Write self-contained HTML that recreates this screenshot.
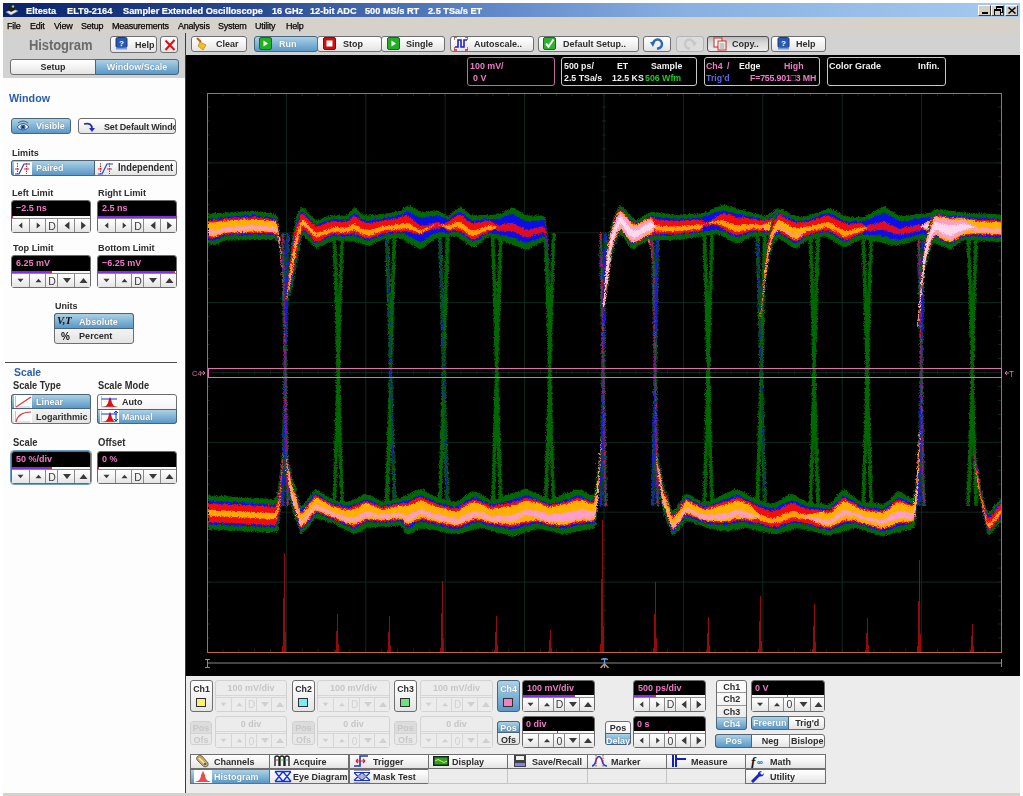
<!DOCTYPE html>
<html><head><meta charset="utf-8"><style>
html,body{margin:0;padding:0;}
body{width:1023px;height:796px;overflow:hidden;position:relative;background:#fff;font-family:"Liberation Sans", sans-serif;}
div{font-family:"Liberation Sans", sans-serif;}
</style></head><body>
<div style="position:absolute;left:3px;top:3px;width:1017px;height:793px;background:#d6d2ca;"></div><div style="position:absolute;left:3px;top:3px;width:1017px;height:14px;background:linear-gradient(90deg,#0a246a 0%,#2a4a90 25%,#6088c8 48%,#88b0e0 67%,#a6caf0 100%);"></div><svg style="position:absolute;left:5px;top:4px" width="14" height="12" viewBox="0 0 14 12"><path d="M1,8 L8,5 L13,7 L6,11 Z" fill="#e8e8e8" stroke="#888" stroke-width="0.6"/><path d="M3,3 L7,1 L10,3 L10,6 L6,8 L3,6 Z" fill="#202020"/><circle cx="8" cy="2.5" r="1.2" fill="#9ad09a"/></svg><div style="position:absolute;left:26px;top:6.02px;font-size:9.94px;font-weight:bold;color:#fff;white-space:nowrap;line-height:1;transform:scaleX(0.926);transform-origin:0 0;-webkit-text-stroke:0.2px #fff;">Eltesta</div><div style="position:absolute;left:66.5px;top:6.02px;font-size:9.94px;font-weight:bold;color:#fff;white-space:nowrap;line-height:1;transform:scaleX(0.926);transform-origin:0 0;-webkit-text-stroke:0.2px #fff;">ELT9-2164</div><div style="position:absolute;left:123.4px;top:6.02px;font-size:9.94px;font-weight:bold;color:#fff;white-space:nowrap;line-height:1;transform:scaleX(0.926);transform-origin:0 0;-webkit-text-stroke:0.2px #fff;">Sampler Extended Oscilloscope</div><div style="position:absolute;left:271.8px;top:6.02px;font-size:9.94px;font-weight:bold;color:#fff;white-space:nowrap;line-height:1;transform:scaleX(0.926);transform-origin:0 0;-webkit-text-stroke:0.2px #fff;">16 GHz</div><div style="position:absolute;left:310px;top:6.02px;font-size:9.94px;font-weight:bold;color:#fff;white-space:nowrap;line-height:1;transform:scaleX(0.926);transform-origin:0 0;-webkit-text-stroke:0.2px #fff;">12-bit ADC</div><div style="position:absolute;left:364.6px;top:6.02px;font-size:9.94px;font-weight:bold;color:#fff;white-space:nowrap;line-height:1;transform:scaleX(0.926);transform-origin:0 0;-webkit-text-stroke:0.2px #fff;">500 MS/s RT</div><div style="position:absolute;left:428.2px;top:6.02px;font-size:9.94px;font-weight:bold;color:#fff;white-space:nowrap;line-height:1;transform:scaleX(0.926);transform-origin:0 0;-webkit-text-stroke:0.2px #fff;">2.5 TSa/s ET</div><div style="position:absolute;left:978px;top:5px;width:13px;height:11px;box-sizing:border-box;background:#d4d0c8;border:1px solid;border-color:#fff #404040 #404040 #fff;overflow:hidden;"><div style="position:absolute;left:3px;top:6px;width:6px;height:2px;background:#000"></div></div><div style="position:absolute;left:991px;top:5px;width:13px;height:11px;box-sizing:border-box;background:#d4d0c8;border:1px solid;border-color:#fff #404040 #404040 #fff;overflow:hidden;"><div style="position:absolute;left:4px;top:0px;width:5px;height:4px;border:1px solid #000;border-top-width:2px"></div><div style="position:absolute;left:2px;top:3px;width:5px;height:4px;border:1px solid #000;border-top-width:2px;background:#d4d0c8"></div></div><div style="position:absolute;left:1005px;top:5px;width:13px;height:11px;box-sizing:border-box;background:#d4d0c8;border:1px solid;border-color:#fff #404040 #404040 #fff;overflow:hidden;"><svg style="position:absolute;left:2px;top:1px" width="8" height="7" viewBox="0 0 8 7"><path d="M0.5,0.5 L7.5,6.5 M7.5,0.5 L0.5,6.5" stroke="#000" stroke-width="1.5"/></svg></div><div style="position:absolute;left:7.4px;top:20.86px;font-size:9.72px;font-weight:normal;color:#000;white-space:nowrap;line-height:1;transform:scaleX(0.926);transform-origin:0 0;letter-spacing:-0.25px;-webkit-text-stroke:0.25px #000;">File</div><div style="position:absolute;left:29.7px;top:20.86px;font-size:9.72px;font-weight:normal;color:#000;white-space:nowrap;line-height:1;transform:scaleX(0.926);transform-origin:0 0;letter-spacing:-0.25px;-webkit-text-stroke:0.25px #000;">Edit</div><div style="position:absolute;left:54px;top:20.86px;font-size:9.72px;font-weight:normal;color:#000;white-space:nowrap;line-height:1;transform:scaleX(0.926);transform-origin:0 0;letter-spacing:-0.25px;-webkit-text-stroke:0.25px #000;">View</div><div style="position:absolute;left:80.6px;top:20.86px;font-size:9.72px;font-weight:normal;color:#000;white-space:nowrap;line-height:1;transform:scaleX(0.926);transform-origin:0 0;letter-spacing:-0.25px;-webkit-text-stroke:0.25px #000;">Setup</div><div style="position:absolute;left:112.4px;top:20.86px;font-size:9.72px;font-weight:normal;color:#000;white-space:nowrap;line-height:1;transform:scaleX(0.926);transform-origin:0 0;letter-spacing:-0.25px;-webkit-text-stroke:0.25px #000;">Measurements</div><div style="position:absolute;left:177.9px;top:20.86px;font-size:9.72px;font-weight:normal;color:#000;white-space:nowrap;line-height:1;transform:scaleX(0.926);transform-origin:0 0;letter-spacing:-0.25px;-webkit-text-stroke:0.25px #000;">Analysis</div><div style="position:absolute;left:218px;top:20.86px;font-size:9.72px;font-weight:normal;color:#000;white-space:nowrap;line-height:1;transform:scaleX(0.926);transform-origin:0 0;letter-spacing:-0.25px;-webkit-text-stroke:0.25px #000;">System</div><div style="position:absolute;left:255.2px;top:20.86px;font-size:9.72px;font-weight:normal;color:#000;white-space:nowrap;line-height:1;transform:scaleX(0.926);transform-origin:0 0;letter-spacing:-0.25px;-webkit-text-stroke:0.25px #000;">Utility</div><div style="position:absolute;left:285.8px;top:20.86px;font-size:9.72px;font-weight:normal;color:#000;white-space:nowrap;line-height:1;transform:scaleX(0.926);transform-origin:0 0;letter-spacing:-0.25px;-webkit-text-stroke:0.25px #000;">Help</div><div style="position:absolute;left:186px;top:33px;width:834px;height:22px;background:#d2d2d2;"></div><div style="position:absolute;left:191px;top:36px;width:56px;height:16px;box-sizing:border-box;border:1px solid #6e6e6e;border-radius:3px;background:linear-gradient(#ffffff,#f6f6f6 40%,#e4e4e4);"></div><svg style="position:absolute;left:195px;top:37px" width="14" height="14" viewBox="0 0 14 14"><path d="M2,1 L6,5" stroke="#b06a10" stroke-width="2.2"/><path d="M5,5 L11,8 L8,13 L3,9 Z" fill="#f0c020" stroke="#c08010" stroke-width="0.7"/></svg><div style="position:absolute;left:215.5px;top:39.46px;font-size:9.72px;font-weight:bold;color:#2c2c2c;white-space:nowrap;line-height:1;transform:scaleX(0.926);transform-origin:0 0;">Clear</div><div style="position:absolute;left:254px;top:36px;width:64px;height:16px;box-sizing:border-box;border:1px solid #4a6478;border-radius:3px;background:linear-gradient(#aed0e4,#86b8d8 45%,#5a98c8);"></div><svg style="position:absolute;left:259px;top:37px" width="14" height="14" viewBox="0 0 14 14"><rect x="0.5" y="0.5" width="12" height="12" rx="1.5" fill="#22b022" stroke="#107010"/><path d="M4.5,3.5 L9,6.5 L4.5,9.5 Z" fill="#fff"/></svg><div style="position:absolute;left:279px;top:39.46px;font-size:9.72px;font-weight:bold;color:#ffffff;white-space:nowrap;line-height:1;transform:scaleX(0.926);transform-origin:0 0;text-shadow:0 0 1px rgba(40,60,80,0.6);">Run</div><div style="position:absolute;left:317px;top:36px;width:65px;height:16px;box-sizing:border-box;border:1px solid #6e6e6e;border-radius:3px;background:linear-gradient(#ffffff,#f6f6f6 40%,#e4e4e4);"></div><svg style="position:absolute;left:323px;top:37px" width="14" height="14" viewBox="0 0 14 14"><rect x="0.5" y="0.5" width="12" height="12" rx="1.5" fill="#d01010" stroke="#801010"/><rect x="3.5" y="3.5" width="6" height="6" fill="#fff"/></svg><div style="position:absolute;left:343px;top:39.46px;font-size:9.72px;font-weight:bold;color:#2c2c2c;white-space:nowrap;line-height:1;transform:scaleX(0.926);transform-origin:0 0;">Stop</div><div style="position:absolute;left:381px;top:36px;width:64px;height:16px;box-sizing:border-box;border:1px solid #6e6e6e;border-radius:3px;background:linear-gradient(#ffffff,#f6f6f6 40%,#e4e4e4);"></div><svg style="position:absolute;left:387px;top:37px" width="14" height="14" viewBox="0 0 14 14"><rect x="0.5" y="0.5" width="12" height="12" rx="1.5" fill="#22b022" stroke="#107010"/><path d="M4.5,3.5 L9,6.5 L4.5,9.5 Z" fill="#fff"/></svg><div style="position:absolute;left:406px;top:39.46px;font-size:9.72px;font-weight:bold;color:#2c2c2c;white-space:nowrap;line-height:1;transform:scaleX(0.926);transform-origin:0 0;">Single</div><div style="position:absolute;left:450px;top:36px;width:84px;height:16px;box-sizing:border-box;border:1px solid #6e6e6e;border-radius:3px;background:linear-gradient(#ffffff,#f6f6f6 40%,#e4e4e4);"></div><svg style="position:absolute;left:454px;top:37px" width="14" height="14" viewBox="0 0 14 14"><path d="M1,10 L4,10 L4,3 L7,3 L7,10 L10,10 L10,3 L13,3" stroke="#2020d0" stroke-width="1.6" fill="none"/><path d="M0,0 h3 M0,0 v3 M14,0 h-3 M14,0 v3 M0,13 h3 M0,13 v-3 M14,13 h-3 M14,13 v-3" stroke="#e02020" stroke-width="1.4"/></svg><div style="position:absolute;left:474.3px;top:39.46px;font-size:9.72px;font-weight:bold;color:#2c2c2c;white-space:nowrap;line-height:1;transform:scaleX(0.926);transform-origin:0 0;">Autoscale..</div><div style="position:absolute;left:538px;top:36px;width:101px;height:16px;box-sizing:border-box;border:1px solid #6e6e6e;border-radius:3px;background:linear-gradient(#ffffff,#f6f6f6 40%,#e4e4e4);"></div><svg style="position:absolute;left:543px;top:37px" width="14" height="14" viewBox="0 0 14 14"><rect x="0.5" y="0.5" width="12" height="12" rx="1.5" fill="#30b030" stroke="#107010"/><path d="M3,6.5 L5.5,9.5 L10.5,2.5" stroke="#fff" stroke-width="2" fill="none"/></svg><div style="position:absolute;left:562.7px;top:39.46px;font-size:9.72px;font-weight:bold;color:#2c2c2c;white-space:nowrap;line-height:1;transform:scaleX(0.926);transform-origin:0 0;">Default Setup..</div><div style="position:absolute;left:643px;top:36px;width:28px;height:16px;box-sizing:border-box;border:1px solid #6e6e6e;border-radius:3px;background:linear-gradient(#ffffff,#f6f6f6 40%,#e4e4e4);"></div><svg style="position:absolute;left:650px;top:37px" width="14" height="14" viewBox="0 0 14 14"><path d="M3,7 A4.5,4.5 0 1 1 7,11.5" stroke="#2868c0" stroke-width="2.4" fill="none"/><path d="M0,5 L5,5 L3,10 Z" fill="#2868c0"/></svg><div style="position:absolute;left:676px;top:36px;width:28px;height:16px;box-sizing:border-box;border:1px solid #b4b4b4;border-radius:3px;background:#dcdcdc;"></div><svg style="position:absolute;left:683px;top:37px" width="14" height="14" viewBox="0 0 14 14"><path d="M11,7 A4.5,4.5 0 1 0 7,11.5" stroke="#c8c8c8" stroke-width="2.4" fill="none"/><path d="M14,5 L9,5 L11,10 Z" fill="#c8c8c8"/></svg><div style="position:absolute;left:707px;top:36px;width:62px;height:16px;box-sizing:border-box;border:1px solid #505050;border-radius:3px;background:linear-gradient(#bcbcbc,#dcdcdc 50%,#ececec);"></div><svg style="position:absolute;left:713px;top:37px" width="14" height="14" viewBox="0 0 14 14"><rect x="1" y="1" width="8" height="9" fill="#fff" stroke="#d02020"/><rect x="5" y="4" width="8" height="9" fill="#fff" stroke="#d02020"/><path d="M6.5,7 h5 M6.5,9 h5 M6.5,11 h5" stroke="#707070" stroke-width="0.8"/></svg><div style="position:absolute;left:732px;top:39.46px;font-size:9.72px;font-weight:bold;color:#2c2c2c;white-space:nowrap;line-height:1;transform:scaleX(0.926);transform-origin:0 0;">Copy..</div><div style="position:absolute;left:771px;top:36px;width:55px;height:16px;box-sizing:border-box;border:1px solid #6e6e6e;border-radius:3px;background:linear-gradient(#ffffff,#f6f6f6 40%,#e4e4e4);"></div><svg style="position:absolute;left:777px;top:37px" width="14" height="14" viewBox="0 0 14 14"><rect x="1" y="0.5" width="11" height="10" rx="1.5" fill="#2858b0" stroke="#183880"/><rect x="1" y="10.5" width="11" height="2" fill="#7898d0"/><text x="6.5" y="8.5" font-family="Liberation Sans" font-size="8" font-weight="bold" fill="#fff" text-anchor="middle">?</text></svg><div style="position:absolute;left:795.5px;top:39.46px;font-size:9.72px;font-weight:bold;color:#2c2c2c;white-space:nowrap;line-height:1;transform:scaleX(0.926);transform-origin:0 0;">Help</div><div style="position:absolute;left:3px;top:33px;width:182px;height:45px;background:#d2d2d2;"></div><div style="position:absolute;left:3px;top:78px;width:182px;height:715px;background:#fdfdfd;"></div><div style="position:absolute;left:185px;top:33px;width:1px;height:760px;background:#3c3c3c;"></div><div style="position:absolute;left:29px;top:38.45px;font-size:14.04px;font-weight:bold;color:#6a6a6a;white-space:nowrap;line-height:1;transform:scaleX(0.926);transform-origin:0 0;letter-spacing:-0.1px;">Histogram</div><div style="position:absolute;left:110px;top:36px;width:47px;height:17px;box-sizing:border-box;border:1px solid #6e6e6e;border-radius:3px;background:linear-gradient(#ffffff,#f6f6f6 40%,#e4e4e4);"></div><svg style="position:absolute;left:115px;top:37px" width="14" height="14" viewBox="0 0 14 14"><rect x="1" y="0.5" width="11" height="10" rx="1.5" fill="#2858b0" stroke="#183880"/><rect x="1" y="10.5" width="11" height="2" fill="#7898d0"/><text x="6.5" y="8.5" font-family="Liberation Sans" font-size="8" font-weight="bold" fill="#fff" text-anchor="middle">?</text></svg><div style="position:absolute;left:135px;top:40.06px;font-size:9.72px;font-weight:bold;color:#2c2c2c;white-space:nowrap;line-height:1;transform:scaleX(0.926);transform-origin:0 0;">Help</div><div style="position:absolute;left:160px;top:36px;width:18px;height:17px;box-sizing:border-box;border:1px solid #6e6e6e;border-radius:3px;background:linear-gradient(#ffffff,#f6f6f6 40%,#e4e4e4);"><svg style="position:absolute;left:3px;top:2px" width="12" height="12" viewBox="0 0 12 12"><path d="M1.5,1.5 L10.5,11 M10.5,1 L1.5,11" stroke="#e01010" stroke-width="2"/></svg></div><div style="position:absolute;left:10px;top:59px;width:86px;height:16px;box-sizing:border-box;border:1px solid #6e6e6e;border-radius:3px;background:linear-gradient(#ffffff,#f6f6f6 40%,#e4e4e4);border-radius:3px 0 0 3px;"></div><div style="position:absolute;left:10px;top:62.46px;width:86px;text-align:center;font-size:9.72px;font-weight:bold;color:#2c2c2c;white-space:nowrap;line-height:1;transform:scaleX(0.926);transform-origin:50% 0;">Setup</div><div style="position:absolute;left:95px;top:59px;width:84px;height:16px;box-sizing:border-box;border:1px solid #4a6478;border-radius:3px;background:linear-gradient(#aed0e4,#86b8d8 45%,#5a98c8);border-radius:0 3px 3px 0;"></div><div style="position:absolute;left:95px;top:62.46px;width:84px;text-align:center;font-size:9.72px;font-weight:bold;color:#ffffff;white-space:nowrap;line-height:1;transform:scaleX(0.926);transform-origin:50% 0;text-shadow:0 0 1px rgba(40,60,80,0.6);">Window/Scale</div><div style="position:absolute;left:9px;top:91.61px;font-size:11.61px;font-weight:bold;color:#2a5ea8;white-space:nowrap;line-height:1;transform:scaleX(0.926);transform-origin:0 0;">Window</div><div style="position:absolute;left:11px;top:118px;width:60px;height:16px;box-sizing:border-box;border:1px solid #4a6478;border-radius:3px;background:linear-gradient(#aed0e4,#86b8d8 45%,#5a98c8);"></div><svg style="position:absolute;left:16px;top:119px" width="14" height="13" viewBox="0 0 14 13"><path d="M1,8 Q7,1 13,8 Q7,14 1,8 Z" fill="#fff" stroke="#304060" stroke-width="0.8"/><circle cx="7" cy="8" r="2.6" fill="#2a70c0"/><circle cx="7" cy="8" r="1" fill="#102040"/><path d="M2,4 Q7,0 12,4" stroke="#304060" fill="none" stroke-width="0.8"/></svg><div style="position:absolute;left:35.5px;top:120.76px;font-size:9.72px;font-weight:bold;color:#ffffff;white-space:nowrap;line-height:1;transform:scaleX(0.926);transform-origin:0 0;text-shadow:0 0 1px rgba(40,60,80,0.6);">Visible</div><div style="position:absolute;left:78px;top:118px;width:98px;height:16px;box-sizing:border-box;border:1px solid #6e6e6e;border-radius:3px;background:linear-gradient(#ffffff,#f6f6f6 40%,#e4e4e4);overflow:hidden;"><svg style="position:absolute;left:4px;top:2px" width="14" height="12" viewBox="0 0 14 12"><path d="M1,3 Q9,1 9,8" stroke="#2030b0" stroke-width="1.8" fill="none"/><path d="M6,7 L12,7 L9,11 Z" fill="#2030b0"/></svg><div style="position:absolute;left:25px;top:3.26px;font-size:9.72px;font-weight:bold;color:#2c2c2c;white-space:nowrap;line-height:1;transform:scaleX(0.926);transform-origin:0 0;letter-spacing:-0.2px;">Set Default Window</div></div><div style="position:absolute;left:12px;top:147.74px;font-size:9.83px;font-weight:bold;color:#2c2c2c;white-space:nowrap;line-height:1;transform:scaleX(0.926);transform-origin:0 0;">Limits</div><div style="position:absolute;left:11px;top:160px;width:166px;height:16px;box-sizing:border-box;border:1px solid #6e6e6e;border-radius:3px;background:linear-gradient(#ffffff,#f6f6f6 40%,#e4e4e4);"></div><div style="position:absolute;left:11px;top:160px;width:84px;height:16px;box-sizing:border-box;border:1px solid #4a6478;border-radius:3px;background:linear-gradient(#aed0e4,#86b8d8 45%,#5a98c8);border-radius:3px 0 0 3px;"></div><svg style="position:absolute;left:14px;top:161.5px" width="18" height="13" viewBox="0 0 18 13"><rect x="0" y="0" width="18" height="13" fill="#fff"/><path d="M1,12 L5,12 L10,2 L16,2" stroke="#2040d0" stroke-width="1.2" fill="none"/><path d="M3.5,1 v11 M12.5,1 v11" stroke="#e02020" stroke-width="1" stroke-dasharray="1.5,1"/><path d="M1,7 h4 M10,7 h5" stroke="#e02020" stroke-width="1"/></svg><div style="position:absolute;left:36.2px;top:162.66px;font-size:9.72px;font-weight:bold;color:#ffffff;white-space:nowrap;line-height:1;transform:scaleX(0.926);transform-origin:0 0;text-shadow:0 0 1px rgba(40,60,80,0.6);">Paired</div><svg style="position:absolute;left:97px;top:161.5px" width="18" height="13" viewBox="0 0 18 13"><path d="M1,12 L5,12 L10,2 L16,2" stroke="#2040d0" stroke-width="1.2" fill="none"/><path d="M3.5,1 v11 M12.5,1 v11" stroke="#e02020" stroke-width="1" stroke-dasharray="1.5,1"/><path d="M1,7 h4 M10,7 h5" stroke="#e02020" stroke-width="1"/></svg><div style="position:absolute;left:118.3px;top:162.60px;font-size:10.04px;font-weight:bold;color:#2c2c2c;white-space:nowrap;line-height:1;transform:scaleX(0.926);transform-origin:0 0;">Independent</div><div style="position:absolute;left:12px;top:188.02px;font-size:9.94px;font-weight:bold;color:#2c2c2c;white-space:nowrap;line-height:1;transform:scaleX(0.926);transform-origin:0 0;">Left Limit</div><div style="position:absolute;left:98px;top:188.02px;font-size:9.94px;font-weight:bold;color:#2c2c2c;white-space:nowrap;line-height:1;transform:scaleX(0.926);transform-origin:0 0;">Right Limit</div><div style="position:absolute;left:11px;top:200px;width:80px;height:33px;box-sizing:border-box;border:1px solid #6a6a6a;border-radius:3px;background:#fff;overflow:hidden;"></div><div style="position:absolute;left:12px;top:201px;width:78px;height:15px;background:#000;border-radius:2px 2px 0 0;"></div><div style="position:absolute;left:15.5px;top:203.06px;font-size:9.72px;font-weight:bold;color:#f07ac8;white-space:nowrap;line-height:1;transform:scaleX(0.926);transform-origin:0 0;">&minus;2.5 ns</div><div style="position:absolute;left:12px;top:216px;width:78px;height:3px;background:#f6f6f6;border-bottom:1px solid #8a8a8a;box-sizing:border-box;"></div><div style="position:absolute;left:11px;top:216px;width:2px;height:2px;background:#e02040;"></div><div style="position:absolute;left:12px;top:219px;width:17px;height:13px;box-sizing:border-box;background:linear-gradient(#ffffff,#f6f6f6 40%,#e4e4e4);"><svg style="position:absolute;left:0px;top:0px" width="17" height="13" viewBox="0 0 17 13"><path d="M6.7,6.5 L10.3,3.5 L10.3,9.5 Z" fill="#3a3a3a"/></svg></div><div style="position:absolute;left:29px;top:219px;width:16px;height:13px;box-sizing:border-box;background:linear-gradient(#ffffff,#f6f6f6 40%,#e4e4e4);border-left:1px solid #8a8a8a;"><svg style="position:absolute;left:0px;top:0px" width="16" height="13" viewBox="0 0 16 13"><path d="M10.3,6.5 L6.7,3.5 L6.7,9.5 Z" fill="#3a3a3a"/></svg></div><div style="position:absolute;left:45px;top:219px;width:12px;height:13px;box-sizing:border-box;background:linear-gradient(#ffffff,#f6f6f6 40%,#e4e4e4);border-left:1px solid #8a8a8a;"><div style="position:absolute;left:0px;top:1.66px;width:12px;text-align:center;font-size:11.34px;font-weight:normal;color:#3a3a3a;white-space:nowrap;line-height:1;transform:scaleX(0.926);transform-origin:50% 0;">D</div></div><div style="position:absolute;left:57px;top:219px;width:17px;height:13px;box-sizing:border-box;background:linear-gradient(#ffffff,#f6f6f6 40%,#e4e4e4);border-left:1px solid #8a8a8a;"><svg style="position:absolute;left:0px;top:0px" width="17" height="13" viewBox="0 0 17 13"><path d="M6.6,6.5 L11.4,2.5 L11.4,10.5 Z" fill="#3a3a3a"/></svg></div><div style="position:absolute;left:74px;top:219px;width:16px;height:13px;box-sizing:border-box;background:linear-gradient(#ffffff,#f6f6f6 40%,#e4e4e4);border-left:1px solid #8a8a8a;"><svg style="position:absolute;left:0px;top:0px" width="16" height="13" viewBox="0 0 16 13"><path d="M10.9,6.5 L6.1,2.5 L6.1,10.5 Z" fill="#3a3a3a"/></svg></div><div style="position:absolute;left:97px;top:200px;width:80px;height:33px;box-sizing:border-box;border:1px solid #6a6a6a;border-radius:3px;background:#fff;overflow:hidden;"></div><div style="position:absolute;left:98px;top:201px;width:78px;height:15px;background:#000;border-radius:2px 2px 0 0;"></div><div style="position:absolute;left:101.5px;top:203.06px;font-size:9.72px;font-weight:bold;color:#f07ac8;white-space:nowrap;line-height:1;transform:scaleX(0.926);transform-origin:0 0;">2.5 ns</div><div style="position:absolute;left:98px;top:216px;width:78px;height:3px;background:#f6f6f6;border-bottom:1px solid #8a8a8a;box-sizing:border-box;"></div><div style="position:absolute;left:98px;top:216px;width:78px;height:2px;background:#8030e0;"></div><div style="position:absolute;left:175px;top:216px;width:2px;height:2px;background:#e02040;"></div><div style="position:absolute;left:98px;top:219px;width:17px;height:13px;box-sizing:border-box;background:linear-gradient(#ffffff,#f6f6f6 40%,#e4e4e4);"><svg style="position:absolute;left:0px;top:0px" width="17" height="13" viewBox="0 0 17 13"><path d="M6.7,6.5 L10.3,3.5 L10.3,9.5 Z" fill="#3a3a3a"/></svg></div><div style="position:absolute;left:115px;top:219px;width:16px;height:13px;box-sizing:border-box;background:linear-gradient(#ffffff,#f6f6f6 40%,#e4e4e4);border-left:1px solid #8a8a8a;"><svg style="position:absolute;left:0px;top:0px" width="16" height="13" viewBox="0 0 16 13"><path d="M10.3,6.5 L6.7,3.5 L6.7,9.5 Z" fill="#3a3a3a"/></svg></div><div style="position:absolute;left:131px;top:219px;width:12px;height:13px;box-sizing:border-box;background:linear-gradient(#ffffff,#f6f6f6 40%,#e4e4e4);border-left:1px solid #8a8a8a;"><div style="position:absolute;left:0px;top:1.66px;width:12px;text-align:center;font-size:11.34px;font-weight:normal;color:#3a3a3a;white-space:nowrap;line-height:1;transform:scaleX(0.926);transform-origin:50% 0;">D</div></div><div style="position:absolute;left:143px;top:219px;width:17px;height:13px;box-sizing:border-box;background:linear-gradient(#ffffff,#f6f6f6 40%,#e4e4e4);border-left:1px solid #8a8a8a;"><svg style="position:absolute;left:0px;top:0px" width="17" height="13" viewBox="0 0 17 13"><path d="M6.6,6.5 L11.4,2.5 L11.4,10.5 Z" fill="#3a3a3a"/></svg></div><div style="position:absolute;left:160px;top:219px;width:16px;height:13px;box-sizing:border-box;background:linear-gradient(#ffffff,#f6f6f6 40%,#e4e4e4);border-left:1px solid #8a8a8a;"><svg style="position:absolute;left:0px;top:0px" width="16" height="13" viewBox="0 0 16 13"><path d="M10.9,6.5 L6.1,2.5 L6.1,10.5 Z" fill="#3a3a3a"/></svg></div><div style="position:absolute;left:12.6px;top:243.02px;font-size:9.94px;font-weight:bold;color:#2c2c2c;white-space:nowrap;line-height:1;transform:scaleX(0.926);transform-origin:0 0;">Top Limit</div><div style="position:absolute;left:98px;top:243.02px;font-size:9.94px;font-weight:bold;color:#2c2c2c;white-space:nowrap;line-height:1;transform:scaleX(0.926);transform-origin:0 0;">Bottom Limit</div><div style="position:absolute;left:11px;top:255px;width:80px;height:33px;box-sizing:border-box;border:1px solid #6a6a6a;border-radius:3px;background:#fff;overflow:hidden;"></div><div style="position:absolute;left:12px;top:256px;width:78px;height:15px;background:#000;border-radius:2px 2px 0 0;"></div><div style="position:absolute;left:15.5px;top:258.06px;font-size:9.72px;font-weight:bold;color:#f07ac8;white-space:nowrap;line-height:1;transform:scaleX(0.926);transform-origin:0 0;">6.25 mV</div><div style="position:absolute;left:12px;top:271px;width:78px;height:3px;background:#f6f6f6;border-bottom:1px solid #8a8a8a;box-sizing:border-box;"></div><div style="position:absolute;left:12px;top:271px;width:39px;height:2px;background:#8030e0;"></div><div style="position:absolute;left:50px;top:271px;width:2px;height:2px;background:#e02040;"></div><div style="position:absolute;left:12px;top:274px;width:17px;height:13px;box-sizing:border-box;background:linear-gradient(#ffffff,#f6f6f6 40%,#e4e4e4);"><svg style="position:absolute;left:0px;top:0px" width="17" height="13" viewBox="0 0 17 13"><path d="M5.5,4.7 L11.5,4.7 L8.5,8.3 Z" fill="#3a3a3a"/></svg></div><div style="position:absolute;left:29px;top:274px;width:16px;height:13px;box-sizing:border-box;background:linear-gradient(#ffffff,#f6f6f6 40%,#e4e4e4);border-left:1px solid #8a8a8a;"><svg style="position:absolute;left:0px;top:0px" width="16" height="13" viewBox="0 0 16 13"><path d="M5.5,8.3 L11.5,8.3 L8.5,4.7 Z" fill="#3a3a3a"/></svg></div><div style="position:absolute;left:45px;top:274px;width:12px;height:13px;box-sizing:border-box;background:linear-gradient(#ffffff,#f6f6f6 40%,#e4e4e4);border-left:1px solid #8a8a8a;"><div style="position:absolute;left:0px;top:1.66px;width:12px;text-align:center;font-size:11.34px;font-weight:normal;color:#3a3a3a;white-space:nowrap;line-height:1;transform:scaleX(0.926);transform-origin:50% 0;">D</div></div><div style="position:absolute;left:57px;top:274px;width:17px;height:13px;box-sizing:border-box;background:linear-gradient(#ffffff,#f6f6f6 40%,#e4e4e4);border-left:1px solid #8a8a8a;"><svg style="position:absolute;left:0px;top:0px" width="17" height="13" viewBox="0 0 17 13"><path d="M5.0,4.1 L13.0,4.1 L9.0,8.9 Z" fill="#3a3a3a"/></svg></div><div style="position:absolute;left:74px;top:274px;width:16px;height:13px;box-sizing:border-box;background:linear-gradient(#ffffff,#f6f6f6 40%,#e4e4e4);border-left:1px solid #8a8a8a;"><svg style="position:absolute;left:0px;top:0px" width="16" height="13" viewBox="0 0 16 13"><path d="M4.5,8.9 L12.5,8.9 L8.5,4.1 Z" fill="#3a3a3a"/></svg></div><div style="position:absolute;left:97px;top:255px;width:80px;height:33px;box-sizing:border-box;border:1px solid #6a6a6a;border-radius:3px;background:#fff;overflow:hidden;"></div><div style="position:absolute;left:98px;top:256px;width:78px;height:15px;background:#000;border-radius:2px 2px 0 0;"></div><div style="position:absolute;left:101.5px;top:258.06px;font-size:9.72px;font-weight:bold;color:#f07ac8;white-space:nowrap;line-height:1;transform:scaleX(0.926);transform-origin:0 0;">&minus;6.25 mV</div><div style="position:absolute;left:98px;top:271px;width:78px;height:3px;background:#f6f6f6;border-bottom:1px solid #8a8a8a;box-sizing:border-box;"></div><div style="position:absolute;left:98px;top:271px;width:76px;height:2px;background:#8030e0;"></div><div style="position:absolute;left:173px;top:271px;width:2px;height:2px;background:#e02040;"></div><div style="position:absolute;left:98px;top:274px;width:17px;height:13px;box-sizing:border-box;background:linear-gradient(#ffffff,#f6f6f6 40%,#e4e4e4);"><svg style="position:absolute;left:0px;top:0px" width="17" height="13" viewBox="0 0 17 13"><path d="M5.5,4.7 L11.5,4.7 L8.5,8.3 Z" fill="#3a3a3a"/></svg></div><div style="position:absolute;left:115px;top:274px;width:16px;height:13px;box-sizing:border-box;background:linear-gradient(#ffffff,#f6f6f6 40%,#e4e4e4);border-left:1px solid #8a8a8a;"><svg style="position:absolute;left:0px;top:0px" width="16" height="13" viewBox="0 0 16 13"><path d="M5.5,8.3 L11.5,8.3 L8.5,4.7 Z" fill="#3a3a3a"/></svg></div><div style="position:absolute;left:131px;top:274px;width:12px;height:13px;box-sizing:border-box;background:linear-gradient(#ffffff,#f6f6f6 40%,#e4e4e4);border-left:1px solid #8a8a8a;"><div style="position:absolute;left:0px;top:1.66px;width:12px;text-align:center;font-size:11.34px;font-weight:normal;color:#3a3a3a;white-space:nowrap;line-height:1;transform:scaleX(0.926);transform-origin:50% 0;">D</div></div><div style="position:absolute;left:143px;top:274px;width:17px;height:13px;box-sizing:border-box;background:linear-gradient(#ffffff,#f6f6f6 40%,#e4e4e4);border-left:1px solid #8a8a8a;"><svg style="position:absolute;left:0px;top:0px" width="17" height="13" viewBox="0 0 17 13"><path d="M5.0,4.1 L13.0,4.1 L9.0,8.9 Z" fill="#3a3a3a"/></svg></div><div style="position:absolute;left:160px;top:274px;width:16px;height:13px;box-sizing:border-box;background:linear-gradient(#ffffff,#f6f6f6 40%,#e4e4e4);border-left:1px solid #8a8a8a;"><svg style="position:absolute;left:0px;top:0px" width="16" height="13" viewBox="0 0 16 13"><path d="M4.5,8.9 L12.5,8.9 L8.5,4.1 Z" fill="#3a3a3a"/></svg></div><div style="position:absolute;left:55.2px;top:301.06px;font-size:9.72px;font-weight:bold;color:#2c2c2c;white-space:nowrap;line-height:1;transform:scaleX(0.926);transform-origin:0 0;">Units</div><div style="position:absolute;left:54px;top:313px;width:80px;height:31px;box-sizing:border-box;border:1px solid #6e6e6e;border-radius:3px;background:linear-gradient(#ffffff,#f6f6f6 40%,#e4e4e4);"></div><div style="position:absolute;left:54px;top:313px;width:80px;height:16px;box-sizing:border-box;border:1px solid #4a6478;border-radius:3px;background:linear-gradient(#aed0e4,#86b8d8 45%,#5a98c8);border-radius:3px 3px 0 0;"></div><div style="position:absolute;left:57px;top:315.26px;font-size:11.34px;font-weight:bold;color:#101010;white-space:nowrap;line-height:1;transform:scaleX(0.926);transform-origin:0 0;font-family:'Liberation Serif',serif;"><i>V,T</i></div><div style="position:absolute;left:78.9px;top:316.54px;font-size:9.83px;font-weight:bold;color:#ffffff;white-space:nowrap;line-height:1;transform:scaleX(0.926);transform-origin:0 0;text-shadow:0 0 1px rgba(40,60,80,0.6);">Absolute</div><div style="position:absolute;left:61px;top:330.86px;font-size:10.80px;font-weight:bold;color:#101010;white-space:nowrap;line-height:1;transform:scaleX(0.926);transform-origin:0 0;">%</div><div style="position:absolute;left:78.9px;top:331.44px;font-size:9.83px;font-weight:bold;color:#2c2c2c;white-space:nowrap;line-height:1;transform:scaleX(0.926);transform-origin:0 0;">Percent</div><div style="position:absolute;left:5px;top:362px;width:172px;height:1px;background:#4a4a4a;"></div><div style="position:absolute;left:13.9px;top:367.18px;font-size:11.23px;font-weight:bold;color:#2a5ea8;white-space:nowrap;line-height:1;transform:scaleX(0.926);transform-origin:0 0;">Scale</div><div style="position:absolute;left:12.6px;top:381.00px;font-size:10.04px;font-weight:bold;color:#2c2c2c;white-space:nowrap;line-height:1;transform:scaleX(0.926);transform-origin:0 0;">Scale Type</div><div style="position:absolute;left:98.4px;top:381.00px;font-size:10.04px;font-weight:bold;color:#2c2c2c;white-space:nowrap;line-height:1;transform:scaleX(0.926);transform-origin:0 0;">Scale Mode</div><div style="position:absolute;left:11px;top:394px;width:80px;height:30px;box-sizing:border-box;border:1px solid #6e6e6e;border-radius:3px;background:linear-gradient(#ffffff,#f6f6f6 40%,#e4e4e4);"></div><div style="position:absolute;left:11px;top:394px;width:80px;height:15px;box-sizing:border-box;border:1px solid #4a6478;border-radius:3px;background:linear-gradient(#aed0e4,#86b8d8 45%,#5a98c8);border-radius:3px 3px 0 0;"></div><svg style="position:absolute;left:14px;top:395px" width="18" height="13" viewBox="0 0 18 13"><rect width="18" height="13" fill="#fff"/><path d="M2,12 L17,2" stroke="#e03030" stroke-width="1.2"/><path d="M1.5,1 v11 h15" stroke="#999" stroke-width="0.6" fill="none"/></svg><div style="position:absolute;left:36.2px;top:396.76px;font-size:9.72px;font-weight:bold;color:#ffffff;white-space:nowrap;line-height:1;transform:scaleX(0.926);transform-origin:0 0;text-shadow:0 0 1px rgba(40,60,80,0.6);">Linear</div><svg style="position:absolute;left:14px;top:410px" width="18" height="13" viewBox="0 0 18 13"><rect width="18" height="13" fill="#fff"/><path d="M2,12 Q4,2 17,2" stroke="#e03030" stroke-width="1.2" fill="none"/><path d="M1.5,1 v11 h15" stroke="#999" stroke-width="0.6" fill="none"/></svg><div style="position:absolute;left:36.2px;top:411.66px;font-size:9.72px;font-weight:bold;color:#2c2c2c;white-space:nowrap;line-height:1;transform:scaleX(0.926);transform-origin:0 0;">Logarithmic</div><div style="position:absolute;left:97px;top:394px;width:80px;height:30px;box-sizing:border-box;border:1px solid #6e6e6e;border-radius:3px;background:linear-gradient(#ffffff,#f6f6f6 40%,#e4e4e4);"></div><div style="position:absolute;left:97px;top:409px;width:80px;height:15px;box-sizing:border-box;border:1px solid #4a6478;border-radius:3px;background:linear-gradient(#aed0e4,#86b8d8 45%,#5a98c8);border-radius:0 0 3px 3px;"></div><svg style="position:absolute;left:100px;top:395px" width="19" height="13" viewBox="0 0 19 13"><rect width="19" height="13" fill="#fff"/><path d="M2,12 L6,11 L8,8 L9,4 L10,2 L11,4 L12,8 L14,11 L18,12 Z" fill="#e01010"/><path d="M1,4 h16" stroke="#1030d0" stroke-width="1"/><path d="M1.5,1 v11 h16" stroke="#999" stroke-width="0.6" fill="none"/></svg><div style="position:absolute;left:121.7px;top:396.76px;font-size:9.72px;font-weight:bold;color:#2c2c2c;white-space:nowrap;line-height:1;transform:scaleX(0.926);transform-origin:0 0;">Auto</div><svg style="position:absolute;left:100px;top:410px" width="19" height="13" viewBox="0 0 19 13"><rect width="19" height="13" fill="#fff"/><path d="M2,12 L6,11 L8,8 L9,4 L10,2 L11,4 L12,8 L14,11 L18,12 Z" fill="#e01010"/><path d="M1,4 h16" stroke="#1030d0" stroke-width="1"/><path d="M1.5,1 v11 h16" stroke="#999" stroke-width="0.6" fill="none"/><path d="M16,1 v10 M14,3 l2,-2 l2,2 M14,9 l2,2 l2,-2" stroke="#1030d0" stroke-width="1" fill="none"/></svg><div style="position:absolute;left:121.7px;top:411.68px;font-size:9.61px;font-weight:bold;color:#ffffff;white-space:nowrap;line-height:1;transform:scaleX(0.926);transform-origin:0 0;text-shadow:0 0 1px rgba(40,60,80,0.6);">Manual</div><div style="position:absolute;left:12.6px;top:438.48px;font-size:10.15px;font-weight:bold;color:#2c2c2c;white-space:nowrap;line-height:1;transform:scaleX(0.926);transform-origin:0 0;">Scale</div><div style="position:absolute;left:98px;top:438.46px;font-size:10.26px;font-weight:bold;color:#2c2c2c;white-space:nowrap;line-height:1;transform:scaleX(0.926);transform-origin:0 0;">Offset</div><div style="position:absolute;left:10px;top:450px;width:82px;height:35px;box-sizing:border-box;border:1px solid #6aa0c8;border-radius:4px;"></div><div style="position:absolute;left:11px;top:451px;width:80px;height:33px;box-sizing:border-box;border:1px solid #6a6a6a;border-radius:3px;background:#fff;overflow:hidden;"></div><div style="position:absolute;left:12px;top:452px;width:78px;height:15px;background:#000;border-radius:2px 2px 0 0;"></div><div style="position:absolute;left:15.5px;top:454.06px;font-size:9.72px;font-weight:bold;color:#f07ac8;white-space:nowrap;line-height:1;transform:scaleX(0.926);transform-origin:0 0;">50 %/div</div><div style="position:absolute;left:12px;top:467px;width:78px;height:3px;background:#f6f6f6;border-bottom:1px solid #8a8a8a;box-sizing:border-box;"></div><div style="position:absolute;left:12px;top:467px;width:39px;height:2px;background:#8030e0;"></div><div style="position:absolute;left:50px;top:467px;width:2px;height:2px;background:#e02040;"></div><div style="position:absolute;left:12px;top:470px;width:17px;height:13px;box-sizing:border-box;background:linear-gradient(#ffffff,#f6f6f6 40%,#e4e4e4);"><svg style="position:absolute;left:0px;top:0px" width="17" height="13" viewBox="0 0 17 13"><path d="M5.5,4.7 L11.5,4.7 L8.5,8.3 Z" fill="#3a3a3a"/></svg></div><div style="position:absolute;left:29px;top:470px;width:16px;height:13px;box-sizing:border-box;background:linear-gradient(#ffffff,#f6f6f6 40%,#e4e4e4);border-left:1px solid #8a8a8a;"><svg style="position:absolute;left:0px;top:0px" width="16" height="13" viewBox="0 0 16 13"><path d="M5.5,8.3 L11.5,8.3 L8.5,4.7 Z" fill="#3a3a3a"/></svg></div><div style="position:absolute;left:45px;top:470px;width:12px;height:13px;box-sizing:border-box;background:linear-gradient(#ffffff,#f6f6f6 40%,#e4e4e4);border-left:1px solid #8a8a8a;"><div style="position:absolute;left:0px;top:1.66px;width:12px;text-align:center;font-size:11.34px;font-weight:normal;color:#3a3a3a;white-space:nowrap;line-height:1;transform:scaleX(0.926);transform-origin:50% 0;">D</div></div><div style="position:absolute;left:57px;top:470px;width:17px;height:13px;box-sizing:border-box;background:linear-gradient(#ffffff,#f6f6f6 40%,#e4e4e4);border-left:1px solid #8a8a8a;"><svg style="position:absolute;left:0px;top:0px" width="17" height="13" viewBox="0 0 17 13"><path d="M5.0,4.1 L13.0,4.1 L9.0,8.9 Z" fill="#3a3a3a"/></svg></div><div style="position:absolute;left:74px;top:470px;width:16px;height:13px;box-sizing:border-box;background:linear-gradient(#ffffff,#f6f6f6 40%,#e4e4e4);border-left:1px solid #8a8a8a;"><svg style="position:absolute;left:0px;top:0px" width="16" height="13" viewBox="0 0 16 13"><path d="M4.5,8.9 L12.5,8.9 L8.5,4.1 Z" fill="#3a3a3a"/></svg></div><div style="position:absolute;left:97px;top:451px;width:80px;height:33px;box-sizing:border-box;border:1px solid #6a6a6a;border-radius:3px;background:#fff;overflow:hidden;"></div><div style="position:absolute;left:98px;top:452px;width:78px;height:15px;background:#000;border-radius:2px 2px 0 0;"></div><div style="position:absolute;left:101.5px;top:454.06px;font-size:9.72px;font-weight:bold;color:#f07ac8;white-space:nowrap;line-height:1;transform:scaleX(0.926);transform-origin:0 0;">0 %</div><div style="position:absolute;left:98px;top:467px;width:78px;height:3px;background:#f6f6f6;border-bottom:1px solid #8a8a8a;box-sizing:border-box;"></div><div style="position:absolute;left:97px;top:467px;width:2px;height:2px;background:#e02040;"></div><div style="position:absolute;left:98px;top:470px;width:17px;height:13px;box-sizing:border-box;background:linear-gradient(#ffffff,#f6f6f6 40%,#e4e4e4);"><svg style="position:absolute;left:0px;top:0px" width="17" height="13" viewBox="0 0 17 13"><path d="M5.5,4.7 L11.5,4.7 L8.5,8.3 Z" fill="#3a3a3a"/></svg></div><div style="position:absolute;left:115px;top:470px;width:16px;height:13px;box-sizing:border-box;background:linear-gradient(#ffffff,#f6f6f6 40%,#e4e4e4);border-left:1px solid #8a8a8a;"><svg style="position:absolute;left:0px;top:0px" width="16" height="13" viewBox="0 0 16 13"><path d="M5.5,8.3 L11.5,8.3 L8.5,4.7 Z" fill="#3a3a3a"/></svg></div><div style="position:absolute;left:131px;top:470px;width:12px;height:13px;box-sizing:border-box;background:linear-gradient(#ffffff,#f6f6f6 40%,#e4e4e4);border-left:1px solid #8a8a8a;"><div style="position:absolute;left:0px;top:1.66px;width:12px;text-align:center;font-size:11.34px;font-weight:normal;color:#3a3a3a;white-space:nowrap;line-height:1;transform:scaleX(0.926);transform-origin:50% 0;">D</div></div><div style="position:absolute;left:143px;top:470px;width:17px;height:13px;box-sizing:border-box;background:linear-gradient(#ffffff,#f6f6f6 40%,#e4e4e4);border-left:1px solid #8a8a8a;"><svg style="position:absolute;left:0px;top:0px" width="17" height="13" viewBox="0 0 17 13"><path d="M5.0,4.1 L13.0,4.1 L9.0,8.9 Z" fill="#3a3a3a"/></svg></div><div style="position:absolute;left:160px;top:470px;width:16px;height:13px;box-sizing:border-box;background:linear-gradient(#ffffff,#f6f6f6 40%,#e4e4e4);border-left:1px solid #8a8a8a;"><svg style="position:absolute;left:0px;top:0px" width="16" height="13" viewBox="0 0 16 13"><path d="M4.5,8.9 L12.5,8.9 L8.5,4.1 Z" fill="#3a3a3a"/></svg></div><div style="position:absolute;left:186px;top:55px;width:834px;height:621px;background:#000;"></div><div style="position:absolute;left:467px;top:57px;width:88px;height:29px;box-sizing:border-box;border:1px solid #c06c9c;border-radius:3px;"></div><div style="position:absolute;left:470px;top:60.98px;font-size:9.61px;font-weight:bold;color:#f07ac8;white-space:nowrap;line-height:1;transform:scaleX(0.926);transform-origin:0 0;">100 mV/</div><div style="position:absolute;left:473px;top:72.88px;font-size:9.61px;font-weight:bold;color:#f07ac8;white-space:nowrap;line-height:1;transform:scaleX(0.926);transform-origin:0 0;">0 V</div><div style="position:absolute;left:561px;top:57px;width:136px;height:29px;box-sizing:border-box;border:1px solid #c8c8c8;border-radius:3px;"></div><div style="position:absolute;left:563.7px;top:61.00px;font-size:9.50px;font-weight:bold;color:#f2f2f2;white-space:nowrap;line-height:1;transform:scaleX(0.926);transform-origin:0 0;">500 ps/</div><div style="position:absolute;left:616.7px;top:61.00px;font-size:9.50px;font-weight:bold;color:#f2f2f2;white-space:nowrap;line-height:1;transform:scaleX(0.926);transform-origin:0 0;">ET</div><div style="position:absolute;left:651px;top:61.00px;font-size:9.50px;font-weight:bold;color:#f2f2f2;white-space:nowrap;line-height:1;transform:scaleX(0.926);transform-origin:0 0;">Sample</div><div style="position:absolute;left:563.7px;top:72.90px;font-size:9.50px;font-weight:bold;color:#f2f2f2;white-space:nowrap;line-height:1;transform:scaleX(0.926);transform-origin:0 0;">2.5 TSa/s</div><div style="position:absolute;left:612px;top:72.90px;font-size:9.50px;font-weight:bold;color:#f2f2f2;white-space:nowrap;line-height:1;transform:scaleX(0.926);transform-origin:0 0;">12.5 KS</div><div style="position:absolute;left:645px;top:72.90px;font-size:9.50px;font-weight:bold;color:#18d018;white-space:nowrap;line-height:1;transform:scaleX(0.926);transform-origin:0 0;">506 Wfm</div><div style="position:absolute;left:704px;top:57px;width:116px;height:29px;box-sizing:border-box;border:1px solid #c8c8c8;border-radius:3px;"></div><div style="position:absolute;left:706px;top:61.00px;font-size:9.50px;font-weight:bold;color:#f07ac8;white-space:nowrap;line-height:1;transform:scaleX(0.926);transform-origin:0 0;">Ch4</div><div style="position:absolute;left:727px;top:61.00px;font-size:9.50px;font-weight:bold;color:#f07ac8;white-space:nowrap;line-height:1;transform:scaleX(0.926);transform-origin:0 0;">/</div><div style="position:absolute;left:738.6px;top:61.00px;font-size:9.50px;font-weight:bold;color:#f2f2f2;white-space:nowrap;line-height:1;transform:scaleX(0.926);transform-origin:0 0;">Edge</div><div style="position:absolute;left:784.3px;top:61.00px;font-size:9.50px;font-weight:bold;color:#f07ac8;white-space:nowrap;line-height:1;transform:scaleX(0.926);transform-origin:0 0;">High</div><div style="position:absolute;left:706px;top:72.90px;font-size:9.50px;font-weight:bold;color:#5a6ae8;white-space:nowrap;line-height:1;transform:scaleX(0.926);transform-origin:0 0;">Trig'd</div><div style="position:absolute;left:750px;top:72.90px;font-size:9.50px;font-weight:bold;color:#f07ac8;white-space:nowrap;line-height:1;transform:scaleX(0.926);transform-origin:0 0;letter-spacing:-0.2px;">F=755.901&#x25A1;3 MH</div><div style="position:absolute;left:827px;top:57px;width:119px;height:29px;box-sizing:border-box;border:1px solid #c8c8c8;border-radius:3px;"></div><div style="position:absolute;left:829px;top:60.96px;font-size:9.72px;font-weight:bold;color:#f2f2f2;white-space:nowrap;line-height:1;transform:scaleX(0.926);transform-origin:0 0;">Color Grade</div><div style="position:absolute;left:917.5px;top:60.96px;font-size:9.72px;font-weight:bold;color:#f2f2f2;white-space:nowrap;line-height:1;transform:scaleX(0.926);transform-origin:0 0;">Infin.</div><svg style="position:absolute;left:0;top:0" width="1023" height="796" viewBox="0 0 1023 796"><defs><clipPath id="pc"><rect x="207" y="93" width="794" height="559"/></clipPath></defs><g clip-path="url(#pc)"><line x1="286.4" y1="93" x2="286.4" y2="652" stroke="#0b2a1d" stroke-width="1"/>
<line x1="365.8" y1="93" x2="365.8" y2="652" stroke="#0b2a1d" stroke-width="1"/>
<line x1="445.2" y1="93" x2="445.2" y2="652" stroke="#0b2a1d" stroke-width="1"/>
<line x1="524.6" y1="93" x2="524.6" y2="652" stroke="#0b2a1d" stroke-width="1"/>
<line x1="604.0" y1="93" x2="604.0" y2="652" stroke="#0b2a1d" stroke-width="1"/>
<line x1="683.4" y1="93" x2="683.4" y2="652" stroke="#0b2a1d" stroke-width="1"/>
<line x1="762.8" y1="93" x2="762.8" y2="652" stroke="#0b2a1d" stroke-width="1"/>
<line x1="842.2" y1="93" x2="842.2" y2="652" stroke="#0b2a1d" stroke-width="1"/>
<line x1="921.6" y1="93" x2="921.6" y2="652" stroke="#0b2a1d" stroke-width="1"/>
<line x1="207" y1="162.9" x2="1001" y2="162.9" stroke="#0b2a1d" stroke-width="1"/>
<line x1="207" y1="232.8" x2="1001" y2="232.8" stroke="#0b2a1d" stroke-width="1"/>
<line x1="207" y1="302.6" x2="1001" y2="302.6" stroke="#0b2a1d" stroke-width="1"/>
<line x1="207" y1="372.5" x2="1001" y2="372.5" stroke="#0b2a1d" stroke-width="1"/>
<line x1="207" y1="442.4" x2="1001" y2="442.4" stroke="#0b2a1d" stroke-width="1"/>
<line x1="207" y1="512.2" x2="1001" y2="512.2" stroke="#0b2a1d" stroke-width="1"/>
<line x1="207" y1="582.1" x2="1001" y2="582.1" stroke="#0b2a1d" stroke-width="1"/>
<path d="M207.0,370.5 v4 M207.0,93 v3 M207.0,652 v-3 M222.9,370.5 v4 M222.9,93 v3 M222.9,652 v-3 M238.8,370.5 v4 M238.8,93 v3 M238.8,652 v-3 M254.6,370.5 v4 M254.6,93 v3 M254.6,652 v-3 M270.5,370.5 v4 M270.5,93 v3 M270.5,652 v-3 M286.4,370.5 v4 M286.4,93 v3 M286.4,652 v-3 M302.3,370.5 v4 M302.3,93 v3 M302.3,652 v-3 M318.2,370.5 v4 M318.2,93 v3 M318.2,652 v-3 M334.0,370.5 v4 M334.0,93 v3 M334.0,652 v-3 M349.9,370.5 v4 M349.9,93 v3 M349.9,652 v-3 M365.8,370.5 v4 M365.8,93 v3 M365.8,652 v-3 M381.7,370.5 v4 M381.7,93 v3 M381.7,652 v-3 M397.6,370.5 v4 M397.6,93 v3 M397.6,652 v-3 M413.4,370.5 v4 M413.4,93 v3 M413.4,652 v-3 M429.3,370.5 v4 M429.3,93 v3 M429.3,652 v-3 M445.2,370.5 v4 M445.2,93 v3 M445.2,652 v-3 M461.1,370.5 v4 M461.1,93 v3 M461.1,652 v-3 M477.0,370.5 v4 M477.0,93 v3 M477.0,652 v-3 M492.8,370.5 v4 M492.8,93 v3 M492.8,652 v-3 M508.7,370.5 v4 M508.7,93 v3 M508.7,652 v-3 M524.6,370.5 v4 M524.6,93 v3 M524.6,652 v-3 M540.5,370.5 v4 M540.5,93 v3 M540.5,652 v-3 M556.4,370.5 v4 M556.4,93 v3 M556.4,652 v-3 M572.2,370.5 v4 M572.2,93 v3 M572.2,652 v-3 M588.1,370.5 v4 M588.1,93 v3 M588.1,652 v-3 M604.0,370.5 v4 M604.0,93 v3 M604.0,652 v-3 M619.9,370.5 v4 M619.9,93 v3 M619.9,652 v-3 M635.8,370.5 v4 M635.8,93 v3 M635.8,652 v-3 M651.6,370.5 v4 M651.6,93 v3 M651.6,652 v-3 M667.5,370.5 v4 M667.5,93 v3 M667.5,652 v-3 M683.4,370.5 v4 M683.4,93 v3 M683.4,652 v-3 M699.3,370.5 v4 M699.3,93 v3 M699.3,652 v-3 M715.2,370.5 v4 M715.2,93 v3 M715.2,652 v-3 M731.0,370.5 v4 M731.0,93 v3 M731.0,652 v-3 M746.9,370.5 v4 M746.9,93 v3 M746.9,652 v-3 M762.8,370.5 v4 M762.8,93 v3 M762.8,652 v-3 M778.7,370.5 v4 M778.7,93 v3 M778.7,652 v-3 M794.6,370.5 v4 M794.6,93 v3 M794.6,652 v-3 M810.4,370.5 v4 M810.4,93 v3 M810.4,652 v-3 M826.3,370.5 v4 M826.3,93 v3 M826.3,652 v-3 M842.2,370.5 v4 M842.2,93 v3 M842.2,652 v-3 M858.1,370.5 v4 M858.1,93 v3 M858.1,652 v-3 M874.0,370.5 v4 M874.0,93 v3 M874.0,652 v-3 M889.8,370.5 v4 M889.8,93 v3 M889.8,652 v-3 M905.7,370.5 v4 M905.7,93 v3 M905.7,652 v-3 M921.6,370.5 v4 M921.6,93 v3 M921.6,652 v-3 M937.5,370.5 v4 M937.5,93 v3 M937.5,652 v-3 M953.4,370.5 v4 M953.4,93 v3 M953.4,652 v-3 M969.2,370.5 v4 M969.2,93 v3 M969.2,652 v-3 M985.1,370.5 v4 M985.1,93 v3 M985.1,652 v-3 M207,93.0 h3 M1001,93.0 h-3 M604.0,93.0 h-2 M604.0,93.0 h2 M207,107.0 h3 M1001,107.0 h-3 M604.0,107.0 h-2 M604.0,107.0 h2 M207,121.0 h3 M1001,121.0 h-3 M604.0,121.0 h-2 M604.0,121.0 h2 M207,134.9 h3 M1001,134.9 h-3 M604.0,134.9 h-2 M604.0,134.9 h2 M207,148.9 h3 M1001,148.9 h-3 M604.0,148.9 h-2 M604.0,148.9 h2 M207,162.9 h3 M1001,162.9 h-3 M604.0,162.9 h-2 M604.0,162.9 h2 M207,176.8 h3 M1001,176.8 h-3 M604.0,176.8 h-2 M604.0,176.8 h2 M207,190.8 h3 M1001,190.8 h-3 M604.0,190.8 h-2 M604.0,190.8 h2 M207,204.8 h3 M1001,204.8 h-3 M604.0,204.8 h-2 M604.0,204.8 h2 M207,218.8 h3 M1001,218.8 h-3 M604.0,218.8 h-2 M604.0,218.8 h2 M207,232.8 h3 M1001,232.8 h-3 M604.0,232.8 h-2 M604.0,232.8 h2 M207,246.7 h3 M1001,246.7 h-3 M604.0,246.7 h-2 M604.0,246.7 h2 M207,260.7 h3 M1001,260.7 h-3 M604.0,260.7 h-2 M604.0,260.7 h2 M207,274.7 h3 M1001,274.7 h-3 M604.0,274.7 h-2 M604.0,274.7 h2 M207,288.6 h3 M1001,288.6 h-3 M604.0,288.6 h-2 M604.0,288.6 h2 M207,302.6 h3 M1001,302.6 h-3 M604.0,302.6 h-2 M604.0,302.6 h2 M207,316.6 h3 M1001,316.6 h-3 M604.0,316.6 h-2 M604.0,316.6 h2 M207,330.6 h3 M1001,330.6 h-3 M604.0,330.6 h-2 M604.0,330.6 h2 M207,344.5 h3 M1001,344.5 h-3 M604.0,344.5 h-2 M604.0,344.5 h2 M207,358.5 h3 M1001,358.5 h-3 M604.0,358.5 h-2 M604.0,358.5 h2 M207,372.5 h3 M1001,372.5 h-3 M604.0,372.5 h-2 M604.0,372.5 h2 M207,386.5 h3 M1001,386.5 h-3 M604.0,386.5 h-2 M604.0,386.5 h2 M207,400.4 h3 M1001,400.4 h-3 M604.0,400.4 h-2 M604.0,400.4 h2 M207,414.4 h3 M1001,414.4 h-3 M604.0,414.4 h-2 M604.0,414.4 h2 M207,428.4 h3 M1001,428.4 h-3 M604.0,428.4 h-2 M604.0,428.4 h2 M207,442.4 h3 M1001,442.4 h-3 M604.0,442.4 h-2 M604.0,442.4 h2 M207,456.3 h3 M1001,456.3 h-3 M604.0,456.3 h-2 M604.0,456.3 h2 M207,470.3 h3 M1001,470.3 h-3 M604.0,470.3 h-2 M604.0,470.3 h2 M207,484.3 h3 M1001,484.3 h-3 M604.0,484.3 h-2 M604.0,484.3 h2 M207,498.3 h3 M1001,498.3 h-3 M604.0,498.3 h-2 M604.0,498.3 h2 M207,512.2 h3 M1001,512.2 h-3 M604.0,512.2 h-2 M604.0,512.2 h2 M207,526.2 h3 M1001,526.2 h-3 M604.0,526.2 h-2 M604.0,526.2 h2 M207,540.2 h3 M1001,540.2 h-3 M604.0,540.2 h-2 M604.0,540.2 h2 M207,554.2 h3 M1001,554.2 h-3 M604.0,554.2 h-2 M604.0,554.2 h2 M207,568.1 h3 M1001,568.1 h-3 M604.0,568.1 h-2 M604.0,568.1 h2 M207,582.1 h3 M1001,582.1 h-3 M604.0,582.1 h-2 M604.0,582.1 h2 M207,596.1 h3 M1001,596.1 h-3 M604.0,596.1 h-2 M604.0,596.1 h2 M207,610.1 h3 M1001,610.1 h-3 M604.0,610.1 h-2 M604.0,610.1 h2 M207,624.0 h3 M1001,624.0 h-3 M604.0,624.0 h-2 M604.0,624.0 h2 M207,638.0 h3 M1001,638.0 h-3 M604.0,638.0 h-2 M604.0,638.0 h2" stroke="#0b2a1d" stroke-width="1"/>
<filter id="fz" x="-2%" y="-10%" width="104%" height="120%"><feTurbulence type="turbulence" baseFrequency="0.9" numOctaves="1" seed="7" result="t"/><feDisplacementMap in="SourceGraphic" in2="t" scale="3.5" xChannelSelector="R" yChannelSelector="G"/></filter>
<g filter="url(#fz)">
<path d="M281.5,232.0 L281.7,239.0 L281.8,246.0 L282.0,253.0 L282.1,260.0 L282.2,267.0 L282.4,274.0 L282.5,281.0 L282.7,288.0 L282.8,295.0 L282.9,302.0 L283.1,309.0 L283.2,316.0 L283.3,323.0 L283.5,330.0 L283.6,337.0 L283.7,344.0 L283.8,351.0 L283.9,358.0 L284.0,365.0 L284.0,372.0 L284.1,379.0 L284.2,386.0 L284.3,393.0 L284.4,400.0 L284.5,407.0 L284.7,414.0 L284.8,421.0 L284.9,428.0 L285.1,435.0 L285.2,442.0 L285.3,449.0 L285.5,456.0 L285.6,463.0 L285.8,470.0 L285.9,477.0 L286.0,484.0 L286.2,491.0 L286.3,498.0 L286.5,505.0 M286.5,232.0 L286.3,239.0 L286.2,246.0 L286.0,253.0 L285.9,260.0 L285.8,267.0 L285.6,274.0 L285.5,281.0 L285.3,288.0 L285.2,295.0 L285.1,302.0 L284.9,309.0 L284.8,316.0 L284.7,323.0 L284.5,330.0 L284.4,337.0 L284.3,344.0 L284.2,351.0 L284.1,358.0 L284.0,365.0 L284.0,372.0 L283.9,379.0 L283.8,386.0 L283.7,393.0 L283.6,400.0 L283.5,407.0 L283.3,414.0 L283.2,421.0 L283.1,428.0 L282.9,435.0 L282.8,442.0 L282.7,449.0 L282.5,456.0 L282.4,463.0 L282.2,470.0 L282.1,477.0 L282.0,484.0 L281.8,491.0 L281.7,498.0 L281.5,505.0" stroke="#046804" stroke-width="3.4" fill="none"/>
<path d="M281.5,232.0 L281.7,239.0 L281.8,246.0 L282.0,253.0 L282.1,260.0 L282.2,267.0 L282.4,274.0 L282.5,281.0 L282.7,288.0 L282.8,295.0 L282.9,302.0 L283.1,309.0 L283.2,316.0 L283.3,323.0 L283.5,330.0 L283.6,337.0 L283.7,344.0 L283.8,351.0 L283.9,358.0 L284.0,365.0 L284.0,372.0 L284.1,379.0 L284.2,386.0 L284.3,393.0 L284.4,400.0 L284.5,407.0 L284.7,414.0 L284.8,421.0 L284.9,428.0 L285.1,435.0 L285.2,442.0 L285.3,449.0 L285.5,456.0 L285.6,463.0 L285.8,470.0 L285.9,477.0 L286.0,484.0 L286.2,491.0 L286.3,498.0 L286.5,505.0 M286.5,232.0 L286.3,239.0 L286.2,246.0 L286.0,253.0 L285.9,260.0 L285.8,267.0 L285.6,274.0 L285.5,281.0 L285.3,288.0 L285.2,295.0 L285.1,302.0 L284.9,309.0 L284.8,316.0 L284.7,323.0 L284.5,330.0 L284.4,337.0 L284.3,344.0 L284.2,351.0 L284.1,358.0 L284.0,365.0 L284.0,372.0 L283.9,379.0 L283.8,386.0 L283.7,393.0 L283.6,400.0 L283.5,407.0 L283.3,414.0 L283.2,421.0 L283.1,428.0 L282.9,435.0 L282.8,442.0 L282.7,449.0 L282.5,456.0 L282.4,463.0 L282.2,470.0 L282.1,477.0 L282.0,484.0 L281.8,491.0 L281.7,498.0 L281.5,505.0" stroke="#1818e0" stroke-width="2" fill="none"/>
<path d="M281.5,232.0 L281.7,239.0 L281.8,246.0 L282.0,253.0 L282.1,260.0 L282.2,267.0 L282.4,274.0 L282.5,281.0 L282.7,288.0 L282.8,295.0 L282.9,302.0 L283.1,309.0 L283.2,316.0 L283.3,323.0 L283.5,330.0 L283.6,337.0 L283.7,344.0 L283.8,351.0 L283.9,358.0 L284.0,365.0 L284.0,372.0 L284.1,379.0 L284.2,386.0 L284.3,393.0 L284.4,400.0 L284.5,407.0 L284.7,414.0 L284.8,421.0 L284.9,428.0 L285.1,435.0 L285.2,442.0 L285.3,449.0 L285.5,456.0 L285.6,463.0 L285.8,470.0 L285.9,477.0 L286.0,484.0 L286.2,491.0 L286.3,498.0 L286.5,505.0" stroke="#e02020" stroke-width="0.9" fill="none"/>
<path d="M333.0,232.0 L333.2,239.0 L333.5,246.0 L333.7,253.0 L334.0,260.0 L334.2,267.0 L334.4,274.0 L334.7,281.0 L334.9,288.0 L335.1,295.0 L335.3,302.0 L335.5,309.0 L335.7,316.0 L335.9,323.0 L336.1,330.0 L336.3,337.0 L336.5,344.0 L336.7,351.0 L336.8,358.0 L337.0,365.0 L337.0,372.0 L337.2,379.0 L337.3,386.0 L337.5,393.0 L337.7,400.0 L337.9,407.0 L338.1,414.0 L338.3,421.0 L338.5,428.0 L338.7,435.0 L338.9,442.0 L339.1,449.0 L339.3,456.0 L339.6,463.0 L339.8,470.0 L340.0,477.0 L340.3,484.0 L340.5,491.0 L340.8,498.0 L341.0,505.0 M341.0,232.0 L340.8,239.0 L340.5,246.0 L340.3,253.0 L340.0,260.0 L339.8,267.0 L339.6,274.0 L339.3,281.0 L339.1,288.0 L338.9,295.0 L338.7,302.0 L338.5,309.0 L338.3,316.0 L338.1,323.0 L337.9,330.0 L337.7,337.0 L337.5,344.0 L337.3,351.0 L337.2,358.0 L337.0,365.0 L337.0,372.0 L336.8,379.0 L336.7,386.0 L336.5,393.0 L336.3,400.0 L336.1,407.0 L335.9,414.0 L335.7,421.0 L335.5,428.0 L335.3,435.0 L335.1,442.0 L334.9,449.0 L334.7,456.0 L334.4,463.0 L334.2,470.0 L334.0,477.0 L333.7,484.0 L333.5,491.0 L333.2,498.0 L333.0,505.0" stroke="#046804" stroke-width="3.6" fill="none"/>
<path d="M385.5,232.0 L385.7,239.0 L386.0,246.0 L386.2,253.0 L386.5,260.0 L386.7,267.0 L386.9,274.0 L387.2,281.0 L387.4,288.0 L387.6,295.0 L387.8,302.0 L388.0,309.0 L388.2,316.0 L388.4,323.0 L388.6,330.0 L388.8,337.0 L389.0,344.0 L389.2,351.0 L389.3,358.0 L389.5,365.0 L389.5,372.0 L389.7,379.0 L389.8,386.0 L390.0,393.0 L390.2,400.0 L390.4,407.0 L390.6,414.0 L390.8,421.0 L391.0,428.0 L391.2,435.0 L391.4,442.0 L391.6,449.0 L391.8,456.0 L392.1,463.0 L392.3,470.0 L392.5,477.0 L392.8,484.0 L393.0,491.0 L393.3,498.0 L393.5,505.0 M393.5,232.0 L393.3,239.0 L393.0,246.0 L392.8,253.0 L392.5,260.0 L392.3,267.0 L392.1,274.0 L391.8,281.0 L391.6,288.0 L391.4,295.0 L391.2,302.0 L391.0,309.0 L390.8,316.0 L390.6,323.0 L390.4,330.0 L390.2,337.0 L390.0,344.0 L389.8,351.0 L389.7,358.0 L389.5,365.0 L389.5,372.0 L389.3,379.0 L389.2,386.0 L389.0,393.0 L388.8,400.0 L388.6,407.0 L388.4,414.0 L388.2,421.0 L388.0,428.0 L387.8,435.0 L387.6,442.0 L387.4,449.0 L387.2,456.0 L386.9,463.0 L386.7,470.0 L386.5,477.0 L386.2,484.0 L386.0,491.0 L385.7,498.0 L385.5,505.0" stroke="#046804" stroke-width="3.6" fill="none"/>
<path d="M385.5,232.0 L385.7,239.0 L386.0,246.0 L386.2,253.0 L386.5,260.0 L386.7,267.0 L386.9,274.0 L387.2,281.0 L387.4,288.0 L387.6,295.0 L387.8,302.0 L388.0,309.0 L388.2,316.0 L388.4,323.0 L388.6,330.0 L388.8,337.0 L389.0,344.0 L389.2,351.0 L389.3,358.0 L389.5,365.0 L389.5,372.0 L389.7,379.0 L389.8,386.0 L390.0,393.0 L390.2,400.0 L390.4,407.0 L390.6,414.0 L390.8,421.0 L391.0,428.0 L391.2,435.0 L391.4,442.0 L391.6,449.0 L391.8,456.0 L392.1,463.0 L392.3,470.0 L392.5,477.0 L392.8,484.0 L393.0,491.0 L393.3,498.0 L393.5,505.0" stroke="#1414a8" stroke-width="1.0" fill="none"/>
<path d="M438.5,232.0 L438.7,239.0 L439.0,246.0 L439.2,253.0 L439.5,260.0 L439.7,267.0 L439.9,274.0 L440.2,281.0 L440.4,288.0 L440.6,295.0 L440.8,302.0 L441.0,309.0 L441.2,316.0 L441.4,323.0 L441.6,330.0 L441.8,337.0 L442.0,344.0 L442.2,351.0 L442.3,358.0 L442.5,365.0 L442.5,372.0 L442.7,379.0 L442.8,386.0 L443.0,393.0 L443.2,400.0 L443.4,407.0 L443.6,414.0 L443.8,421.0 L444.0,428.0 L444.2,435.0 L444.4,442.0 L444.6,449.0 L444.8,456.0 L445.1,463.0 L445.3,470.0 L445.5,477.0 L445.8,484.0 L446.0,491.0 L446.3,498.0 L446.5,505.0 M446.5,232.0 L446.3,239.0 L446.0,246.0 L445.8,253.0 L445.5,260.0 L445.3,267.0 L445.1,274.0 L444.8,281.0 L444.6,288.0 L444.4,295.0 L444.2,302.0 L444.0,309.0 L443.8,316.0 L443.6,323.0 L443.4,330.0 L443.2,337.0 L443.0,344.0 L442.8,351.0 L442.7,358.0 L442.5,365.0 L442.5,372.0 L442.3,379.0 L442.2,386.0 L442.0,393.0 L441.8,400.0 L441.6,407.0 L441.4,414.0 L441.2,421.0 L441.0,428.0 L440.8,435.0 L440.6,442.0 L440.4,449.0 L440.2,456.0 L439.9,463.0 L439.7,470.0 L439.5,477.0 L439.2,484.0 L439.0,491.0 L438.7,498.0 L438.5,505.0" stroke="#046804" stroke-width="3.6" fill="none"/>
<path d="M438.5,232.0 L438.7,239.0 L439.0,246.0 L439.2,253.0 L439.5,260.0 L439.7,267.0 L439.9,274.0 L440.2,281.0 L440.4,288.0 L440.6,295.0 L440.8,302.0 L441.0,309.0 L441.2,316.0 L441.4,323.0 L441.6,330.0 L441.8,337.0 L442.0,344.0 L442.2,351.0 L442.3,358.0 L442.5,365.0 L442.5,372.0 L442.7,379.0 L442.8,386.0 L443.0,393.0 L443.2,400.0 L443.4,407.0 L443.6,414.0 L443.8,421.0 L444.0,428.0 L444.2,435.0 L444.4,442.0 L444.6,449.0 L444.8,456.0 L445.1,463.0 L445.3,470.0 L445.5,477.0 L445.8,484.0 L446.0,491.0 L446.3,498.0 L446.5,505.0" stroke="#1414a8" stroke-width="1.0" fill="none"/>
<path d="M491.5,232.0 L491.7,239.0 L492.0,246.0 L492.2,253.0 L492.5,260.0 L492.7,267.0 L492.9,274.0 L493.2,281.0 L493.4,288.0 L493.6,295.0 L493.8,302.0 L494.0,309.0 L494.2,316.0 L494.4,323.0 L494.6,330.0 L494.8,337.0 L495.0,344.0 L495.2,351.0 L495.3,358.0 L495.5,365.0 L495.5,372.0 L495.7,379.0 L495.8,386.0 L496.0,393.0 L496.2,400.0 L496.4,407.0 L496.6,414.0 L496.8,421.0 L497.0,428.0 L497.2,435.0 L497.4,442.0 L497.6,449.0 L497.8,456.0 L498.1,463.0 L498.3,470.0 L498.5,477.0 L498.8,484.0 L499.0,491.0 L499.3,498.0 L499.5,505.0 M499.5,232.0 L499.3,239.0 L499.0,246.0 L498.8,253.0 L498.5,260.0 L498.3,267.0 L498.1,274.0 L497.8,281.0 L497.6,288.0 L497.4,295.0 L497.2,302.0 L497.0,309.0 L496.8,316.0 L496.6,323.0 L496.4,330.0 L496.2,337.0 L496.0,344.0 L495.8,351.0 L495.7,358.0 L495.5,365.0 L495.5,372.0 L495.3,379.0 L495.2,386.0 L495.0,393.0 L494.8,400.0 L494.6,407.0 L494.4,414.0 L494.2,421.0 L494.0,428.0 L493.8,435.0 L493.6,442.0 L493.4,449.0 L493.2,456.0 L492.9,463.0 L492.7,470.0 L492.5,477.0 L492.2,484.0 L492.0,491.0 L491.7,498.0 L491.5,505.0" stroke="#046804" stroke-width="3.6" fill="none"/>
<path d="M544.5,232.0 L544.7,239.0 L545.0,246.0 L545.2,253.0 L545.5,260.0 L545.7,267.0 L545.9,274.0 L546.2,281.0 L546.4,288.0 L546.6,295.0 L546.8,302.0 L547.0,309.0 L547.2,316.0 L547.4,323.0 L547.6,330.0 L547.8,337.0 L548.0,344.0 L548.2,351.0 L548.3,358.0 L548.5,365.0 L548.5,372.0 L548.7,379.0 L548.8,386.0 L549.0,393.0 L549.2,400.0 L549.4,407.0 L549.6,414.0 L549.8,421.0 L550.0,428.0 L550.2,435.0 L550.4,442.0 L550.6,449.0 L550.8,456.0 L551.1,463.0 L551.3,470.0 L551.5,477.0 L551.8,484.0 L552.0,491.0 L552.3,498.0 L552.5,505.0 M552.5,232.0 L552.3,239.0 L552.0,246.0 L551.8,253.0 L551.5,260.0 L551.3,267.0 L551.1,274.0 L550.8,281.0 L550.6,288.0 L550.4,295.0 L550.2,302.0 L550.0,309.0 L549.8,316.0 L549.6,323.0 L549.4,330.0 L549.2,337.0 L549.0,344.0 L548.8,351.0 L548.7,358.0 L548.5,365.0 L548.5,372.0 L548.3,379.0 L548.2,386.0 L548.0,393.0 L547.8,400.0 L547.6,407.0 L547.4,414.0 L547.2,421.0 L547.0,428.0 L546.8,435.0 L546.6,442.0 L546.4,449.0 L546.2,456.0 L545.9,463.0 L545.7,470.0 L545.5,477.0 L545.2,484.0 L545.0,491.0 L544.7,498.0 L544.5,505.0" stroke="#046804" stroke-width="3.6" fill="none"/>
<path d="M599.5,232.0 L599.7,239.0 L599.8,246.0 L600.0,253.0 L600.1,260.0 L600.2,267.0 L600.4,274.0 L600.5,281.0 L600.7,288.0 L600.8,295.0 L600.9,302.0 L601.1,309.0 L601.2,316.0 L601.3,323.0 L601.5,330.0 L601.6,337.0 L601.7,344.0 L601.8,351.0 L601.9,358.0 L602.0,365.0 L602.0,372.0 L602.1,379.0 L602.2,386.0 L602.3,393.0 L602.4,400.0 L602.5,407.0 L602.7,414.0 L602.8,421.0 L602.9,428.0 L603.1,435.0 L603.2,442.0 L603.3,449.0 L603.5,456.0 L603.6,463.0 L603.8,470.0 L603.9,477.0 L604.0,484.0 L604.2,491.0 L604.3,498.0 L604.5,505.0 M604.5,232.0 L604.3,239.0 L604.2,246.0 L604.0,253.0 L603.9,260.0 L603.8,267.0 L603.6,274.0 L603.5,281.0 L603.3,288.0 L603.2,295.0 L603.1,302.0 L602.9,309.0 L602.8,316.0 L602.7,323.0 L602.5,330.0 L602.4,337.0 L602.3,344.0 L602.2,351.0 L602.1,358.0 L602.0,365.0 L602.0,372.0 L601.9,379.0 L601.8,386.0 L601.7,393.0 L601.6,400.0 L601.5,407.0 L601.3,414.0 L601.2,421.0 L601.1,428.0 L600.9,435.0 L600.8,442.0 L600.7,449.0 L600.5,456.0 L600.4,463.0 L600.2,470.0 L600.1,477.0 L600.0,484.0 L599.8,491.0 L599.7,498.0 L599.5,505.0" stroke="#046804" stroke-width="3.4" fill="none"/>
<path d="M599.5,232.0 L599.7,239.0 L599.8,246.0 L600.0,253.0 L600.1,260.0 L600.2,267.0 L600.4,274.0 L600.5,281.0 L600.7,288.0 L600.8,295.0 L600.9,302.0 L601.1,309.0 L601.2,316.0 L601.3,323.0 L601.5,330.0 L601.6,337.0 L601.7,344.0 L601.8,351.0 L601.9,358.0 L602.0,365.0 L602.0,372.0 L602.1,379.0 L602.2,386.0 L602.3,393.0 L602.4,400.0 L602.5,407.0 L602.7,414.0 L602.8,421.0 L602.9,428.0 L603.1,435.0 L603.2,442.0 L603.3,449.0 L603.5,456.0 L603.6,463.0 L603.8,470.0 L603.9,477.0 L604.0,484.0 L604.2,491.0 L604.3,498.0 L604.5,505.0 M604.5,232.0 L604.3,239.0 L604.2,246.0 L604.0,253.0 L603.9,260.0 L603.8,267.0 L603.6,274.0 L603.5,281.0 L603.3,288.0 L603.2,295.0 L603.1,302.0 L602.9,309.0 L602.8,316.0 L602.7,323.0 L602.5,330.0 L602.4,337.0 L602.3,344.0 L602.2,351.0 L602.1,358.0 L602.0,365.0 L602.0,372.0 L601.9,379.0 L601.8,386.0 L601.7,393.0 L601.6,400.0 L601.5,407.0 L601.3,414.0 L601.2,421.0 L601.1,428.0 L600.9,435.0 L600.8,442.0 L600.7,449.0 L600.5,456.0 L600.4,463.0 L600.2,470.0 L600.1,477.0 L600.0,484.0 L599.8,491.0 L599.7,498.0 L599.5,505.0" stroke="#1818e0" stroke-width="2" fill="none"/>
<path d="M599.5,232.0 L599.7,239.0 L599.8,246.0 L600.0,253.0 L600.1,260.0 L600.2,267.0 L600.4,274.0 L600.5,281.0 L600.7,288.0 L600.8,295.0 L600.9,302.0 L601.1,309.0 L601.2,316.0 L601.3,323.0 L601.5,330.0 L601.6,337.0 L601.7,344.0 L601.8,351.0 L601.9,358.0 L602.0,365.0 L602.0,372.0 L602.1,379.0 L602.2,386.0 L602.3,393.0 L602.4,400.0 L602.5,407.0 L602.7,414.0 L602.8,421.0 L602.9,428.0 L603.1,435.0 L603.2,442.0 L603.3,449.0 L603.5,456.0 L603.6,463.0 L603.8,470.0 L603.9,477.0 L604.0,484.0 L604.2,491.0 L604.3,498.0 L604.5,505.0" stroke="#e02020" stroke-width="0.9" fill="none"/>
<path d="M651.5,232.0 L651.7,239.0 L651.8,246.0 L652.0,253.0 L652.1,260.0 L652.2,267.0 L652.4,274.0 L652.5,281.0 L652.7,288.0 L652.8,295.0 L652.9,302.0 L653.1,309.0 L653.2,316.0 L653.3,323.0 L653.5,330.0 L653.6,337.0 L653.7,344.0 L653.8,351.0 L653.9,358.0 L654.0,365.0 L654.0,372.0 L654.1,379.0 L654.2,386.0 L654.3,393.0 L654.4,400.0 L654.5,407.0 L654.7,414.0 L654.8,421.0 L654.9,428.0 L655.1,435.0 L655.2,442.0 L655.3,449.0 L655.5,456.0 L655.6,463.0 L655.8,470.0 L655.9,477.0 L656.0,484.0 L656.2,491.0 L656.3,498.0 L656.5,505.0 M656.5,232.0 L656.3,239.0 L656.2,246.0 L656.0,253.0 L655.9,260.0 L655.8,267.0 L655.6,274.0 L655.5,281.0 L655.3,288.0 L655.2,295.0 L655.1,302.0 L654.9,309.0 L654.8,316.0 L654.7,323.0 L654.5,330.0 L654.4,337.0 L654.3,344.0 L654.2,351.0 L654.1,358.0 L654.0,365.0 L654.0,372.0 L653.9,379.0 L653.8,386.0 L653.7,393.0 L653.6,400.0 L653.5,407.0 L653.3,414.0 L653.2,421.0 L653.1,428.0 L652.9,435.0 L652.8,442.0 L652.7,449.0 L652.5,456.0 L652.4,463.0 L652.2,470.0 L652.1,477.0 L652.0,484.0 L651.8,491.0 L651.7,498.0 L651.5,505.0" stroke="#046804" stroke-width="3.4" fill="none"/>
<path d="M651.5,232.0 L651.7,239.0 L651.8,246.0 L652.0,253.0 L652.1,260.0 L652.2,267.0 L652.4,274.0 L652.5,281.0 L652.7,288.0 L652.8,295.0 L652.9,302.0 L653.1,309.0 L653.2,316.0 L653.3,323.0 L653.5,330.0 L653.6,337.0 L653.7,344.0 L653.8,351.0 L653.9,358.0 L654.0,365.0 L654.0,372.0 L654.1,379.0 L654.2,386.0 L654.3,393.0 L654.4,400.0 L654.5,407.0 L654.7,414.0 L654.8,421.0 L654.9,428.0 L655.1,435.0 L655.2,442.0 L655.3,449.0 L655.5,456.0 L655.6,463.0 L655.8,470.0 L655.9,477.0 L656.0,484.0 L656.2,491.0 L656.3,498.0 L656.5,505.0 M656.5,232.0 L656.3,239.0 L656.2,246.0 L656.0,253.0 L655.9,260.0 L655.8,267.0 L655.6,274.0 L655.5,281.0 L655.3,288.0 L655.2,295.0 L655.1,302.0 L654.9,309.0 L654.8,316.0 L654.7,323.0 L654.5,330.0 L654.4,337.0 L654.3,344.0 L654.2,351.0 L654.1,358.0 L654.0,365.0 L654.0,372.0 L653.9,379.0 L653.8,386.0 L653.7,393.0 L653.6,400.0 L653.5,407.0 L653.3,414.0 L653.2,421.0 L653.1,428.0 L652.9,435.0 L652.8,442.0 L652.7,449.0 L652.5,456.0 L652.4,463.0 L652.2,470.0 L652.1,477.0 L652.0,484.0 L651.8,491.0 L651.7,498.0 L651.5,505.0" stroke="#1818e0" stroke-width="2" fill="none"/>
<path d="M651.5,232.0 L651.7,239.0 L651.8,246.0 L652.0,253.0 L652.1,260.0 L652.2,267.0 L652.4,274.0 L652.5,281.0 L652.7,288.0 L652.8,295.0 L652.9,302.0 L653.1,309.0 L653.2,316.0 L653.3,323.0 L653.5,330.0 L653.6,337.0 L653.7,344.0 L653.8,351.0 L653.9,358.0 L654.0,365.0 L654.0,372.0 L654.1,379.0 L654.2,386.0 L654.3,393.0 L654.4,400.0 L654.5,407.0 L654.7,414.0 L654.8,421.0 L654.9,428.0 L655.1,435.0 L655.2,442.0 L655.3,449.0 L655.5,456.0 L655.6,463.0 L655.8,470.0 L655.9,477.0 L656.0,484.0 L656.2,491.0 L656.3,498.0 L656.5,505.0" stroke="#e02020" stroke-width="0.9" fill="none"/>
<path d="M703.0,232.0 L703.2,239.0 L703.5,246.0 L703.7,253.0 L704.0,260.0 L704.2,267.0 L704.4,274.0 L704.7,281.0 L704.9,288.0 L705.1,295.0 L705.3,302.0 L705.5,309.0 L705.7,316.0 L705.9,323.0 L706.1,330.0 L706.3,337.0 L706.5,344.0 L706.7,351.0 L706.8,358.0 L707.0,365.0 L707.0,372.0 L707.2,379.0 L707.3,386.0 L707.5,393.0 L707.7,400.0 L707.9,407.0 L708.1,414.0 L708.3,421.0 L708.5,428.0 L708.7,435.0 L708.9,442.0 L709.1,449.0 L709.3,456.0 L709.6,463.0 L709.8,470.0 L710.0,477.0 L710.3,484.0 L710.5,491.0 L710.8,498.0 L711.0,505.0 M711.0,232.0 L710.8,239.0 L710.5,246.0 L710.3,253.0 L710.0,260.0 L709.8,267.0 L709.6,274.0 L709.3,281.0 L709.1,288.0 L708.9,295.0 L708.7,302.0 L708.5,309.0 L708.3,316.0 L708.1,323.0 L707.9,330.0 L707.7,337.0 L707.5,344.0 L707.3,351.0 L707.2,358.0 L707.0,365.0 L707.0,372.0 L706.8,379.0 L706.7,386.0 L706.5,393.0 L706.3,400.0 L706.1,407.0 L705.9,414.0 L705.7,421.0 L705.5,428.0 L705.3,435.0 L705.1,442.0 L704.9,449.0 L704.7,456.0 L704.4,463.0 L704.2,470.0 L704.0,477.0 L703.7,484.0 L703.5,491.0 L703.2,498.0 L703.0,505.0" stroke="#046804" stroke-width="3.6" fill="none"/>
<path d="M756.0,232.0 L756.2,239.0 L756.5,246.0 L756.7,253.0 L757.0,260.0 L757.2,267.0 L757.4,274.0 L757.7,281.0 L757.9,288.0 L758.1,295.0 L758.3,302.0 L758.5,309.0 L758.7,316.0 L758.9,323.0 L759.1,330.0 L759.3,337.0 L759.5,344.0 L759.7,351.0 L759.8,358.0 L760.0,365.0 L760.0,372.0 L760.2,379.0 L760.3,386.0 L760.5,393.0 L760.7,400.0 L760.9,407.0 L761.1,414.0 L761.3,421.0 L761.5,428.0 L761.7,435.0 L761.9,442.0 L762.1,449.0 L762.3,456.0 L762.6,463.0 L762.8,470.0 L763.0,477.0 L763.3,484.0 L763.5,491.0 L763.8,498.0 L764.0,505.0 M764.0,232.0 L763.8,239.0 L763.5,246.0 L763.3,253.0 L763.0,260.0 L762.8,267.0 L762.6,274.0 L762.3,281.0 L762.1,288.0 L761.9,295.0 L761.7,302.0 L761.5,309.0 L761.3,316.0 L761.1,323.0 L760.9,330.0 L760.7,337.0 L760.5,344.0 L760.3,351.0 L760.2,358.0 L760.0,365.0 L760.0,372.0 L759.8,379.0 L759.7,386.0 L759.5,393.0 L759.3,400.0 L759.1,407.0 L758.9,414.0 L758.7,421.0 L758.5,428.0 L758.3,435.0 L758.1,442.0 L757.9,449.0 L757.7,456.0 L757.4,463.0 L757.2,470.0 L757.0,477.0 L756.7,484.0 L756.5,491.0 L756.2,498.0 L756.0,505.0" stroke="#046804" stroke-width="3.6" fill="none"/>
<path d="M756.0,232.0 L756.2,239.0 L756.5,246.0 L756.7,253.0 L757.0,260.0 L757.2,267.0 L757.4,274.0 L757.7,281.0 L757.9,288.0 L758.1,295.0 L758.3,302.0 L758.5,309.0 L758.7,316.0 L758.9,323.0 L759.1,330.0 L759.3,337.0 L759.5,344.0 L759.7,351.0 L759.8,358.0 L760.0,365.0 L760.0,372.0 L760.2,379.0 L760.3,386.0 L760.5,393.0 L760.7,400.0 L760.9,407.0 L761.1,414.0 L761.3,421.0 L761.5,428.0 L761.7,435.0 L761.9,442.0 L762.1,449.0 L762.3,456.0 L762.6,463.0 L762.8,470.0 L763.0,477.0 L763.3,484.0 L763.5,491.0 L763.8,498.0 L764.0,505.0" stroke="#1414a8" stroke-width="1.0" fill="none"/>
<path d="M809.0,232.0 L809.2,239.0 L809.5,246.0 L809.7,253.0 L810.0,260.0 L810.2,267.0 L810.4,274.0 L810.7,281.0 L810.9,288.0 L811.1,295.0 L811.3,302.0 L811.5,309.0 L811.7,316.0 L811.9,323.0 L812.1,330.0 L812.3,337.0 L812.5,344.0 L812.7,351.0 L812.8,358.0 L813.0,365.0 L813.0,372.0 L813.2,379.0 L813.3,386.0 L813.5,393.0 L813.7,400.0 L813.9,407.0 L814.1,414.0 L814.3,421.0 L814.5,428.0 L814.7,435.0 L814.9,442.0 L815.1,449.0 L815.3,456.0 L815.6,463.0 L815.8,470.0 L816.0,477.0 L816.3,484.0 L816.5,491.0 L816.8,498.0 L817.0,505.0 M817.0,232.0 L816.8,239.0 L816.5,246.0 L816.3,253.0 L816.0,260.0 L815.8,267.0 L815.6,274.0 L815.3,281.0 L815.1,288.0 L814.9,295.0 L814.7,302.0 L814.5,309.0 L814.3,316.0 L814.1,323.0 L813.9,330.0 L813.7,337.0 L813.5,344.0 L813.3,351.0 L813.2,358.0 L813.0,365.0 L813.0,372.0 L812.8,379.0 L812.7,386.0 L812.5,393.0 L812.3,400.0 L812.1,407.0 L811.9,414.0 L811.7,421.0 L811.5,428.0 L811.3,435.0 L811.1,442.0 L810.9,449.0 L810.7,456.0 L810.4,463.0 L810.2,470.0 L810.0,477.0 L809.7,484.0 L809.5,491.0 L809.2,498.0 L809.0,505.0" stroke="#046804" stroke-width="3.6" fill="none"/>
<path d="M862.0,232.0 L862.2,239.0 L862.5,246.0 L862.7,253.0 L863.0,260.0 L863.2,267.0 L863.4,274.0 L863.7,281.0 L863.9,288.0 L864.1,295.0 L864.3,302.0 L864.5,309.0 L864.7,316.0 L864.9,323.0 L865.1,330.0 L865.3,337.0 L865.5,344.0 L865.7,351.0 L865.8,358.0 L866.0,365.0 L866.0,372.0 L866.2,379.0 L866.3,386.0 L866.5,393.0 L866.7,400.0 L866.9,407.0 L867.1,414.0 L867.3,421.0 L867.5,428.0 L867.7,435.0 L867.9,442.0 L868.1,449.0 L868.3,456.0 L868.6,463.0 L868.8,470.0 L869.0,477.0 L869.3,484.0 L869.5,491.0 L869.8,498.0 L870.0,505.0 M870.0,232.0 L869.8,239.0 L869.5,246.0 L869.3,253.0 L869.0,260.0 L868.8,267.0 L868.6,274.0 L868.3,281.0 L868.1,288.0 L867.9,295.0 L867.7,302.0 L867.5,309.0 L867.3,316.0 L867.1,323.0 L866.9,330.0 L866.7,337.0 L866.5,344.0 L866.3,351.0 L866.2,358.0 L866.0,365.0 L866.0,372.0 L865.8,379.0 L865.7,386.0 L865.5,393.0 L865.3,400.0 L865.1,407.0 L864.9,414.0 L864.7,421.0 L864.5,428.0 L864.3,435.0 L864.1,442.0 L863.9,449.0 L863.7,456.0 L863.4,463.0 L863.2,470.0 L863.0,477.0 L862.7,484.0 L862.5,491.0 L862.2,498.0 L862.0,505.0" stroke="#046804" stroke-width="3.6" fill="none"/>
<path d="M917.5,232.0 L917.7,239.0 L917.8,246.0 L918.0,253.0 L918.1,260.0 L918.2,267.0 L918.4,274.0 L918.5,281.0 L918.7,288.0 L918.8,295.0 L918.9,302.0 L919.1,309.0 L919.2,316.0 L919.3,323.0 L919.5,330.0 L919.6,337.0 L919.7,344.0 L919.8,351.0 L919.9,358.0 L920.0,365.0 L920.0,372.0 L920.1,379.0 L920.2,386.0 L920.3,393.0 L920.4,400.0 L920.5,407.0 L920.7,414.0 L920.8,421.0 L920.9,428.0 L921.1,435.0 L921.2,442.0 L921.3,449.0 L921.5,456.0 L921.6,463.0 L921.8,470.0 L921.9,477.0 L922.0,484.0 L922.2,491.0 L922.3,498.0 L922.5,505.0 M922.5,232.0 L922.3,239.0 L922.2,246.0 L922.0,253.0 L921.9,260.0 L921.8,267.0 L921.6,274.0 L921.5,281.0 L921.3,288.0 L921.2,295.0 L921.1,302.0 L920.9,309.0 L920.8,316.0 L920.7,323.0 L920.5,330.0 L920.4,337.0 L920.3,344.0 L920.2,351.0 L920.1,358.0 L920.0,365.0 L920.0,372.0 L919.9,379.0 L919.8,386.0 L919.7,393.0 L919.6,400.0 L919.5,407.0 L919.3,414.0 L919.2,421.0 L919.1,428.0 L918.9,435.0 L918.8,442.0 L918.7,449.0 L918.5,456.0 L918.4,463.0 L918.2,470.0 L918.1,477.0 L918.0,484.0 L917.8,491.0 L917.7,498.0 L917.5,505.0" stroke="#046804" stroke-width="3.4" fill="none"/>
<path d="M917.5,232.0 L917.7,239.0 L917.8,246.0 L918.0,253.0 L918.1,260.0 L918.2,267.0 L918.4,274.0 L918.5,281.0 L918.7,288.0 L918.8,295.0 L918.9,302.0 L919.1,309.0 L919.2,316.0 L919.3,323.0 L919.5,330.0 L919.6,337.0 L919.7,344.0 L919.8,351.0 L919.9,358.0 L920.0,365.0 L920.0,372.0 L920.1,379.0 L920.2,386.0 L920.3,393.0 L920.4,400.0 L920.5,407.0 L920.7,414.0 L920.8,421.0 L920.9,428.0 L921.1,435.0 L921.2,442.0 L921.3,449.0 L921.5,456.0 L921.6,463.0 L921.8,470.0 L921.9,477.0 L922.0,484.0 L922.2,491.0 L922.3,498.0 L922.5,505.0 M922.5,232.0 L922.3,239.0 L922.2,246.0 L922.0,253.0 L921.9,260.0 L921.8,267.0 L921.6,274.0 L921.5,281.0 L921.3,288.0 L921.2,295.0 L921.1,302.0 L920.9,309.0 L920.8,316.0 L920.7,323.0 L920.5,330.0 L920.4,337.0 L920.3,344.0 L920.2,351.0 L920.1,358.0 L920.0,365.0 L920.0,372.0 L919.9,379.0 L919.8,386.0 L919.7,393.0 L919.6,400.0 L919.5,407.0 L919.3,414.0 L919.2,421.0 L919.1,428.0 L918.9,435.0 L918.8,442.0 L918.7,449.0 L918.5,456.0 L918.4,463.0 L918.2,470.0 L918.1,477.0 L918.0,484.0 L917.8,491.0 L917.7,498.0 L917.5,505.0" stroke="#1818e0" stroke-width="2" fill="none"/>
<path d="M917.5,232.0 L917.7,239.0 L917.8,246.0 L918.0,253.0 L918.1,260.0 L918.2,267.0 L918.4,274.0 L918.5,281.0 L918.7,288.0 L918.8,295.0 L918.9,302.0 L919.1,309.0 L919.2,316.0 L919.3,323.0 L919.5,330.0 L919.6,337.0 L919.7,344.0 L919.8,351.0 L919.9,358.0 L920.0,365.0 L920.0,372.0 L920.1,379.0 L920.2,386.0 L920.3,393.0 L920.4,400.0 L920.5,407.0 L920.7,414.0 L920.8,421.0 L920.9,428.0 L921.1,435.0 L921.2,442.0 L921.3,449.0 L921.5,456.0 L921.6,463.0 L921.8,470.0 L921.9,477.0 L922.0,484.0 L922.2,491.0 L922.3,498.0 L922.5,505.0" stroke="#e02020" stroke-width="0.9" fill="none"/>
<path d="M967.0,232.0 L967.2,239.0 L967.5,246.0 L967.7,253.0 L968.0,260.0 L968.2,267.0 L968.4,274.0 L968.7,281.0 L968.9,288.0 L969.1,295.0 L969.3,302.0 L969.5,309.0 L969.7,316.0 L969.9,323.0 L970.1,330.0 L970.3,337.0 L970.5,344.0 L970.7,351.0 L970.8,358.0 L971.0,365.0 L971.0,372.0 L971.2,379.0 L971.3,386.0 L971.5,393.0 L971.7,400.0 L971.9,407.0 L972.1,414.0 L972.3,421.0 L972.5,428.0 L972.7,435.0 L972.9,442.0 L973.1,449.0 L973.3,456.0 L973.6,463.0 L973.8,470.0 L974.0,477.0 L974.3,484.0 L974.5,491.0 L974.8,498.0 L975.0,505.0 M975.0,232.0 L974.8,239.0 L974.5,246.0 L974.3,253.0 L974.0,260.0 L973.8,267.0 L973.6,274.0 L973.3,281.0 L973.1,288.0 L972.9,295.0 L972.7,302.0 L972.5,309.0 L972.3,316.0 L972.1,323.0 L971.9,330.0 L971.7,337.0 L971.5,344.0 L971.3,351.0 L971.2,358.0 L971.0,365.0 L971.0,372.0 L970.8,379.0 L970.7,386.0 L970.5,393.0 L970.3,400.0 L970.1,407.0 L969.9,414.0 L969.7,421.0 L969.5,428.0 L969.3,435.0 L969.1,442.0 L968.9,449.0 L968.7,456.0 L968.4,463.0 L968.2,470.0 L968.0,477.0 L967.7,484.0 L967.5,491.0 L967.2,498.0 L967.0,505.0" stroke="#046804" stroke-width="3.6" fill="none"/>
<polygon fill="#046804" points="207,212.5 209,212.4 211,212.3 213,212.1 215,212.0 217,211.9 219,211.8 221,211.7 223,211.6 225,211.4 227,211.3 229,211.2 231,211.0 233,210.9 235,210.8 237,210.6 239,210.5 241,210.4 243,210.2 245,210.1 247,210.0 249,209.8 251,209.7 253,209.6 255,209.7 257,210.0 259,210.4 261,210.8 263,211.1 265,211.5 267,211.9 269,212.2 271,212.6 273,213.0 275,214.1 276,216.5 277,221.7 278,230.0 279,241.4 280,255.2 281,269.7 282,283.3 283,293.3 283,295.1 282,287.0 281,276.2 280,265.0 279,255.3 278,248.2 277,243.3 276,240.1 275,238.5 273,238.0 271,238.0 269,237.9 267,237.9 265,237.9 263,237.9 261,238.0 259,238.0 257,238.1 255,238.1 253,238.2 251,238.2 249,238.3 247,238.3 245,238.4 243,238.4 241,238.5 239,238.5 237,238.6 235,238.6 233,238.7 231,238.7 229,238.8 227,238.8 225,238.9 223,239.5 221,240.5 219,241.5 217,242.6 215,243.6 213,244.3 211,244.1 209,243.4 207,242.9"/>
<polygon fill="#1010e8" points="207,217.0 209,217.0 211,217.0 213,217.0 215,216.8 217,216.5 219,216.3 221,216.0 223,215.7 225,215.6 227,215.4 229,215.3 231,215.2 233,215.1 235,214.9 237,214.8 239,214.7 241,214.6 243,214.5 245,214.3 247,214.2 249,214.1 251,214.0 253,213.9 255,214.0 257,214.2 259,214.6 261,214.9 263,215.2 265,215.5 267,215.8 269,216.1 271,216.4 273,216.7 275,217.7 276,220.0 277,224.9 278,232.7 279,243.5 280,256.6 281,270.7 282,283.9 283,293.6 283,294.8 282,286.4 281,275.2 280,263.4 279,253.1 278,245.3 277,239.8 276,236.3 275,234.6 273,234.0 271,233.9 269,233.8 267,233.8 265,233.7 263,233.6 261,233.6 259,233.6 257,233.6 255,233.6 253,233.6 251,233.7 249,233.7 247,233.8 245,233.9 243,233.9 241,234.0 239,234.0 237,234.1 235,234.2 233,234.2 231,234.3 229,234.4 227,234.4 225,234.5 223,235.0 221,235.9 219,236.8 217,237.7 215,238.6 213,239.2 211,239.0 209,238.5 207,238.1"/>
<polygon fill="#f01010" points="207,218.9 209,218.9 211,218.9 213,218.9 215,218.7 217,218.4 219,218.0 221,217.7 223,217.4 225,217.2 227,217.1 229,217.0 231,216.8 233,216.7 235,216.6 237,216.5 239,216.4 241,216.3 243,216.2 245,216.0 247,215.9 249,215.8 251,215.7 253,215.6 255,215.7 257,215.9 259,216.2 261,216.5 263,216.8 265,217.0 267,217.3 269,217.6 271,217.9 273,218.2 275,219.2 276,221.5 277,226.2 278,233.8 279,244.3 280,257.2 281,271.1 282,284.1 283,293.7 283,294.7 282,286.2 281,274.8 280,262.8 279,252.3 278,244.2 277,238.5 276,234.9 275,233.1 273,232.5 271,232.4 269,232.3 267,232.2 265,232.1 263,232.0 261,232.0 259,231.9 257,231.9 255,231.9 253,231.9 251,231.9 249,232.0 247,232.1 245,232.2 243,232.2 241,232.3 239,232.4 237,232.4 235,232.5 233,232.6 231,232.6 229,232.7 227,232.8 225,232.9 223,233.3 221,234.1 219,235.0 217,235.8 215,236.7 213,237.2 211,237.1 209,236.6 207,236.2"/>
<polygon fill="#ffb000" points="207,221.3 209,221.4 211,221.5 213,221.5 215,221.2 217,220.8 219,220.4 221,220.0 223,219.7 225,219.4 227,219.3 229,219.2 231,219.1 233,219.0 235,218.8 237,218.7 239,218.6 241,218.5 243,218.4 245,218.3 247,218.2 249,218.1 251,218.0 253,217.9 255,218.0 257,218.2 259,218.4 261,218.7 263,218.9 265,219.2 267,219.4 269,219.7 271,219.9 273,220.2 275,221.1 276,223.3 277,227.9 278,235.3 279,245.5 280,258.0 281,271.6 282,284.4 283,293.8 283,294.6 282,286.0 281,274.4 280,262.3 279,251.6 278,243.3 277,237.5 276,233.7 275,231.9 273,231.2 271,231.1 269,231.0 267,230.9 265,230.8 263,230.7 261,230.6 259,230.6 257,230.5 255,230.5 253,230.5 251,230.5 249,230.6 247,230.7 245,230.7 243,230.8 241,230.9 239,231.0 237,231.0 235,231.1 233,231.2 231,231.2 229,231.3 227,231.4 225,231.5 223,231.9 221,232.7 219,233.5 217,234.3 215,235.1 213,235.6 211,235.5 209,235.1 207,234.7"/>
<polygon fill="#ffa0b8" points="207,228.3 209,228.5 211,228.8 213,228.9 215,228.5 217,227.9 219,227.3 221,226.7 223,226.1 225,225.7 227,225.6 229,225.5 231,225.4 233,225.3 235,225.3 237,225.2 239,225.1 241,225.0 243,224.9 245,224.8 247,224.7 249,224.6 251,224.5 253,224.5 255,224.5 257,224.6 259,224.8 261,224.9 263,225.1 265,225.2 267,225.4 269,225.6 271,225.8 273,226.0 275,226.8 276,228.8 277,232.9 278,239.5 279,248.7 280,260.3 281,273.1 282,285.2 283,294.4 283,294.4 282,285.8 281,274.1 280,261.7 279,250.7 278,242.2 277,236.2 276,232.3 275,230.4 273,229.7 271,229.6 269,229.5 267,229.3 265,229.2 263,229.1 261,229.0 259,228.9 257,228.8 255,228.7 253,228.7 251,228.8 249,228.9 247,229.0 245,229.0 243,229.1 241,229.2 239,229.3 237,229.4 235,229.4 233,229.5 231,229.6 229,229.7 227,229.7 225,229.9 223,230.3 221,231.0 219,231.7 217,232.5 215,233.2 213,233.7 211,233.6 209,233.2 207,232.9"/>
<polygon fill="#046804" points="285,295.1 286,287.2 287,275.7 288,263.2 289,252.1 290,243.6 291,237.0 292,231.1 293,225.3 294,219.8 295,215.3 296,212.2 297,210.0 298,208.3 299,206.8 300,205.9 301,206.0 303,207.7 305,209.7 307,211.7 309,213.8 311,215.8 313,217.7 315,218.8 317,218.5 319,217.8 321,217.1 323,216.5 325,215.8 327,215.2 329,214.5 331,213.9 333,213.7 335,213.8 337,214.1 339,214.3 341,214.5 343,214.8 345,214.5 347,212.8 349,210.6 351,208.5 353,206.8 355,207.3 357,209.2 359,211.4 361,213.1 363,213.8 365,214.1 367,214.3 369,214.2 371,214.0 373,213.8 375,213.6 377,213.4 379,213.1 381,212.9 383,212.7 385,212.5 387,212.3 389,212.1 391,211.7 393,211.0 395,210.4 397,209.7 399,209.0 401,208.0 403,206.4 405,204.7 407,204.4 409,205.2 411,206.2 413,207.2 415,208.2 417,209.2 419,210.1 421,210.4 423,210.3 425,210.2 427,210.1 429,210.0 431,209.8 433,209.7 435,209.6 437,209.8 439,210.7 441,211.9 443,213.0 445,214.2 447,214.7 449,213.5 451,211.7 453,209.9 455,208.1 457,206.3 459,205.6 461,206.6 463,208.3 465,209.9 467,211.6 469,213.2 471,214.2 473,214.3 475,214.2 477,214.2 479,214.1 481,214.1 483,214.0 485,213.9 487,213.9 489,213.8 491,213.7 493,213.7 495,213.6 497,213.4 499,212.8 501,211.6 503,210.5 505,209.3 507,208.2 509,207.0 511,206.2 513,206.7 515,207.9 517,209.2 519,210.5 521,211.8 523,213.1 525,214.1 527,214.4 529,214.4 531,214.4 533,214.4 535,214.4 537,214.4 539,214.4 541,214.4 543,214.9 544,216.9 545,222.6 546,233.7 547,250.3 548,269.1 549,284.4 549,287.1 548,274.7 547,260.8 546,250.2 545,243.9 544,240.9 543,240.2 541,240.8 539,241.8 537,242.8 535,243.7 533,244.7 531,245.7 529,246.7 527,247.6 525,248.2 523,247.9 521,247.1 519,246.4 517,245.7 515,244.9 513,244.2 511,243.5 509,242.7 507,242.0 505,241.2 503,240.5 501,239.8 499,239.0 497,238.3 495,237.6 493,236.8 491,236.1 489,235.5 487,235.9 485,237.2 483,238.7 481,240.2 479,241.7 477,243.2 475,244.7 473,245.9 471,245.7 469,244.5 467,243.2 465,241.8 463,240.5 461,239.2 459,237.9 457,236.5 455,235.5 453,235.1 451,235.2 449,235.4 447,235.5 445,235.6 443,235.7 441,235.9 439,236.1 437,236.8 435,237.5 433,238.3 431,239.3 429,240.8 427,242.4 425,244.1 423,245.7 421,247.3 419,247.9 417,247.1 415,245.9 413,244.7 411,243.5 409,242.4 407,241.2 405,240.0 403,238.8 401,237.7 399,237.1 397,237.0 395,237.0 393,237.0 391,237.0 389,237.0 387,237.0 385,237.2 383,237.9 381,238.8 379,239.7 377,240.6 375,241.5 373,242.4 371,243.3 369,244.2 367,244.6 365,244.2 363,243.6 361,242.9 359,242.3 357,241.6 355,241.0 353,240.4 351,240.0 349,239.8 347,239.7 345,239.6 343,239.5 341,239.4 339,239.3 337,239.2 335,239.1 333,239.0 331,239.5 329,240.4 327,241.4 325,242.4 323,243.4 321,244.4 319,245.4 317,246.4 315,247.0 313,245.8 311,243.6 309,241.3 307,239.0 305,236.7 303,234.4 301,235.0 300,238.2 299,243.1 298,248.5 297,254.1 296,259.7 295,265.3 294,271.0 293,276.6 292,281.9 291,286.4 290,289.8 289,292.3 288,294.5 287,296.6 286,298.6 285,300.0"/>
<polygon fill="#1010e8" points="285,295.9 286,288.9 287,278.9 288,267.9 289,258.2 290,250.6 291,244.5 292,238.8 293,233.1 294,227.6 295,222.9 296,219.4 297,216.8 298,214.4 299,212.3 300,210.9 301,210.5 303,211.8 305,213.9 307,216.0 309,218.0 311,220.1 313,222.1 315,223.2 317,222.9 319,222.2 321,221.5 323,220.8 325,220.0 327,219.3 329,218.6 331,218.0 333,217.7 335,217.9 337,218.1 339,218.3 341,218.5 343,218.7 345,218.5 347,217.1 349,215.3 351,213.5 353,212.2 355,212.6 357,214.4 359,216.3 361,217.9 363,218.6 365,218.9 367,219.1 369,219.0 371,218.7 373,218.4 375,218.0 377,217.7 379,217.4 381,217.1 383,216.8 385,216.5 387,216.3 389,216.1 391,215.7 393,215.2 395,214.6 397,214.1 399,213.5 401,212.8 403,211.6 405,210.4 407,210.3 409,211.2 411,212.3 413,213.4 415,214.4 417,215.5 419,216.3 421,216.5 423,216.2 425,215.8 427,215.5 429,215.1 431,214.8 433,214.6 435,214.3 437,214.4 439,215.0 441,215.9 443,216.8 445,217.7 447,218.1 449,217.1 451,215.5 453,213.9 455,212.5 457,211.2 459,210.7 461,211.8 463,213.4 465,215.0 467,216.6 469,218.2 471,219.2 473,219.4 475,219.1 477,218.8 479,218.5 481,218.2 483,217.9 485,217.7 487,217.4 489,217.3 491,217.3 493,217.5 495,217.6 497,217.7 499,217.2 501,216.4 503,215.6 505,214.7 507,213.9 509,213.1 511,212.5 513,213.1 515,214.2 517,215.4 519,216.6 521,217.8 523,219.0 525,219.9 527,220.0 529,219.9 531,219.7 533,219.6 535,219.4 537,219.2 539,219.1 541,218.9 543,219.2 544,221.0 545,226.2 546,236.5 547,252.1 548,270.1 549,284.8 549,286.6 548,273.7 547,258.8 546,247.1 545,239.8 544,236.4 543,235.4 541,235.8 539,236.6 537,237.4 535,238.2 533,238.9 531,239.7 529,240.5 527,241.3 525,241.7 523,241.2 521,240.4 519,239.6 517,238.7 515,237.9 513,237.1 511,236.4 509,235.9 507,235.6 505,235.2 503,234.8 501,234.4 499,234.0 497,233.6 495,233.1 493,232.5 491,232.0 489,231.6 487,231.9 485,233.0 483,234.3 481,235.5 479,236.7 477,238.0 475,239.2 473,240.2 471,240.0 469,238.9 467,237.5 465,236.1 463,234.7 461,233.3 459,232.0 457,231.1 455,230.5 453,230.6 451,231.0 449,231.4 447,231.7 445,231.7 443,231.5 441,231.4 439,231.3 437,231.6 435,232.2 433,232.9 431,233.8 429,235.0 427,236.4 425,237.7 423,239.1 421,240.4 419,240.9 417,240.1 415,239.0 413,237.9 411,236.7 409,235.6 407,234.5 405,233.6 403,232.9 401,232.3 399,232.0 397,232.1 395,232.2 393,232.3 391,232.4 389,232.5 387,232.6 385,232.8 383,233.4 381,234.2 379,234.9 377,235.7 375,236.5 373,237.3 371,238.0 369,238.8 367,239.2 365,238.8 363,238.2 361,237.6 359,236.7 357,235.8 355,234.9 353,234.3 351,234.3 349,234.6 347,234.9 345,235.1 343,235.0 341,234.9 339,234.8 337,234.7 335,234.5 333,234.5 331,234.9 329,235.7 327,236.7 325,237.7 323,238.6 321,239.6 319,240.5 317,241.5 315,242.0 313,240.9 311,238.7 309,236.5 307,234.2 305,232.0 303,229.8 301,229.9 300,232.6 299,236.8 298,241.6 297,246.5 296,251.5 295,256.7 294,262.2 293,267.8 292,273.2 291,278.0 290,281.9 289,285.4 288,289.2 287,293.1 286,296.6 285,299.2"/>
<polygon fill="#f01010" points="285,296.1 286,289.5 287,280.0 288,269.6 289,260.3 290,253.1 291,247.2 292,241.6 293,236.0 294,230.6 295,225.9 296,222.3 297,219.4 298,216.9 299,214.6 300,212.9 301,212.3 303,213.6 305,215.7 307,217.9 309,220.0 311,222.2 313,224.2 315,225.3 317,225.0 319,224.4 321,223.7 323,223.0 325,222.3 327,221.6 329,220.9 331,220.3 333,220.0 335,220.2 337,220.4 339,220.6 341,220.8 343,220.9 345,220.7 347,219.5 349,217.9 351,216.3 353,215.2 355,215.7 357,217.3 359,219.1 361,220.6 363,221.2 365,221.6 367,221.9 369,221.7 371,221.3 373,220.9 375,220.6 377,220.2 379,219.8 381,219.4 383,219.0 385,218.7 387,218.5 389,218.3 391,218.0 393,217.5 395,217.0 397,216.5 399,216.1 401,215.6 403,215.1 405,214.7 407,215.3 409,216.8 411,218.3 413,219.9 415,221.5 417,223.1 419,224.4 421,224.8 423,224.7 425,224.4 427,224.1 429,223.7 431,223.4 433,223.2 435,223.2 437,223.3 439,222.4 441,222.0 443,221.8 445,221.6 447,221.1 449,219.4 451,217.6 453,216.2 455,214.9 457,213.9 459,213.6 461,214.8 463,216.3 465,217.9 467,219.5 469,221.0 471,222.1 473,222.2 475,221.9 477,221.4 479,221.0 481,220.6 483,220.2 485,219.7 487,219.4 489,219.2 491,220.3 493,222.4 495,224.6 497,225.9 499,225.9 501,225.7 503,225.5 505,225.3 507,225.1 509,224.9 511,224.8 513,225.4 515,226.4 517,227.4 519,228.5 521,229.5 523,230.5 525,231.2 527,231.0 529,230.5 531,230.0 533,229.6 535,229.1 537,228.6 539,228.1 541,227.6 543,227.5 544,228.9 545,233.2 546,242.0 547,255.5 548,271.9 549,285.7 549,285.7 548,271.9 547,255.5 546,242.0 545,233.2 544,228.9 543,227.5 541,227.6 539,228.1 537,228.6 535,229.1 533,229.6 531,230.0 529,230.5 527,231.0 525,231.2 523,230.5 521,229.5 519,228.5 517,227.4 515,226.4 513,225.4 511,224.8 509,224.9 507,225.1 505,225.3 503,225.5 501,225.7 499,225.9 497,225.9 495,226.6 493,228.3 491,229.8 489,230.3 487,230.6 485,231.6 483,232.8 481,233.9 479,235.1 477,236.2 475,237.4 473,238.3 471,238.1 469,237.0 467,235.6 465,234.2 463,232.8 461,231.4 459,230.1 457,229.3 455,228.9 453,229.1 451,229.6 449,229.7 447,229.3 445,228.3 443,227.1 441,225.8 439,224.4 437,223.3 435,224.0 433,224.8 431,225.8 429,227.1 427,228.5 425,230.0 423,231.5 421,233.0 419,233.8 417,233.5 415,232.9 413,232.3 411,231.7 409,231.1 407,230.5 405,230.3 403,230.3 401,230.3 399,230.3 397,230.5 395,230.6 393,230.8 391,230.9 389,231.0 387,231.1 385,231.3 383,231.9 381,232.6 379,233.3 377,234.1 375,234.8 373,235.5 371,236.3 369,237.0 367,237.3 365,237.0 363,236.4 361,235.8 359,234.9 357,233.9 355,232.9 353,232.3 351,232.4 349,232.8 347,233.3 345,233.6 343,233.6 341,233.4 339,233.3 337,233.2 335,233.0 333,232.9 331,233.3 329,234.2 327,235.1 325,236.1 323,237.0 321,237.9 319,238.9 317,239.8 315,240.3 313,239.2 311,237.1 309,234.8 307,232.6 305,230.3 303,228.2 301,228.2 300,230.7 299,234.6 298,239.1 297,243.8 296,248.6 295,253.7 294,259.1 293,264.7 292,270.2 291,275.0 290,279.1 289,283.0 288,287.3 287,291.8 286,296.0 285,298.9"/>
<polygon fill="#e01020" points="285,297.6 286,292.9 287,286.2 288,278.9 289,272.2 290,266.7 291,261.7 292,256.5 293,250.9 294,245.4 295,240.3 296,235.9 297,232.1 298,228.4 299,224.9 300,222.1 302,220.3 304,222.1 306,224.3 308,226.4 310,228.6 312,230.8 314,232.5 316,232.8 318,232.0 320,231.2 322,230.4 324,229.5 326,228.7 328,227.9 330,227.0 332,226.4 334,226.4 336,226.5 338,226.7 340,226.9 342,227.1 344,227.2 346,226.7 348,225.8 350,224.7 352,223.8 354,223.7 356,224.7 358,226.1 360,227.5 362,228.4 364,228.9 366,229.4 368,229.4 370,228.9 372,228.4 374,227.8 376,227.3 378,226.7 380,226.2 382,225.6 384,225.1 386,224.7 388,224.6 390,224.5 392,224.2 394,223.9 396,223.5 398,223.2 400,222.9 402,222.6 404,222.1 406,222.0 408,222.6 410,223.5 412,224.5 414,225.4 416,226.3 418,227.2 420,227.4 422,226.7 424,225.8 426,224.8 428,223.9 430,223.0 432,222.3 434,221.7 436,221.2 438,221.3 440,222.1 442,223.0 444,223.8 446,224.6 448,224.6 450,224.0 452,223.0 454,222.1 456,221.6 458,221.5 460,222.2 462,223.6 464,225.1 466,226.6 468,228.1 470,229.5 472,230.2 474,229.8 476,229.1 478,228.3 480,227.5 482,226.7 484,226.0 486,225.2 488,224.7 490,224.8 492,224.5 494,224.2 496,223.8 498,223.9 500,223.6 502,223.3 504,222.9 506,222.5 508,222.2 510,221.9 512,222.1 514,222.9 516,224.0 518,225.1 520,226.1 522,227.2 524,228.2 526,228.5 528,228.1 530,227.7 532,227.3 534,226.9 536,226.5 538,226.1 540,225.7 542,225.3 544,227.0 545,231.5 546,240.6 547,254.7 548,271.5 549,285.5 549,286.1 548,272.7 547,257.0 546,244.3 545,236.2 544,232.3 542,231.0 540,231.6 538,232.2 536,232.9 534,233.5 532,234.1 530,234.7 528,235.4 526,235.9 524,235.7 522,234.9 520,233.9 518,233.0 516,232.1 514,231.1 512,230.3 510,229.9 508,229.8 506,229.8 504,229.7 502,229.7 500,229.6 498,229.5 496,229.2 494,227.6 492,226.1 490,224.8 488,224.7 486,225.2 484,226.0 482,226.7 480,227.5 478,228.3 476,229.1 474,229.8 472,230.2 470,229.5 468,228.1 466,226.6 464,225.1 462,223.6 460,222.2 458,221.5 456,221.6 454,222.1 452,223.0 450,224.0 448,225.3 446,226.0 444,226.1 442,226.1 440,226.3 438,226.7 436,227.1 434,227.4 432,227.8 430,228.4 428,229.2 426,230.0 424,230.7 422,231.5 420,231.9 418,231.2 416,229.9 414,228.5 412,227.1 410,225.7 408,224.4 406,223.3 404,223.0 402,222.9 400,222.9 398,223.2 396,223.5 394,223.9 392,224.2 390,224.5 388,224.6 386,224.7 384,225.1 382,225.6 380,226.2 378,226.7 376,227.3 374,227.8 372,228.4 370,228.9 368,229.4 366,229.4 364,228.9 362,228.4 360,227.5 358,226.1 356,224.7 354,223.7 352,223.8 350,224.7 348,225.8 346,226.7 344,227.2 342,227.1 340,226.9 338,226.7 336,226.5 334,226.4 332,226.4 330,227.0 328,227.9 326,228.7 324,229.5 322,230.4 320,231.2 318,232.0 316,232.8 314,232.5 312,230.8 310,228.6 308,226.4 306,224.3 304,222.1 302,220.3 300,222.1 299,224.9 298,228.4 297,232.1 296,235.9 295,240.3 294,245.4 293,250.9 292,256.5 291,261.7 290,266.7 289,272.2 288,278.9 287,286.2 286,292.9 285,297.6"/>
<polygon fill="#ffa000" points="285,297.6 286,292.9 287,286.3 288,278.8 289,272.1 290,266.6 291,261.6 292,256.3 293,250.8 294,245.2 295,240.1 296,235.7 297,231.8 298,228.2 299,224.7 300,221.9 302,220.1 304,221.9 306,224.0 308,226.2 310,228.3 312,230.4 314,232.2 316,232.4 318,231.6 320,230.8 322,229.9 324,229.1 326,228.2 328,227.4 330,226.5 332,225.9 334,225.9 336,226.0 338,226.2 340,226.4 342,226.6 344,226.7 346,226.2 348,225.2 350,224.1 352,223.1 354,223.0 356,224.1 358,225.5 360,226.9 362,227.8 364,228.3 366,228.8 368,228.8 370,228.3 372,227.8 374,227.3 376,226.7 378,226.2 380,225.6 382,225.1 384,224.6 386,224.2 388,224.1 390,223.9 392,223.7 394,223.3 396,223.0 398,222.7 400,222.4 402,222.1 404,221.8 406,221.8 408,222.7 410,223.8 412,224.9 414,226.1 416,227.2 418,228.3 420,228.7 422,228.2 424,227.3 426,226.5 428,225.7 430,224.8 432,224.2 434,223.7 436,223.4 438,223.2 440,223.5 442,223.9 444,224.4 446,224.8 448,224.5 450,223.5 452,222.5 454,221.6 456,221.0 458,220.8 460,221.6 462,223.0 464,224.5 466,226.0 468,227.5 470,228.9 472,229.5 474,229.2 476,228.5 478,227.7 480,227.0 482,226.2 484,225.5 486,224.7 488,224.2 490,224.3 492,224.8 494,225.3 496,225.7 498,225.9 500,225.8 502,225.6 504,225.4 506,225.2 508,225.0 510,224.8 512,225.1 514,225.9 516,226.9 518,227.9 520,229.0 522,230.0 524,230.9 526,231.2 528,230.8 530,230.3 532,229.8 534,229.3 536,228.8 538,228.3 540,227.8 542,227.4 544,228.9 545,233.2 546,242.0 547,255.5 548,271.9 549,285.7 549,285.7 548,271.9 547,255.5 546,242.0 545,233.2 544,228.9 542,227.4 540,227.8 538,228.3 536,228.8 534,229.3 532,229.8 530,230.3 528,230.8 526,231.2 524,230.9 522,230.0 520,229.0 518,227.9 516,226.9 514,225.9 512,225.1 510,224.8 508,225.0 506,225.2 504,225.4 502,225.6 500,225.8 498,225.9 496,225.7 494,226.7 492,227.5 490,228.3 488,228.1 486,228.8 484,229.8 482,230.8 480,231.8 478,232.8 476,233.8 474,234.8 472,235.2 470,234.5 468,233.2 466,231.7 464,230.3 462,228.8 460,227.4 458,226.5 456,226.2 454,226.3 452,226.9 450,227.6 448,227.7 446,227.4 444,226.6 442,225.6 440,224.5 438,223.6 436,223.4 434,224.1 432,224.9 430,225.9 428,227.0 426,228.3 424,229.5 422,230.8 420,231.8 418,231.8 416,231.1 414,230.3 412,229.5 410,228.7 408,227.9 406,227.3 404,227.3 402,227.4 400,227.5 398,227.6 396,227.8 394,228.1 392,228.3 390,228.5 388,228.6 386,228.7 384,229.0 382,229.7 380,230.3 378,231.0 376,231.7 374,232.3 372,233.0 370,233.7 368,234.2 366,234.2 364,233.7 362,233.2 360,232.3 358,231.2 356,230.0 354,229.1 352,229.0 350,229.6 348,230.2 346,230.9 344,231.1 342,231.0 340,230.9 338,230.7 336,230.6 334,230.4 332,230.5 330,231.2 328,231.9 326,232.6 324,233.2 322,233.9 320,234.6 318,235.3 316,235.9 314,235.4 312,233.5 310,231.1 308,228.7 306,226.3 304,223.9 302,222.0 300,223.8 299,226.7 298,230.3 297,233.9 296,237.8 295,242.1 294,247.0 293,252.4 292,257.8 291,262.8 290,267.5 289,272.8 288,279.2 287,286.3 286,292.9 285,297.6"/>
<polygon fill="#ffb000" points="285,297.0 286,291.5 287,283.8 288,275.4 289,267.8 290,261.8 291,256.6 292,251.3 293,245.9 294,240.5 295,235.7 296,231.6 297,228.2 298,225.0 299,221.9 300,219.5 301,218.3 303,219.1 305,221.4 307,223.7 309,226.0 311,228.3 313,230.5 315,231.7 317,231.5 319,230.8 321,230.1 323,229.5 325,228.8 327,228.1 329,227.5 331,226.7 333,226.3 335,226.5 337,226.6 339,226.8 341,227.0 343,227.1 345,227.0 347,226.3 349,225.2 351,224.2 353,223.6 355,224.1 357,225.4 359,226.8 361,228.0 363,228.7 365,229.2 367,229.5 369,229.2 371,228.7 373,228.1 375,227.5 377,227.0 379,226.4 381,225.9 383,225.3 385,224.9 387,224.7 389,224.5 391,224.3 393,224.0 395,223.7 397,223.4 399,223.1 401,222.8 403,222.6 405,222.4 407,222.8 409,223.8 411,224.9 413,226.0 415,227.1 417,228.2 419,229.0 421,228.8 423,228.0 425,227.1 427,226.3 429,225.4 431,224.6 433,224.0 435,223.6 437,223.3 439,223.4 441,223.9 443,224.4 445,224.9 447,225.1 449,224.5 451,223.5 453,222.5 455,221.8 457,221.4 459,221.7 461,222.9 463,224.4 465,225.9 467,227.4 469,228.8 471,229.9 473,230.1 475,229.5 477,228.7 479,227.9 481,227.1 483,226.4 485,225.6 487,224.9 489,224.6 491,224.9 493,225.2 495,225.6 497,225.9 499,225.9 501,225.7 503,225.5 505,225.3 507,225.1 509,224.9 511,224.8 513,225.4 515,226.4 517,227.4 519,228.5 521,229.5 523,230.5 525,231.2 527,231.0 529,230.5 531,230.0 533,229.6 535,229.1 537,228.6 539,228.1 541,227.6 543,227.5 544,228.9 545,233.2 546,242.0 547,255.5 548,271.9 549,285.7 549,285.7 548,271.9 547,255.5 546,242.0 545,233.2 544,228.9 543,227.5 541,227.6 539,228.1 537,228.6 535,229.1 533,229.6 531,230.0 529,230.5 527,231.0 525,231.2 523,230.5 521,229.5 519,228.5 517,227.4 515,226.4 513,225.4 511,224.8 509,224.9 507,225.1 505,225.3 503,225.5 501,225.7 499,225.9 497,225.9 495,225.6 493,225.2 491,224.9 489,224.6 487,224.9 485,225.6 483,226.4 481,227.1 479,227.9 477,228.7 475,229.5 473,230.1 471,229.9 469,228.8 467,227.4 465,225.9 463,224.4 461,222.9 459,221.7 457,221.4 455,221.8 453,222.5 451,223.5 449,224.5 447,225.1 445,224.9 443,224.4 441,223.9 439,223.4 437,223.3 435,223.6 433,224.0 431,224.6 429,225.4 427,226.3 425,227.1 423,228.0 421,228.8 419,229.0 417,228.2 415,227.1 413,226.0 411,224.9 409,223.8 407,222.8 405,222.4 403,222.6 401,222.8 399,223.1 397,223.4 395,223.7 393,224.0 391,224.3 389,224.5 387,224.7 385,224.9 383,225.3 381,225.9 379,226.4 377,227.0 375,227.5 373,228.1 371,228.7 369,229.2 367,229.5 365,229.2 363,228.7 361,228.0 359,226.8 357,225.4 355,224.1 353,223.6 351,224.2 349,225.2 347,226.3 345,227.0 343,227.1 341,227.0 339,226.8 337,226.6 335,226.5 333,226.3 331,226.7 329,227.5 327,228.6 325,229.7 323,230.8 321,231.9 319,233.0 317,234.1 315,234.8 313,233.9 311,232.1 309,230.1 307,228.1 305,226.2 303,224.3 301,224.2 300,226.4 299,229.9 298,234.1 297,238.5 296,243.1 295,248.1 294,253.6 293,259.4 292,265.1 291,270.3 290,274.9 289,279.5 288,284.7 287,290.2 286,295.1 285,298.6"/>
<polygon fill="#ff90a0" points="285,298.1 286,293.8 287,287.8 288,281.2 289,275.1 290,270.0 291,265.2 292,259.9 293,254.3 294,248.7 295,243.4 296,238.8 297,234.6 298,230.7 299,226.9 300,223.8 301,222.0 303,222.4 305,224.4 307,226.5 309,228.6 311,230.6 313,232.6 315,233.6 317,233.1 319,232.2 321,231.2 323,230.4 325,229.4 327,228.5 329,227.5 331,226.7 333,226.3 335,226.5 337,226.6 339,226.8 341,227.0 343,227.1 345,227.0 347,226.3 349,225.2 351,224.2 353,223.6 355,224.1 357,225.4 359,226.8 361,228.0 363,228.7 365,229.2 367,229.5 369,229.2 371,228.7 373,228.1 375,227.5 377,227.0 379,226.4 381,225.9 383,225.3 385,224.9 387,224.7 389,224.5 391,224.3 393,224.0 395,223.7 397,223.4 399,223.1 401,222.8 403,222.6 405,222.4 407,222.8 409,223.8 411,224.9 413,226.0 415,227.1 417,228.2 419,229.0 421,228.8 423,228.0 425,227.1 427,226.3 429,225.4 431,224.6 433,224.0 435,223.6 437,223.3 439,223.4 441,223.9 443,224.4 445,224.9 447,225.1 449,224.5 451,223.5 453,222.5 455,221.8 457,221.4 459,221.7 461,222.9 463,224.4 465,225.9 467,227.4 469,228.8 471,229.9 473,230.1 475,229.5 477,228.7 479,227.9 481,227.1 483,226.4 485,225.6 487,224.9 489,224.6 491,224.9 493,225.2 495,225.6 497,225.9 499,225.9 501,225.7 503,225.5 505,225.3 507,225.1 509,224.9 511,224.8 513,225.4 515,226.4 517,227.4 519,228.5 521,229.5 523,230.5 525,231.2 527,231.0 529,230.5 531,230.0 533,229.6 535,229.1 537,228.6 539,228.1 541,227.6 543,227.5 544,228.9 545,233.2 546,242.0 547,255.5 548,271.9 549,285.7 549,285.7 548,271.9 547,255.5 546,242.0 545,233.2 544,228.9 543,227.5 541,227.6 539,228.1 537,228.6 535,229.1 533,229.6 531,230.0 529,230.5 527,231.0 525,231.2 523,230.5 521,229.5 519,228.5 517,227.4 515,226.4 513,225.4 511,224.8 509,224.9 507,225.1 505,225.3 503,225.5 501,225.7 499,225.9 497,225.9 495,225.6 493,225.2 491,224.9 489,224.6 487,224.9 485,225.6 483,226.4 481,227.1 479,227.9 477,228.7 475,229.5 473,230.1 471,229.9 469,228.8 467,227.4 465,225.9 463,224.4 461,222.9 459,221.7 457,221.4 455,221.8 453,222.5 451,223.5 449,224.5 447,225.1 445,224.9 443,224.4 441,223.9 439,223.4 437,223.3 435,223.6 433,224.0 431,224.6 429,225.4 427,226.3 425,227.1 423,228.0 421,228.8 419,229.0 417,228.2 415,227.1 413,226.0 411,224.9 409,223.8 407,222.8 405,222.4 403,222.6 401,222.8 399,223.1 397,223.4 395,223.7 393,224.0 391,224.3 389,224.5 387,224.7 385,224.9 383,225.3 381,225.9 379,226.4 377,227.0 375,227.5 373,228.1 371,228.7 369,229.2 367,229.5 365,229.2 363,228.7 361,228.0 359,226.8 357,225.4 355,224.1 353,223.6 351,224.2 349,225.2 347,226.3 345,227.0 343,227.1 341,227.0 339,226.8 337,226.6 335,226.5 333,226.3 331,226.7 329,227.5 327,228.5 325,229.4 323,230.4 321,231.6 319,232.6 317,233.6 315,234.2 313,233.3 311,231.3 309,229.3 307,227.3 305,225.3 303,223.3 301,223.1 300,225.1 299,228.4 298,232.4 297,236.6 296,241.0 295,245.8 294,251.1 293,256.8 292,262.5 291,267.7 290,272.4 289,277.3 288,283.0 287,289.0 286,294.4 285,298.1"/>
<polygon fill="#046804" points="602,303.5 603,291.3 604,272.9 605,254.6 606,241.8 607,234.3 608,229.9 609,226.7 610,223.9 611,221.1 612,218.4 613,215.7 614,213.0 615,210.6 616,208.3 617,206.2 619,204.1 621,205.4 623,207.5 625,209.7 627,211.8 629,213.9 631,216.1 633,218.0 635,218.6 637,217.6 639,216.5 641,215.4 643,214.3 645,213.1 647,212.0 649,211.0 651,210.7 653,210.9 655,211.2 657,211.4 659,211.7 661,211.9 663,212.2 665,212.5 667,212.7 669,213.0 671,213.2 673,213.4 675,213.4 677,213.4 679,213.3 681,213.2 683,213.1 685,213.1 687,213.0 689,212.9 691,212.9 693,212.8 695,212.7 697,212.6 699,212.5 701,212.2 703,211.5 705,210.7 707,209.9 709,209.0 711,208.2 713,207.4 715,206.6 717,205.8 719,204.9 721,204.2 723,204.0 725,204.5 727,205.0 729,205.6 731,206.1 733,206.6 735,207.1 737,207.7 739,208.2 741,208.7 743,209.3 745,209.8 747,210.3 749,210.9 751,211.4 753,212.0 755,212.5 757,213.1 759,213.7 761,214.3 763,214.8 765,214.9 767,213.9 769,212.4 771,210.9 773,209.4 775,208.0 777,207.2 779,207.7 781,208.6 783,209.6 785,210.5 787,211.5 789,212.4 791,213.4 793,214.3 795,214.9 797,215.1 799,215.2 801,215.2 803,215.3 805,215.2 807,214.6 809,213.9 811,213.2 813,212.4 815,211.7 817,210.9 819,210.2 821,209.4 823,208.7 825,207.9 827,207.2 829,207.1 831,208.0 833,209.2 835,210.3 837,211.4 839,212.6 841,213.7 843,214.8 845,215.4 847,215.6 849,215.7 851,215.8 853,215.9 855,216.0 857,216.1 859,216.2 861,216.2 863,215.6 865,214.6 867,213.5 869,212.4 871,211.3 873,210.3 875,209.2 877,208.1 879,207.0 881,205.9 883,205.3 885,206.0 887,207.3 889,208.7 891,210.1 893,211.4 895,212.8 897,214.1 899,215.1 901,215.1 903,214.9 905,214.6 907,214.4 909,214.1 911,213.9 913,213.6 915,213.4 917,213.1 919,212.9 921,212.6 923,212.4 925,212.1 927,211.9 929,211.5 931,210.4 933,208.7 935,207.9 937,208.0 939,208.3 941,208.6 943,208.9 945,209.2 947,209.5 949,209.7 951,210.0 953,210.3 955,210.6 957,210.9 959,211.2 961,211.4 963,211.6 965,211.7 967,211.8 969,211.9 971,212.0 973,212.1 975,212.2 977,212.3 979,212.4 981,212.5 983,212.6 985,212.7 987,212.8 989,212.9 991,213.0 993,213.1 995,213.2 997,213.3 999,213.4 1001,213.5 1001,240.8 999,240.7 997,240.6 995,240.5 993,240.4 991,240.3 989,240.2 987,240.1 985,240.0 983,239.9 981,239.8 979,239.7 977,239.6 975,239.6 973,239.5 971,239.4 969,239.3 967,239.2 965,239.1 963,239.0 961,239.5 959,240.9 957,242.5 955,244.2 953,245.9 951,247.4 949,248.0 947,247.5 945,246.6 943,245.8 941,244.9 939,244.1 937,243.2 935,242.4 933,241.5 931,240.7 929,239.8 927,239.0 925,238.1 923,237.4 921,237.4 919,237.9 917,238.5 915,239.1 913,239.6 911,240.2 909,240.8 907,241.3 905,241.9 903,242.4 901,243.0 899,243.6 897,244.1 895,244.5 893,244.3 891,243.8 889,243.4 887,243.0 885,242.5 883,242.1 881,241.6 879,241.2 877,240.8 875,240.3 873,239.9 871,239.5 869,239.0 867,238.6 865,238.2 863,237.7 861,237.4 859,237.6 857,238.7 855,239.9 853,241.1 851,242.4 849,243.6 847,244.8 845,245.9 843,246.0 841,244.9 839,243.7 837,242.5 835,241.3 833,240.1 831,238.9 829,237.7 827,236.5 825,235.5 823,235.4 821,235.7 819,236.1 817,236.5 815,236.9 813,237.4 811,237.8 809,238.2 807,238.6 805,239.3 803,240.8 801,242.6 799,244.4 797,246.2 795,247.7 793,247.5 791,246.2 789,244.8 787,243.4 785,242.0 783,240.6 781,239.3 779,237.9 777,236.5 775,235.4 773,235.0 771,235.0 769,235.0 767,235.0 765,235.0 763,235.0 761,235.0 759,235.0 757,235.0 755,235.0 753,235.0 751,235.4 749,236.2 747,237.2 745,238.2 743,239.2 741,240.2 739,241.2 737,242.1 735,242.2 733,241.4 731,240.4 729,239.4 727,238.4 725,237.4 723,236.4 721,235.4 719,234.4 717,233.5 715,233.2 713,233.4 711,233.7 709,233.9 707,234.2 705,234.4 703,234.7 701,235.0 699,235.2 697,235.5 695,235.8 693,236.1 691,236.4 689,236.7 687,236.9 685,237.2 683,237.5 681,237.8 679,238.1 677,238.4 675,238.6 673,238.8 671,238.9 669,238.9 667,238.9 665,238.9 663,238.9 661,238.9 659,238.9 657,238.9 655,238.9 653,238.9 651,238.9 649,239.0 647,239.4 645,240.4 643,241.5 641,242.6 639,243.8 637,244.9 635,246.0 633,247.1 631,247.8 629,246.6 627,243.8 625,240.8 623,237.8 621,234.8 619,233.0 617,235.6 616,238.3 615,241.1 614,244.0 613,246.9 612,249.9 611,253.4 610,258.5 609,266.0 608,275.4 607,284.9 606,293.1 605,299.8 604,305.3 603,309.0 602,310.7"/>
<polygon fill="#1010e8" points="602,304.4 603,293.6 604,277.1 605,260.5 606,248.5 607,240.9 608,235.8 609,231.8 610,228.4 611,225.3 612,222.5 613,219.7 614,217.1 615,214.5 616,212.2 617,210.0 619,207.9 621,209.2 623,211.5 625,213.7 627,216.0 629,218.2 631,220.2 633,221.8 635,222.1 637,221.2 639,220.0 641,218.9 643,217.8 645,216.7 647,215.6 649,214.7 651,214.6 653,215.2 655,215.6 657,215.8 659,216.0 661,216.3 663,216.5 665,216.7 667,216.9 669,217.1 671,217.3 673,217.5 675,217.5 677,217.4 679,217.3 681,217.1 683,217.0 685,216.9 687,216.8 689,216.7 691,216.6 693,216.5 695,216.4 697,216.3 699,216.2 701,215.9 703,215.4 705,214.7 707,214.0 709,213.2 711,212.4 713,211.7 715,210.9 717,210.3 719,209.7 721,209.2 723,209.2 725,209.8 727,210.4 729,211.0 731,211.6 733,212.2 735,212.8 737,213.2 739,213.5 741,213.8 743,214.1 745,214.3 747,214.6 749,214.9 751,215.2 753,215.7 755,216.1 757,216.6 759,217.1 761,217.5 763,217.9 765,217.9 767,217.1 769,215.8 771,214.5 773,213.3 775,212.1 777,211.6 779,212.2 781,213.2 783,214.2 785,215.2 787,216.3 789,217.3 791,218.3 793,219.3 795,219.8 797,219.8 799,219.6 801,219.4 803,219.2 805,218.9 807,218.4 809,217.7 811,217.1 813,216.4 815,215.7 817,215.0 819,214.3 821,213.6 823,212.9 825,212.3 827,211.9 829,212.0 831,213.0 833,214.1 835,215.3 837,216.4 839,217.5 841,218.7 843,219.8 845,220.3 847,220.3 849,220.2 851,220.0 853,219.9 855,219.8 857,219.7 859,219.7 861,219.6 863,219.3 865,218.6 867,217.8 869,216.9 871,216.1 873,215.3 875,214.5 877,213.6 879,212.8 881,212.0 883,211.5 885,212.2 887,213.4 889,214.6 891,215.8 893,217.0 895,218.2 897,219.2 899,219.9 901,219.9 903,219.6 905,219.3 907,219.0 909,218.7 911,218.3 913,218.0 915,217.7 917,217.4 919,217.1 921,216.7 923,216.3 925,216.0 927,215.7 929,215.3 931,214.4 933,213.0 935,212.4 937,212.6 939,213.0 941,213.3 943,213.7 945,214.0 947,214.4 949,214.7 951,214.9 953,214.9 955,215.0 957,215.0 959,215.0 961,215.1 963,215.3 965,215.4 967,215.6 969,215.8 971,215.9 973,216.1 975,216.3 977,216.4 979,216.5 981,216.6 983,216.7 985,216.8 987,216.9 989,217.0 991,217.1 993,217.2 995,217.3 997,217.4 999,217.5 1001,217.6 1001,236.4 999,236.3 997,236.2 995,236.1 993,236.0 991,235.9 989,235.9 987,235.8 985,235.7 983,235.6 981,235.5 979,235.4 977,235.3 975,235.2 973,235.2 971,235.1 969,235.1 967,235.1 965,235.1 963,235.1 961,235.5 959,236.7 957,238.1 955,239.5 953,240.9 951,242.2 949,242.7 947,242.1 945,241.4 943,240.6 941,239.8 939,239.1 937,238.3 935,237.5 933,236.9 931,236.4 929,235.7 927,234.8 925,233.9 923,233.1 921,232.8 919,233.2 917,233.7 915,234.2 913,234.7 911,235.2 909,235.7 907,236.2 905,236.7 903,237.2 901,237.7 899,238.2 897,238.4 895,238.5 893,238.0 891,237.4 889,236.8 887,236.2 885,235.6 883,235.1 881,234.9 879,234.7 877,234.6 875,234.4 873,234.3 871,234.1 869,234.0 867,233.8 865,233.7 863,233.6 861,233.5 859,233.8 857,234.6 855,235.6 853,236.6 851,237.6 849,238.6 847,239.6 845,240.4 843,240.3 841,239.3 839,238.1 837,236.9 835,235.7 833,234.5 831,233.3 829,232.2 827,231.2 825,230.6 823,230.6 821,231.0 819,231.5 817,231.9 815,232.4 813,232.9 811,233.4 809,233.9 807,234.4 805,235.1 803,236.4 801,237.9 799,239.5 797,240.9 795,242.1 793,241.9 791,240.6 789,239.3 787,238.0 785,236.7 783,235.4 781,234.0 779,232.7 777,231.5 775,230.7 773,230.7 771,230.9 769,231.2 767,231.4 765,231.6 763,231.5 761,231.3 759,231.2 757,231.1 755,231.0 753,230.9 751,231.0 749,231.6 747,232.4 745,233.1 743,233.8 741,234.5 739,235.3 737,235.9 735,235.9 733,235.1 731,234.2 729,233.3 727,232.4 725,231.5 723,230.6 721,229.8 719,229.0 717,228.4 715,228.3 713,228.6 711,228.9 709,229.3 707,229.6 705,229.9 703,230.3 701,230.8 699,231.1 697,231.4 695,231.6 693,231.9 691,232.1 689,232.4 687,232.6 685,232.9 683,233.1 681,233.4 679,233.6 677,233.9 675,234.1 673,234.3 671,234.3 669,234.2 667,234.2 665,234.1 663,234.1 661,234.0 659,234.0 657,234.0 655,233.9 653,234.1 651,234.7 649,235.0 647,235.6 645,236.6 643,237.7 641,238.8 639,239.9 637,241.0 635,242.1 633,243.0 631,243.4 629,242.0 627,239.3 625,236.4 623,233.5 621,230.7 619,228.9 617,231.5 616,234.1 615,236.9 614,239.7 613,242.6 612,245.5 611,248.9 610,253.6 609,260.5 608,269.0 607,277.8 606,285.9 605,293.5 604,300.7 603,306.5 602,309.7"/>
<polygon fill="#f01010" points="602,304.7 603,294.1 604,278.1 605,261.9 606,250.0 607,242.4 608,237.2 609,233.0 610,229.4 611,226.3 612,223.4 613,220.7 614,218.0 615,215.4 616,213.1 617,210.9 619,208.8 621,210.1 623,212.4 625,214.6 627,216.9 629,219.2 631,221.2 633,222.7 635,222.9 637,222.0 639,220.9 641,219.7 643,218.6 645,217.5 647,216.4 649,215.5 651,215.9 653,217.3 655,218.1 657,218.3 659,218.5 661,218.7 663,218.9 665,219.1 667,219.3 669,219.4 671,219.6 673,219.8 675,219.7 677,219.6 679,219.5 681,219.4 683,219.2 685,219.1 687,219.0 689,218.9 691,218.7 693,218.6 695,218.5 697,218.4 699,218.2 701,219.3 703,221.7 705,222.2 707,221.0 709,219.8 711,218.5 713,217.2 715,215.8 717,214.6 719,213.5 721,212.4 723,212.1 725,212.7 727,213.4 729,214.0 731,214.7 733,215.3 735,215.9 737,216.3 739,216.5 741,216.6 743,216.8 745,216.9 747,217.0 749,217.2 751,217.4 753,217.7 755,218.1 757,218.6 759,219.0 761,219.2 763,219.1 765,219.0 767,218.1 769,216.9 771,215.7 773,214.6 775,213.5 777,213.0 779,213.7 781,214.7 783,215.8 785,216.8 787,217.9 789,218.9 791,219.9 793,220.9 795,221.5 797,221.3 799,221.0 801,220.8 803,220.7 805,220.5 807,220.1 809,219.7 811,219.2 813,218.6 815,218.0 817,217.3 819,216.7 821,216.0 823,215.3 825,214.8 827,214.5 829,214.8 831,215.7 833,216.9 835,218.0 837,219.2 839,220.3 841,221.5 843,222.6 845,223.0 847,222.9 849,222.7 851,222.4 853,222.2 855,222.0 857,221.8 859,221.6 861,222.4 863,223.9 865,225.4 867,226.1 869,225.7 871,225.4 873,225.1 875,224.7 877,224.4 879,224.1 881,223.8 883,223.7 885,224.2 887,225.1 889,226.0 891,226.9 893,227.8 895,228.6 897,229.1 899,229.3 901,229.1 903,228.7 905,228.3 907,227.8 909,227.4 911,227.0 913,226.6 915,226.2 917,225.8 919,225.4 921,224.2 923,222.4 925,220.7 927,219.0 929,217.0 931,215.3 933,214.0 935,213.4 937,213.7 939,214.0 941,214.4 943,214.8 945,215.2 947,215.5 949,215.9 951,216.0 953,216.0 955,216.0 957,215.9 959,215.9 961,216.0 963,216.2 965,216.5 967,216.8 969,217.1 971,217.4 973,217.7 975,217.9 977,218.0 979,218.1 981,218.2 983,218.3 985,218.4 987,218.5 989,218.6 991,218.7 993,218.8 995,218.9 997,219.0 999,219.1 1001,219.2 1001,234.8 999,234.7 997,234.6 995,234.5 993,234.4 991,234.3 989,234.2 987,234.1 985,234.0 983,233.9 981,233.8 979,233.7 977,233.6 975,233.5 973,233.6 971,233.7 969,233.8 967,233.9 965,234.0 963,234.1 961,234.6 959,235.8 957,237.2 955,238.5 953,239.8 951,241.1 949,241.5 947,241.0 945,240.2 943,239.5 941,238.7 939,238.0 937,237.2 935,236.5 933,235.9 931,235.5 929,234.1 927,231.7 925,229.4 923,227.4 921,225.8 919,225.4 917,225.8 915,226.2 913,226.6 911,227.0 909,227.4 907,227.8 905,228.3 903,228.7 901,229.1 899,229.3 897,229.1 895,228.6 893,227.8 891,226.9 889,226.0 887,225.1 885,224.2 883,223.7 881,223.8 879,224.1 877,224.4 875,224.7 873,225.1 871,225.4 869,225.7 867,226.1 865,227.4 863,229.6 861,231.4 859,232.5 857,233.3 855,234.2 853,235.1 851,236.0 849,236.9 847,237.8 845,238.6 843,238.5 841,237.4 839,236.2 837,235.0 835,233.9 833,232.7 831,231.5 829,230.4 827,229.5 825,228.9 823,229.0 821,229.4 819,229.9 817,230.4 815,230.9 813,231.4 811,231.9 809,232.4 807,233.0 805,233.7 803,234.9 801,236.3 799,237.7 797,239.1 795,240.1 793,239.9 791,238.7 789,237.4 787,236.1 785,234.8 783,233.5 781,232.2 779,230.9 777,229.7 775,229.1 773,229.1 771,229.5 769,229.8 767,230.1 765,230.4 763,230.3 761,230.1 759,229.9 757,229.7 755,229.6 753,229.5 751,229.6 749,230.1 747,230.8 745,231.4 743,232.0 741,232.6 739,233.3 737,233.8 735,233.8 733,233.1 731,232.2 729,231.3 727,230.4 725,229.5 723,228.6 721,227.5 719,226.1 717,224.8 715,224.1 713,223.8 711,223.5 709,223.3 707,223.1 705,222.9 703,224.6 701,228.0 699,229.8 697,230.0 695,230.3 693,230.5 691,230.7 689,231.0 687,231.2 685,231.4 683,231.7 681,231.9 679,232.1 677,232.4 675,232.6 673,232.7 671,232.7 669,232.7 667,232.6 665,232.6 663,232.5 661,232.4 659,232.4 657,232.3 655,232.2 653,232.7 651,233.6 649,234.2 647,234.8 645,235.8 643,236.9 641,238.0 639,239.1 637,240.2 635,241.3 633,242.1 631,242.4 629,241.1 627,238.3 625,235.5 623,232.6 621,229.8 619,228.1 617,230.6 616,233.2 615,235.9 614,238.8 613,241.6 612,244.6 611,247.9 610,252.6 609,259.3 608,267.7 607,276.3 606,284.3 605,292.1 604,299.8 603,306.0 602,309.4"/>
<polygon fill="#e01020" points="602,307.1 603,300.2 604,289.1 605,277.2 606,267.4 607,259.6 608,252.6 609,246.4 610,241.2 611,237.3 612,234.2 613,231.3 614,228.5 615,225.8 616,223.3 617,220.9 619,218.6 621,220.1 623,222.6 625,225.2 627,227.8 629,230.3 631,231.9 633,232.5 635,232.3 637,231.2 639,230.1 641,229.0 643,227.9 645,226.8 647,225.7 649,225.0 651,224.8 653,224.9 655,225.0 657,225.2 659,225.3 661,225.4 663,225.5 665,225.7 667,225.8 669,225.9 671,226.1 673,226.1 675,226.0 677,225.9 679,225.7 681,225.5 683,225.3 685,225.1 687,225.0 689,224.8 691,224.6 693,224.4 695,224.3 697,224.1 699,223.9 701,223.1 703,221.7 705,220.8 707,220.4 709,220.0 711,219.7 713,219.4 715,219.1 717,219.0 719,219.3 721,219.7 723,220.2 725,220.9 727,221.7 729,222.5 731,223.2 733,224.0 735,224.7 737,224.9 739,224.7 741,224.5 743,224.2 745,224.0 747,223.8 749,223.5 751,223.4 753,223.5 755,223.8 757,224.1 759,224.3 761,224.6 763,224.9 765,225.0 767,224.4 769,223.7 771,223.0 773,222.2 775,221.7 777,221.8 779,222.8 781,223.9 783,225.1 785,226.3 787,227.5 789,228.6 791,229.8 793,230.9 795,231.3 797,230.7 799,229.8 801,228.9 803,228.1 805,227.3 807,226.6 809,226.0 811,225.5 813,224.9 815,224.3 817,223.7 819,223.1 821,222.6 823,222.0 825,221.7 827,221.9 829,222.4 831,223.5 833,224.6 835,225.8 837,227.0 839,228.1 841,229.3 843,230.4 845,230.7 847,230.2 849,229.6 851,229.1 853,228.5 855,228.0 857,227.4 859,226.9 861,226.5 863,225.8 865,224.8 867,224.0 869,223.6 871,223.2 873,222.7 875,222.3 877,221.8 879,221.4 881,220.9 883,220.7 885,221.3 887,222.3 889,223.3 891,224.2 893,225.2 895,226.1 897,226.7 899,227.0 901,226.8 903,226.5 905,226.1 907,225.7 909,225.3 911,224.9 913,224.5 915,224.2 917,223.8 919,223.4 921,223.2 923,223.5 925,224.1 927,224.8 929,225.5 931,225.6 933,225.1 935,225.1 937,225.6 939,226.2 941,226.8 943,227.3 945,227.9 947,228.5 949,228.9 951,228.7 953,228.1 955,227.4 957,226.7 959,226.0 961,225.5 963,225.3 965,225.4 967,225.5 969,225.6 971,225.7 973,225.8 975,225.9 977,226.0 979,226.1 981,226.2 983,226.3 985,226.4 987,226.5 989,226.6 991,226.7 993,226.8 995,226.9 997,227.0 999,227.1 1001,227.1 1001,227.1 999,227.1 997,227.0 995,226.9 993,226.8 991,226.7 989,226.6 987,226.5 985,226.4 983,226.3 981,226.2 979,226.1 977,226.0 975,225.9 973,225.8 971,225.7 969,225.6 967,225.5 965,225.4 963,225.3 961,225.5 959,226.0 957,226.7 955,227.4 953,228.1 951,228.7 949,228.9 947,228.5 945,227.9 943,227.3 941,226.8 939,226.2 937,225.6 935,225.1 933,225.1 931,225.6 929,226.1 927,226.6 925,227.0 923,227.4 921,228.1 919,228.9 917,229.4 915,229.8 913,230.3 911,230.7 909,231.2 907,231.6 905,232.1 903,232.5 901,233.0 899,233.3 897,233.3 895,233.1 893,232.4 891,231.7 889,230.9 887,230.1 885,229.4 883,228.8 881,228.8 879,228.9 877,229.0 875,229.1 873,229.2 871,229.3 869,229.5 867,229.6 865,229.1 863,228.2 861,227.3 859,226.9 857,227.4 855,228.0 853,228.5 851,229.1 849,229.6 847,230.2 845,230.7 843,230.4 841,229.3 839,228.1 837,227.0 835,225.8 833,224.6 831,223.5 829,222.4 827,221.9 825,221.7 823,222.0 821,222.6 819,223.1 817,223.7 815,224.3 813,224.9 811,225.5 809,226.0 807,226.6 805,227.3 803,228.1 801,228.9 799,229.8 797,230.7 795,231.3 793,230.9 791,229.8 789,228.6 787,227.5 785,226.3 783,225.1 781,223.9 779,222.8 777,221.8 775,221.7 773,222.2 771,223.0 769,223.7 767,224.4 765,225.0 763,224.9 761,224.6 759,224.3 757,224.1 755,223.8 753,223.5 751,223.4 749,223.5 747,223.8 745,224.0 743,224.2 741,224.5 739,224.7 737,224.9 735,224.7 733,224.0 731,223.2 729,222.5 727,221.7 725,220.9 723,220.2 721,220.0 719,220.4 717,220.7 715,221.3 713,222.2 711,223.1 709,224.0 707,224.9 705,225.7 703,225.5 701,224.4 699,223.9 697,224.1 695,224.3 693,224.4 691,224.6 689,224.8 687,225.0 685,225.1 683,225.3 681,225.5 679,225.7 677,225.9 675,226.0 673,226.1 671,226.1 669,225.9 667,225.8 665,225.7 663,225.5 661,225.4 659,225.3 657,225.2 655,225.0 653,224.9 651,224.8 649,225.0 647,225.7 645,226.8 643,227.9 641,229.0 639,230.1 637,231.2 635,232.3 633,232.5 631,231.9 629,230.3 627,227.8 625,225.2 623,222.6 621,220.1 619,218.6 617,220.9 616,223.3 615,225.8 614,228.5 613,231.3 612,234.2 611,237.3 610,241.2 609,246.4 608,252.6 607,259.6 606,267.4 605,277.2 604,289.1 603,300.2 602,307.1"/>
<polygon fill="#ffa000" points="602,307.1 603,300.2 604,289.1 605,277.2 606,267.4 607,259.6 608,252.6 609,246.4 610,241.2 611,237.3 612,234.2 613,231.3 614,228.5 615,225.8 616,223.3 617,220.9 619,218.6 621,220.1 623,222.6 625,225.2 627,227.8 629,230.3 631,231.9 633,232.5 635,232.3 637,231.2 639,230.1 641,229.0 643,227.9 645,226.8 647,225.7 649,225.0 651,224.7 653,224.5 655,224.5 657,224.6 659,224.7 661,224.9 663,225.0 665,225.1 667,225.3 669,225.4 671,225.5 673,225.6 675,225.5 677,225.4 679,225.2 681,225.0 683,224.8 685,224.7 687,224.5 689,224.3 691,224.1 693,224.0 695,223.8 697,223.6 699,223.4 701,223.2 703,223.0 705,222.7 707,221.9 709,221.3 711,220.7 713,220.1 715,219.6 717,219.2 719,219.2 721,219.2 723,219.6 725,220.3 727,221.0 729,221.8 731,222.6 733,223.3 735,224.0 737,224.2 739,224.0 741,223.8 743,223.6 745,223.4 747,223.2 749,223.0 751,222.9 753,223.0 755,223.3 757,223.6 759,223.9 761,224.3 763,224.8 765,225.0 767,224.4 769,223.7 771,223.0 773,222.2 775,221.7 777,221.8 779,222.8 781,223.9 783,225.1 785,226.3 787,227.5 789,228.6 791,229.8 793,230.9 795,231.3 797,230.7 799,229.8 801,228.9 803,227.9 805,227.1 807,226.3 809,225.7 811,225.0 813,224.4 815,223.8 817,223.2 819,222.6 821,222.0 823,221.5 825,221.2 827,221.3 829,221.8 831,222.8 833,224.0 835,225.2 837,226.3 839,227.5 841,228.7 843,229.7 845,230.1 847,229.6 849,229.1 851,228.6 853,228.0 855,227.5 857,227.0 859,226.5 861,226.4 863,226.5 865,226.3 867,226.1 869,225.7 871,225.4 873,225.1 875,224.7 877,224.4 879,224.1 881,223.8 883,223.7 885,224.2 887,225.1 889,226.0 891,226.9 893,227.8 895,228.6 897,229.1 899,229.3 901,229.1 903,228.7 905,228.3 907,227.8 909,227.4 911,227.0 913,226.6 915,226.2 917,225.8 919,225.4 921,225.0 923,224.9 925,225.1 927,225.4 929,225.7 931,225.6 933,225.1 935,225.1 937,225.6 939,226.2 941,226.8 943,227.3 945,227.9 947,228.5 949,228.9 951,228.7 953,228.1 955,227.4 957,226.7 959,226.0 961,225.5 963,225.3 965,225.4 967,225.5 969,225.6 971,225.7 973,225.8 975,225.9 977,226.0 979,226.1 981,226.2 983,226.3 985,226.4 987,226.5 989,226.6 991,226.7 993,226.8 995,226.9 997,227.0 999,227.1 1001,227.1 1001,227.1 999,227.1 997,227.0 995,226.9 993,226.8 991,226.7 989,226.6 987,226.5 985,226.4 983,226.3 981,226.2 979,226.1 977,226.0 975,225.9 973,225.8 971,225.7 969,225.6 967,225.5 965,225.4 963,225.3 961,225.5 959,226.0 957,226.7 955,227.4 953,228.1 951,228.7 949,228.9 947,228.5 945,227.9 943,227.3 941,226.8 939,226.2 937,225.6 935,225.1 933,225.1 931,225.6 929,225.7 927,225.4 925,225.1 923,224.9 921,225.0 919,225.4 917,225.8 915,226.2 913,226.6 911,227.0 909,227.4 907,227.8 905,228.3 903,228.7 901,229.1 899,229.3 897,229.1 895,228.6 893,227.8 891,226.9 889,226.0 887,225.1 885,224.2 883,223.7 881,223.8 879,224.1 877,224.4 875,224.7 873,225.1 871,225.4 869,225.7 867,226.1 865,227.0 863,228.4 861,229.6 859,230.3 857,231.0 855,231.8 853,232.6 851,233.3 849,234.1 847,234.9 845,235.6 843,235.4 841,234.3 839,233.1 837,231.9 835,230.8 833,229.6 831,228.4 829,227.3 827,226.5 825,226.1 823,226.3 821,226.8 819,227.3 817,227.8 815,228.3 813,228.9 811,229.1 809,229.0 807,228.9 805,228.9 803,229.1 801,229.3 799,229.8 797,230.7 795,231.3 793,230.9 791,229.8 789,228.6 787,227.5 785,226.3 783,225.1 781,223.9 779,222.8 777,221.8 775,221.7 773,222.2 771,223.0 769,223.7 767,224.4 765,225.0 763,225.7 761,227.1 759,227.8 757,227.6 755,227.4 753,227.2 751,227.2 749,227.6 747,228.1 745,228.5 743,229.0 741,229.5 739,230.0 737,230.4 735,230.3 733,229.6 731,228.7 729,227.9 727,227.1 725,226.2 723,225.4 721,224.5 719,223.6 717,222.8 715,222.5 713,222.5 711,222.5 709,222.6 707,222.7 705,222.7 703,224.0 701,226.3 699,227.5 697,227.7 695,227.9 693,228.2 691,228.4 689,228.6 687,228.8 685,229.0 683,229.2 681,229.4 679,229.6 677,229.9 675,230.1 673,230.2 671,230.2 669,230.1 667,230.0 665,229.9 663,229.8 661,229.7 659,229.6 657,229.6 655,229.5 653,228.3 651,225.9 649,225.0 647,225.7 645,226.8 643,227.9 641,229.0 639,230.1 637,231.2 635,232.3 633,232.5 631,231.9 629,230.3 627,227.8 625,225.2 623,222.6 621,220.1 619,218.6 617,220.9 616,223.3 615,225.8 614,228.5 613,231.3 612,234.2 611,237.3 610,241.2 609,246.4 608,252.6 607,259.6 606,267.4 605,277.2 604,289.1 603,300.2 602,307.1"/>
<polygon fill="#ffb000" points="602,304.9 603,294.8 604,279.4 605,263.7 606,252.0 607,244.4 608,239.0 609,234.6 610,230.8 611,227.6 612,224.7 613,221.9 614,219.2 615,216.7 616,214.3 617,212.1 619,209.9 621,211.3 623,213.6 625,215.9 627,218.2 629,220.5 631,222.4 633,223.8 635,224.0 637,223.1 639,221.9 641,220.8 643,219.7 645,218.6 647,217.5 649,216.6 650,216.4 651,218.5 652,220.6 653,222.8 654,225.0 656,225.1 658,225.2 660,225.4 662,225.5 664,225.6 666,225.7 668,225.9 670,226.0 672,226.1 674,226.1 676,225.9 678,225.8 680,225.6 682,225.4 684,225.2 686,225.1 688,224.9 690,224.7 692,224.5 694,224.3 696,224.2 698,224.0 700,223.8 702,223.4 704,222.8 706,222.3 708,221.8 710,221.2 712,220.7 714,220.1 716,219.7 718,219.6 720,219.7 722,220.0 724,220.6 726,221.3 728,222.1 730,222.9 732,223.6 734,224.4 736,224.9 738,224.8 740,224.6 742,224.4 744,224.1 746,223.9 748,223.6 750,223.4 752,223.4 754,223.6 756,223.9 758,224.2 760,224.5 762,223.5 764,222.6 766,222.3 768,221.5 770,220.5 772,219.6 774,218.7 776,218.2 778,218.6 780,219.7 782,220.8 784,221.9 786,223.1 788,224.2 790,225.3 792,226.4 794,227.3 796,227.2 798,226.6 800,226.0 802,225.9 804,225.7 806,225.5 808,225.4 810,225.3 812,225.2 814,224.6 816,224.0 818,223.4 820,222.9 822,222.3 824,221.8 826,221.7 828,222.1 830,222.9 832,224.0 834,225.2 836,226.4 838,227.5 840,228.7 842,229.9 844,230.7 846,230.5 848,229.9 850,229.4 852,228.8 854,228.2 856,227.7 858,227.1 860,226.8 862,226.8 864,226.5 866,226.2 868,225.9 870,225.6 872,225.2 874,224.9 876,224.6 878,224.3 880,223.9 882,223.7 884,223.9 886,224.7 888,225.6 890,226.5 892,227.4 894,228.3 896,228.9 898,229.3 900,229.2 902,228.9 904,228.5 906,228.0 908,227.6 910,227.2 912,226.8 914,226.4 916,226.0 918,225.6 920,225.2 922,223.4 924,221.9 926,220.5 928,218.9 930,216.9 932,215.9 934,214.9 936,214.9 938,215.3 940,215.7 942,216.1 944,216.5 946,216.9 948,217.2 950,217.5 952,217.5 954,217.4 956,217.3 958,217.2 960,217.1 962,217.4 964,217.8 966,218.2 968,218.6 970,219.1 972,219.5 974,219.9 976,220.2 978,220.3 980,220.4 982,220.5 984,220.6 986,220.7 988,220.8 990,220.9 992,221.0 994,221.1 996,221.2 998,221.3 1000,221.4 1001,221.4 1001,233.4 1000,233.4 998,233.3 996,233.2 994,233.1 992,233.0 990,232.9 988,232.8 986,232.7 984,232.6 982,232.5 980,232.4 978,232.3 976,232.2 974,232.2 972,232.4 970,232.6 968,232.7 966,232.9 964,233.0 962,233.4 960,234.4 958,235.6 956,236.8 954,238.1 952,239.4 950,240.3 948,240.2 946,239.5 944,238.8 942,238.0 940,237.3 938,236.6 936,235.8 934,235.2 932,234.8 930,234.4 928,232.2 926,230.1 924,228.1 922,226.4 920,225.2 918,225.6 916,226.0 914,226.4 912,226.8 910,227.2 908,227.6 906,228.0 904,228.5 902,228.9 900,229.2 898,229.3 896,228.9 894,228.3 892,227.4 890,226.5 888,225.6 886,224.7 884,223.9 882,223.7 880,223.9 878,224.3 876,224.6 874,224.9 872,225.2 870,225.6 868,225.9 866,226.2 864,226.5 862,226.8 860,226.8 858,227.1 856,227.7 854,228.2 852,228.8 850,229.4 848,229.9 846,230.5 844,230.7 842,229.9 840,228.7 838,227.5 836,226.4 834,225.2 832,224.0 830,222.9 828,222.1 826,221.7 824,221.8 822,222.3 820,222.9 818,223.4 816,224.0 814,224.6 812,225.2 810,226.6 808,227.9 806,229.3 804,230.9 802,232.9 800,235.0 798,236.3 796,237.5 794,237.9 792,237.0 790,235.7 788,234.5 786,233.2 784,232.0 782,230.7 780,229.4 778,228.2 776,227.3 774,227.2 772,227.6 770,228.0 768,228.4 766,228.9 764,229.0 762,226.8 760,224.5 758,224.2 756,223.9 754,223.6 752,223.4 750,223.4 748,223.6 746,223.9 744,224.1 742,224.4 740,224.6 738,224.8 736,224.9 734,224.4 732,223.6 730,222.9 728,222.1 726,221.3 724,220.6 722,220.0 720,219.7 718,219.6 716,219.7 714,220.1 712,220.7 710,221.2 708,221.8 706,222.3 704,222.8 702,223.4 700,223.8 698,224.0 696,224.2 694,224.3 692,224.5 690,224.7 688,224.9 686,225.1 684,225.2 682,225.4 680,225.6 678,225.8 676,225.9 674,226.1 672,226.1 670,226.0 668,225.9 666,225.7 664,225.6 662,225.5 660,225.4 658,225.2 656,225.1 654,225.0 653,227.0 652,229.1 651,231.2 650,233.3 649,233.4 647,234.0 645,235.0 643,236.1 641,237.2 639,238.3 637,239.4 635,240.5 633,241.2 631,241.5 629,240.1 627,237.4 625,234.6 623,231.7 621,228.9 619,227.2 617,229.7 616,232.3 615,235.0 614,237.8 613,240.7 612,243.6 611,247.0 610,251.6 609,258.2 608,266.3 607,274.8 606,282.8 605,290.7 604,298.8 603,305.5 602,309.2"/>
<polygon fill="#ff90a0" points="602,307.1 603,300.2 604,289.1 605,277.2 606,267.4 607,259.6 608,252.6 609,246.4 610,241.2 611,237.3 612,234.2 613,231.3 614,228.5 615,225.8 616,223.3 617,220.9 619,218.6 621,220.1 623,222.6 625,225.2 627,227.8 629,230.3 631,231.9 633,232.5 635,232.3 637,231.2 639,230.1 641,229.0 643,227.9 645,226.8 647,225.7 649,225.0 651,224.8 653,224.9 655,225.0 657,225.2 659,225.3 661,225.4 663,225.5 665,225.7 667,225.8 669,225.9 671,226.1 673,226.1 675,226.0 677,225.9 679,225.7 681,225.5 683,225.3 685,225.1 687,225.0 689,224.8 691,224.6 693,224.4 695,224.3 697,224.1 699,223.9 701,223.6 703,223.1 705,222.6 707,222.0 709,221.5 711,220.9 713,220.4 715,219.9 717,219.6 719,219.7 721,219.8 723,220.2 725,220.9 727,221.7 729,222.5 731,223.2 733,224.0 735,224.7 737,224.9 739,224.7 741,224.5 743,224.2 745,224.0 747,223.8 749,223.5 751,223.4 753,223.5 755,223.8 757,224.1 759,224.3 761,225.0 763,226.1 765,226.6 767,226.1 769,225.5 771,224.9 773,224.3 775,223.9 777,224.2 779,225.2 781,226.4 783,227.6 785,228.8 787,230.0 789,231.2 791,232.4 793,233.6 795,233.9 797,233.2 799,232.1 801,230.9 803,229.6 805,228.4 807,227.4 809,226.5 811,225.7 813,224.9 815,224.3 817,223.7 819,223.1 821,222.6 823,222.0 825,221.7 827,221.9 829,222.4 831,223.5 833,224.6 835,225.8 837,227.0 839,228.1 841,229.3 843,230.4 845,230.7 847,230.2 849,229.6 851,229.1 853,228.5 855,228.0 857,227.4 859,226.9 861,226.8 863,226.7 865,226.4 867,226.1 869,225.7 871,225.4 873,225.1 875,224.7 877,224.4 879,224.1 881,223.8 883,223.7 885,224.2 887,225.1 889,226.0 891,226.9 893,227.8 895,228.6 897,229.1 899,229.3 901,229.1 903,228.7 905,228.3 907,227.8 909,227.4 911,227.0 913,226.6 915,226.2 917,225.8 919,225.4 921,225.0 923,224.9 925,225.1 927,225.4 929,225.7 931,225.6 933,225.1 935,225.1 937,225.6 939,226.2 941,226.8 943,227.3 945,227.9 947,228.5 949,228.9 951,228.7 953,228.1 955,227.4 957,226.7 959,226.0 961,225.5 963,225.3 965,225.4 967,225.5 969,225.6 971,225.7 973,225.8 975,225.9 977,226.0 979,226.1 981,226.2 983,226.3 985,226.4 987,226.5 989,226.6 991,226.7 993,226.8 995,226.9 997,227.0 999,227.1 1001,227.1 1001,227.1 999,227.1 997,227.0 995,226.9 993,226.8 991,226.7 989,226.6 987,226.5 985,226.4 983,226.3 981,226.2 979,226.1 977,226.0 975,225.9 973,225.8 971,225.7 969,225.6 967,225.5 965,225.4 963,225.3 961,225.5 959,226.0 957,226.7 955,227.4 953,228.1 951,228.7 949,228.9 947,228.5 945,227.9 943,227.3 941,226.8 939,226.2 937,225.6 935,225.1 933,225.1 931,225.6 929,225.7 927,225.4 925,225.1 923,224.9 921,225.0 919,225.4 917,225.8 915,226.2 913,226.6 911,227.0 909,227.4 907,227.8 905,228.3 903,228.7 901,229.1 899,229.3 897,229.1 895,228.6 893,227.8 891,226.9 889,226.0 887,225.1 885,224.2 883,223.7 881,223.8 879,224.1 877,224.4 875,224.7 873,225.1 871,225.4 869,225.7 867,226.1 865,226.4 863,226.7 861,226.8 859,226.9 857,227.4 855,228.0 853,228.5 851,229.1 849,229.6 847,230.2 845,230.7 843,230.4 841,229.3 839,228.1 837,227.0 835,225.8 833,224.6 831,223.5 829,222.4 827,221.9 825,221.7 823,222.0 821,222.6 819,223.1 817,223.7 815,224.3 813,224.9 811,225.7 809,226.9 807,228.0 805,229.2 803,230.7 801,232.4 799,233.9 797,235.0 795,235.9 793,235.6 791,234.4 789,233.2 787,231.9 785,230.7 783,229.5 781,228.2 779,227.0 777,225.9 775,225.5 773,225.8 771,226.3 769,226.9 767,227.4 765,227.8 763,227.0 761,225.4 759,224.3 757,224.1 755,223.8 753,223.5 751,223.4 749,223.5 747,223.8 745,224.0 743,224.2 741,224.5 739,224.7 737,224.9 735,224.7 733,224.0 731,223.2 729,222.5 727,221.7 725,220.9 723,220.2 721,219.8 719,219.7 717,219.6 715,219.9 713,220.4 711,220.9 709,221.5 707,222.0 705,222.6 703,223.1 701,223.6 699,223.9 697,224.1 695,224.3 693,224.4 691,224.6 689,224.8 687,225.0 685,225.1 683,225.3 681,225.5 679,225.7 677,225.9 675,226.0 673,226.1 671,226.1 669,225.9 667,225.8 665,225.7 663,225.5 661,225.4 659,225.3 657,225.2 655,225.0 653,224.9 651,224.8 649,225.0 647,225.7 645,226.8 643,227.9 641,229.0 639,230.1 637,231.2 635,232.3 633,232.5 631,231.9 629,230.3 627,227.8 625,225.2 623,222.6 621,220.1 619,218.6 617,220.9 616,223.3 615,225.8 614,228.5 613,231.3 612,234.2 611,237.3 610,241.2 609,246.4 608,252.6 607,259.6 606,267.4 605,277.2 604,289.1 603,300.2 602,307.1"/>
<polygon fill="#ffa0b8" points="602,307.1 603,300.2 604,289.1 605,277.2 606,267.4 607,259.6 608,252.6 609,246.4 610,241.2 611,237.3 612,234.2 613,231.3 614,228.5 615,225.8 616,223.3 617,220.9 619,218.6 621,220.1 623,222.6 625,225.2 627,227.8 629,230.3 631,231.9 633,232.5 635,232.3 637,231.2 639,230.1 641,229.0 643,227.9 645,226.8 647,225.7 649,225.0 651,224.8 653,224.9 655,225.0 657,225.2 659,225.3 661,225.4 663,225.5 665,225.7 667,225.8 669,225.9 671,226.1 673,226.1 675,226.0 677,225.9 679,225.7 681,225.5 683,225.3 685,225.1 687,225.0 689,224.8 691,224.6 693,224.4 695,224.3 697,224.1 699,223.9 701,223.6 703,223.1 705,222.6 707,222.0 709,221.5 711,220.9 713,220.4 715,219.9 717,219.6 719,219.7 721,219.8 723,220.2 725,220.9 727,221.7 729,222.5 731,223.2 733,224.0 735,224.7 737,224.9 739,224.7 741,224.5 743,224.2 745,224.0 747,223.8 749,223.5 751,223.4 753,223.5 755,223.8 757,224.1 759,224.3 761,224.6 763,224.9 765,225.0 767,224.4 769,223.7 771,223.0 773,222.2 775,221.7 777,221.8 779,222.8 781,223.9 783,225.1 785,226.3 787,227.5 789,228.6 791,229.8 793,230.9 795,231.3 797,230.7 799,229.8 801,228.9 803,228.1 805,227.3 807,226.6 809,226.0 811,225.5 813,224.9 815,224.3 817,223.7 819,223.1 821,222.6 823,222.0 825,221.7 827,221.9 829,222.4 831,223.5 833,224.6 835,225.8 837,227.0 839,228.1 841,229.3 843,230.4 845,230.7 847,230.2 849,229.6 851,229.1 853,228.5 855,228.0 857,227.4 859,226.9 861,226.8 863,226.7 865,226.4 867,226.1 869,225.7 871,225.4 873,225.1 875,224.7 877,224.4 879,224.1 881,223.8 883,223.7 885,224.2 887,225.1 889,226.0 891,226.9 893,227.8 895,228.6 897,229.1 899,229.3 901,229.1 903,228.7 905,228.3 907,227.8 909,227.4 911,227.0 913,226.6 915,226.2 917,225.8 919,225.4 921,225.0 923,224.9 925,225.1 927,225.4 929,225.7 931,225.6 933,225.1 935,225.1 937,225.6 939,226.2 941,226.8 943,227.3 945,227.9 947,228.5 949,228.9 951,228.7 953,228.1 955,227.4 957,226.7 959,226.0 961,225.6 963,225.4 965,225.6 967,225.7 969,225.9 971,226.1 973,226.2 975,226.4 977,226.5 979,226.6 981,226.7 983,226.8 985,226.9 987,227.0 989,227.1 991,227.2 993,227.3 995,227.4 997,227.5 999,227.6 1001,227.7 1001,231.8 999,231.7 997,231.6 995,231.5 993,231.4 991,231.3 989,231.2 987,231.1 985,231.0 983,230.9 981,230.8 979,230.7 977,230.6 975,230.5 973,229.8 971,229.1 969,228.4 967,227.6 965,226.9 963,226.2 961,225.6 959,226.0 957,226.7 955,227.4 953,228.1 951,228.7 949,228.9 947,228.5 945,227.9 943,227.3 941,226.8 939,226.2 937,225.6 935,225.1 933,225.1 931,225.6 929,225.7 927,225.4 925,225.1 923,224.9 921,225.0 919,225.4 917,225.8 915,226.2 913,226.6 911,227.0 909,227.4 907,227.8 905,228.3 903,228.7 901,229.1 899,229.3 897,229.1 895,228.6 893,227.8 891,226.9 889,226.0 887,225.1 885,224.2 883,223.7 881,223.8 879,224.1 877,224.4 875,224.7 873,225.1 871,225.4 869,225.7 867,226.1 865,226.4 863,226.7 861,226.8 859,226.9 857,227.4 855,228.0 853,228.5 851,229.1 849,229.6 847,230.2 845,230.7 843,230.4 841,229.3 839,228.1 837,227.0 835,225.8 833,224.6 831,223.5 829,222.4 827,221.9 825,221.7 823,222.0 821,222.6 819,223.1 817,223.7 815,224.3 813,224.9 811,225.5 809,226.0 807,226.6 805,227.3 803,228.1 801,228.9 799,229.8 797,230.7 795,231.3 793,230.9 791,229.8 789,228.6 787,227.5 785,226.3 783,225.1 781,223.9 779,222.8 777,221.8 775,221.7 773,222.2 771,223.0 769,223.7 767,224.4 765,225.0 763,224.9 761,224.6 759,224.3 757,224.1 755,223.8 753,223.5 751,223.4 749,223.5 747,223.8 745,224.0 743,224.2 741,224.5 739,224.7 737,224.9 735,224.7 733,224.0 731,223.2 729,222.5 727,221.7 725,220.9 723,220.2 721,219.8 719,219.7 717,219.6 715,219.9 713,220.4 711,220.9 709,221.5 707,222.0 705,222.6 703,223.1 701,223.6 699,223.9 697,224.1 695,224.3 693,224.4 691,224.6 689,224.8 687,225.0 685,225.1 683,225.3 681,225.5 679,225.7 677,225.9 675,226.0 673,226.1 671,226.1 669,225.9 667,225.8 665,225.7 663,225.5 661,225.4 659,225.3 657,225.2 655,225.0 653,224.9 651,224.8 649,225.0 647,225.7 645,226.8 643,227.9 641,229.0 639,230.1 637,231.2 635,232.3 633,232.5 631,231.9 629,230.3 627,227.8 625,225.2 623,222.6 621,220.1 619,218.6 617,220.9 616,223.3 615,225.8 614,228.5 613,231.3 612,234.2 611,237.3 610,241.2 609,246.4 608,252.6 607,259.6 606,267.4 605,277.2 604,289.1 603,300.2 602,307.1"/>
<polygon fill="#ff9ec8" points="602,305.3 603,295.7 604,281.0 605,265.9 606,254.6 607,246.9 608,241.3 609,236.5 610,232.6 611,229.2 612,226.3 613,223.5 614,220.8 615,218.2 616,215.8 617,213.6 619,211.4 621,212.7 623,215.1 625,217.4 627,219.8 629,222.1 631,224.0 633,225.3 635,225.4 637,224.4 639,223.3 641,222.2 643,221.1 645,220.0 647,218.9 649,218.0 651,219.5 653,223.2 655,225.0 657,225.2 659,225.3 661,225.4 663,225.5 665,225.7 667,225.8 669,225.9 671,226.1 673,226.1 675,226.0 677,225.9 679,225.7 681,225.5 683,225.3 685,225.1 687,225.0 689,224.8 691,224.6 693,224.4 695,224.3 697,224.1 699,223.9 701,223.6 703,223.1 705,222.6 707,222.0 709,221.5 711,220.9 713,220.4 715,219.9 717,219.6 719,219.7 721,219.8 723,220.2 725,220.9 727,221.7 729,222.5 731,223.2 733,224.0 735,224.7 737,224.9 739,224.7 741,224.5 743,224.2 745,224.0 747,223.8 749,223.5 751,223.4 753,223.5 755,223.8 757,224.1 759,224.3 761,224.6 763,224.9 765,225.0 767,224.4 769,223.7 771,223.0 773,222.2 775,221.7 777,221.8 779,222.8 781,223.9 783,225.1 785,226.3 787,227.5 789,228.6 791,229.8 793,230.9 795,231.3 797,230.7 799,229.8 801,228.9 803,228.1 805,227.3 807,226.6 809,226.0 811,225.5 813,224.9 815,224.3 817,223.7 819,223.1 821,222.6 823,222.0 825,221.7 827,221.9 829,222.4 831,223.5 833,224.6 835,225.8 837,227.0 839,228.1 841,229.3 843,230.4 845,230.7 847,230.2 849,229.6 851,229.1 853,228.5 855,228.0 857,227.4 859,226.9 861,226.8 863,226.7 865,226.4 867,226.1 869,225.7 871,225.4 873,225.1 875,224.7 877,224.4 879,224.1 881,223.8 883,223.7 885,224.2 887,225.1 889,226.0 891,226.9 893,227.8 895,228.6 897,229.1 899,229.3 901,229.1 903,228.7 905,228.3 907,227.8 909,227.4 911,227.0 913,226.6 915,226.2 917,225.8 919,225.4 921,224.4 923,223.0 925,221.9 927,220.7 929,219.3 931,218.0 933,216.9 935,216.5 937,216.8 939,217.3 941,217.7 943,218.1 945,218.5 947,219.0 949,219.3 951,219.4 953,219.2 955,219.0 957,218.8 959,218.6 961,218.9 963,219.8 965,220.8 967,221.8 969,222.8 971,223.8 973,224.9 975,225.9 977,226.0 979,226.1 981,226.2 983,226.3 985,226.4 987,226.5 989,226.6 991,226.7 993,226.8 995,226.9 997,227.0 999,227.1 1001,227.1 1001,227.1 999,227.1 997,227.0 995,226.9 993,226.8 991,226.7 989,226.6 987,226.5 985,226.4 983,226.3 981,226.2 979,226.1 977,226.0 975,225.9 973,226.7 971,227.5 969,228.3 967,229.1 965,229.9 963,230.8 961,232.0 959,233.5 957,234.6 955,235.8 953,237.0 951,238.1 949,238.5 947,238.0 945,237.2 943,236.5 941,235.8 939,235.1 937,234.4 935,233.7 933,233.3 931,233.1 929,232.1 927,230.2 925,228.4 923,226.8 921,225.6 919,225.4 917,225.8 915,226.2 913,226.6 911,227.0 909,227.4 907,227.8 905,228.3 903,228.7 901,229.1 899,229.3 897,229.1 895,228.6 893,227.8 891,226.9 889,226.0 887,225.1 885,224.2 883,223.7 881,223.8 879,224.1 877,224.4 875,224.7 873,225.1 871,225.4 869,225.7 867,226.1 865,226.4 863,226.7 861,226.8 859,226.9 857,227.4 855,228.0 853,228.5 851,229.1 849,229.6 847,230.2 845,230.7 843,230.4 841,229.3 839,228.1 837,227.0 835,225.8 833,224.6 831,223.5 829,222.4 827,221.9 825,221.7 823,222.0 821,222.6 819,223.1 817,223.7 815,224.3 813,224.9 811,225.5 809,226.0 807,226.6 805,227.3 803,228.1 801,228.9 799,229.8 797,230.7 795,231.3 793,230.9 791,229.8 789,228.6 787,227.5 785,226.3 783,225.1 781,223.9 779,222.8 777,221.8 775,221.7 773,222.2 771,223.0 769,223.7 767,224.4 765,225.0 763,224.9 761,224.6 759,224.3 757,224.1 755,223.8 753,223.5 751,223.4 749,223.5 747,223.8 745,224.0 743,224.2 741,224.5 739,224.7 737,224.9 735,224.7 733,224.0 731,223.2 729,222.5 727,221.7 725,220.9 723,220.2 721,219.8 719,219.7 717,219.6 715,219.9 713,220.4 711,220.9 709,221.5 707,222.0 705,222.6 703,223.1 701,223.6 699,223.9 697,224.1 695,224.3 693,224.4 691,224.6 689,224.8 687,225.0 685,225.1 683,225.3 681,225.5 679,225.7 677,225.9 675,226.0 673,226.1 671,226.1 669,225.9 667,225.8 665,225.7 663,225.5 661,225.4 659,225.3 657,225.2 655,225.0 653,226.7 651,230.1 649,232.0 647,232.6 645,233.6 643,234.7 641,235.8 639,236.9 637,238.0 635,239.1 633,239.8 631,239.9 629,238.4 627,235.8 625,233.0 623,230.2 621,227.4 619,225.8 617,228.3 616,230.8 615,233.5 614,236.3 613,239.1 612,242.0 611,245.4 610,249.8 609,256.2 608,264.0 607,272.2 606,280.2 605,288.5 604,297.2 603,304.6 602,308.9"/>
<polygon fill="#ffd8ec" points="602,306.2 603,298.0 604,285.2 605,271.8 606,261.3 607,253.5 608,247.2 609,241.7 610,237.0 611,233.4 612,230.4 613,227.6 614,224.8 615,222.2 616,219.7 617,217.4 619,215.1 621,216.6 623,219.0 625,221.5 627,224.0 629,226.4 631,228.1 633,229.1 635,229.0 637,228.0 639,226.9 641,225.7 643,224.6 645,223.5 647,222.4 649,221.6 651,222.3 653,224.1 655,225.0 657,225.2 659,225.3 661,225.4 663,225.5 665,225.7 667,225.8 669,225.9 671,226.1 673,226.1 675,226.0 677,225.9 679,225.7 681,225.5 683,225.3 685,225.1 687,225.0 689,224.8 691,224.6 693,224.4 695,224.3 697,224.1 699,223.9 701,223.6 703,223.1 705,222.6 707,222.0 709,221.5 711,220.9 713,220.4 715,219.9 717,219.6 719,219.7 721,219.8 723,220.2 725,220.9 727,221.7 729,222.5 731,223.2 733,224.0 735,224.7 737,224.9 739,224.7 741,224.5 743,224.2 745,224.0 747,223.8 749,223.5 751,223.4 753,223.5 755,223.8 757,224.1 759,224.3 761,224.6 763,224.9 765,225.0 767,224.4 769,223.7 771,223.0 773,222.2 775,221.7 777,221.8 779,222.8 781,223.9 783,225.1 785,226.3 787,227.5 789,228.6 791,229.8 793,230.9 795,231.3 797,230.7 799,229.8 801,228.9 803,228.1 805,227.3 807,226.6 809,226.0 811,225.5 813,224.9 815,224.3 817,223.7 819,223.1 821,222.6 823,222.0 825,221.7 827,221.9 829,222.4 831,223.5 833,224.6 835,225.8 837,227.0 839,228.1 841,229.3 843,230.4 845,230.7 847,230.2 849,229.6 851,229.1 853,228.5 855,228.0 857,227.4 859,226.9 861,226.8 863,226.7 865,226.4 867,226.1 869,225.7 871,225.4 873,225.1 875,224.7 877,224.4 879,224.1 881,223.8 883,223.7 885,224.2 887,225.1 889,226.0 891,226.9 893,227.8 895,228.6 897,229.1 899,229.3 901,229.1 903,228.7 905,228.3 907,227.8 909,227.4 911,227.0 913,226.6 915,226.2 917,225.8 919,225.4 921,224.7 923,224.0 925,223.6 927,223.2 929,222.6 931,221.9 933,221.2 935,221.0 937,221.4 939,221.9 941,222.4 943,222.9 945,223.4 947,223.9 949,224.3 951,224.2 953,223.8 955,223.4 957,222.9 959,222.5 961,222.3 963,222.7 965,223.2 967,223.7 969,224.3 971,224.8 973,225.3 975,225.9 977,226.0 979,226.1 981,226.2 983,226.3 985,226.4 987,226.5 989,226.6 991,226.7 993,226.8 995,226.9 997,227.0 999,227.1 1001,227.1 1001,227.1 999,227.1 997,227.0 995,226.9 993,226.8 991,226.7 989,226.6 987,226.5 985,226.4 983,226.3 981,226.2 979,226.1 977,226.0 975,225.9 973,226.3 971,226.7 969,227.1 967,227.5 965,227.9 963,228.4 961,229.1 959,230.2 957,231.1 955,232.1 953,233.1 951,234.0 949,234.2 947,233.8 945,233.1 943,232.5 941,231.8 939,231.2 937,230.6 935,230.0 933,229.7 931,229.8 929,229.2 927,228.1 925,227.0 923,226.0 921,225.4 919,225.4 917,225.8 915,226.2 913,226.6 911,227.0 909,227.4 907,227.8 905,228.3 903,228.7 901,229.1 899,229.3 897,229.1 895,228.6 893,227.8 891,226.9 889,226.0 887,225.1 885,224.2 883,223.7 881,223.8 879,224.1 877,224.4 875,224.7 873,225.1 871,225.4 869,225.7 867,226.1 865,226.4 863,226.7 861,226.8 859,226.9 857,227.4 855,228.0 853,228.5 851,229.1 849,229.6 847,230.2 845,230.7 843,230.4 841,229.3 839,228.1 837,227.0 835,225.8 833,224.6 831,223.5 829,222.4 827,221.9 825,221.7 823,222.0 821,222.6 819,223.1 817,223.7 815,224.3 813,224.9 811,225.5 809,226.0 807,226.6 805,227.3 803,228.1 801,228.9 799,229.8 797,230.7 795,231.3 793,230.9 791,229.8 789,228.6 787,227.5 785,226.3 783,225.1 781,223.9 779,222.8 777,221.8 775,221.7 773,222.2 771,223.0 769,223.7 767,224.4 765,225.0 763,224.9 761,224.6 759,224.3 757,224.1 755,223.8 753,223.5 751,223.4 749,223.5 747,223.8 745,224.0 743,224.2 741,224.5 739,224.7 737,224.9 735,224.7 733,224.0 731,223.2 729,222.5 727,221.7 725,220.9 723,220.2 721,219.8 719,219.7 717,219.6 715,219.9 713,220.4 711,220.9 709,221.5 707,222.0 705,222.6 703,223.1 701,223.6 699,223.9 697,224.1 695,224.3 693,224.4 691,224.6 689,224.8 687,225.0 685,225.1 683,225.3 681,225.5 679,225.7 677,225.9 675,226.0 673,226.1 671,226.1 669,225.9 667,225.8 665,225.7 663,225.5 661,225.4 659,225.3 657,225.2 655,225.0 653,225.9 651,227.8 649,228.9 647,229.6 645,230.6 643,231.7 641,232.8 639,233.9 637,235.0 635,236.1 633,236.6 631,236.4 629,234.8 627,232.3 625,229.6 623,226.9 621,224.2 619,222.6 617,225.0 616,227.5 615,230.1 614,232.9 613,235.7 612,238.6 611,241.8 610,246.0 609,251.9 608,259.0 607,266.7 606,274.6 605,283.5 604,293.6 603,302.6 602,308.1"/>
<polygon fill="#046804" points="207,494.2 209,494.3 211,494.4 213,494.5 215,494.7 217,494.8 219,494.9 221,495.0 223,495.1 225,495.2 227,495.3 229,495.5 231,495.6 233,495.7 235,495.8 237,495.9 239,496.0 241,496.1 243,496.3 245,496.4 247,496.5 249,496.6 251,496.7 253,496.8 255,497.0 257,497.1 259,497.2 261,497.3 263,497.4 265,497.5 267,497.6 269,497.8 271,497.9 273,497.9 275,495.4 276,491.3 277,485.5 278,478.3 279,469.8 280,461.2 281,453.6 282,448.4 282,459.0 281,476.3 280,495.3 279,510.3 278,520.5 277,526.8 276,529.9 275,531.0 273,531.3 271,531.2 269,531.1 267,531.0 265,531.0 263,530.9 261,530.8 259,530.7 257,530.6 255,530.5 253,530.4 251,530.3 249,530.3 247,530.2 245,530.1 243,530.0 241,529.9 239,529.8 237,529.7 235,529.6 233,529.5 231,529.5 229,529.4 227,529.3 225,529.2 223,529.1 221,529.0 219,528.9 217,528.8 215,528.8 213,528.7 211,528.6 209,528.5 207,528.4"/>
<polygon fill="#1010e8" points="207,499.4 209,499.4 211,499.6 213,499.7 215,499.8 217,499.9 219,500.0 221,500.1 223,500.2 225,500.3 227,500.4 229,500.5 231,500.7 233,500.8 235,500.9 237,501.0 239,501.1 241,501.2 243,501.3 245,501.4 247,501.5 249,501.7 251,501.8 253,501.9 255,502.0 257,502.1 259,502.2 261,502.3 263,502.4 265,502.5 267,502.7 269,502.8 271,502.9 273,502.9 275,500.7 276,497.1 277,491.7 278,484.6 279,475.9 280,466.3 281,457.0 282,450.0 282,457.4 281,472.9 280,490.2 279,504.2 278,514.2 277,520.6 276,524.1 275,525.7 273,526.3 271,526.2 269,526.1 267,526.0 265,525.9 263,525.9 261,525.8 259,525.7 257,525.6 255,525.5 253,525.4 251,525.3 249,525.2 247,525.1 245,525.0 243,524.9 241,524.8 239,524.7 237,524.7 235,524.6 233,524.5 231,524.4 229,524.3 227,524.2 225,524.1 223,524.0 221,523.9 219,523.8 217,523.7 215,523.6 213,523.5 211,523.5 209,523.4 207,523.3"/>
<polygon fill="#f01010" points="207,502.1 209,502.2 211,502.3 213,502.4 215,502.5 217,502.6 219,502.7 221,502.8 223,502.9 225,503.0 227,503.2 229,503.3 231,503.4 233,503.5 235,503.6 237,503.7 239,503.8 241,503.9 243,504.0 245,504.1 247,504.2 249,504.3 251,504.5 253,504.6 255,504.7 257,504.8 259,504.9 261,505.0 263,505.1 265,505.2 267,505.3 269,505.4 271,505.5 273,505.6 275,503.6 276,500.2 277,495.0 278,488.0 279,479.1 280,469.0 281,458.8 282,450.8 282,456.6 281,471.3 280,487.8 279,501.4 278,511.2 277,517.7 276,521.4 275,523.2 273,524.0 271,523.9 269,523.8 267,523.7 265,523.6 263,523.5 261,523.4 259,523.3 257,523.2 255,523.1 253,523.0 251,522.9 249,522.9 247,522.8 245,522.7 243,522.6 241,522.5 239,522.4 237,522.3 235,522.2 233,522.1 231,522.0 229,521.9 227,521.8 225,521.7 223,521.6 221,521.5 219,521.4 217,521.3 215,521.3 213,521.2 211,521.1 209,521.0 207,520.9"/>
<polygon fill="#ffa800" points="207,508.6 209,508.7 211,508.8 213,508.9 215,509.0 217,509.1 219,509.2 221,509.3 223,509.4 225,509.5 227,509.6 229,509.7 231,509.8 233,509.9 235,510.0 237,510.1 239,510.2 241,510.3 243,510.4 245,510.5 247,510.6 249,510.7 251,510.8 253,510.9 255,511.1 257,511.2 259,511.3 261,511.4 263,511.5 265,511.6 267,511.7 269,511.8 271,511.9 273,511.9 275,510.3 276,507.5 277,502.8 278,496.0 279,486.8 280,475.5 281,463.1 282,452.8 282,454.7 281,467.2 280,481.7 279,494.1 278,503.6 277,510.3 276,514.5 275,516.8 273,517.9 271,517.9 269,517.8 267,517.7 265,517.6 263,517.5 261,517.4 259,517.3 257,517.2 255,517.1 253,517.0 251,516.9 249,516.8 247,516.7 245,516.6 243,516.5 241,516.4 239,516.3 237,516.2 235,516.1 233,516.0 231,515.9 229,515.8 227,515.7 225,515.6 223,515.5 221,515.4 219,515.3 217,515.2 215,515.1 213,515.0 211,514.9 209,514.8 207,514.7"/>
<polygon fill="#046804" points="285,450.2 286,455.4 287,459.5 288,462.1 289,465.5 290,470.9 291,476.4 292,480.2 293,482.4 294,484.4 295,487.1 296,491.2 297,496.2 298,500.9 299,504.0 301,504.4 303,501.9 305,499.4 307,496.9 309,494.4 311,491.8 313,489.4 315,488.3 317,489.1 319,490.4 321,491.7 323,493.0 325,494.4 327,495.7 329,497.0 331,498.3 333,499.1 335,499.4 337,499.7 339,500.0 341,500.3 343,500.6 345,500.8 347,500.4 349,499.6 351,498.7 353,497.8 355,496.9 357,496.0 359,495.1 361,494.2 363,493.3 365,492.8 367,493.3 369,494.4 371,495.5 373,496.6 375,497.7 377,498.8 379,499.9 381,500.6 383,500.5 385,500.0 387,499.5 389,499.0 391,498.5 393,498.0 395,497.5 397,497.0 399,496.4 401,495.7 403,494.8 405,493.9 407,493.0 409,492.1 411,491.2 413,490.3 415,489.4 417,488.5 419,487.9 421,488.3 423,489.4 425,490.5 427,491.6 429,492.7 431,493.8 433,495.0 435,496.0 437,496.6 439,497.1 441,497.6 443,498.1 445,498.6 447,499.1 449,499.6 451,500.1 453,500.5 455,500.5 457,499.5 459,498.1 461,496.8 463,495.5 465,494.2 467,492.8 469,491.5 471,490.3 473,489.9 475,490.8 477,491.9 479,493.0 481,494.1 483,495.2 485,496.3 487,497.4 489,498.4 491,498.6 493,498.0 495,497.3 497,496.7 499,496.0 501,495.4 503,494.7 505,494.0 507,493.4 509,492.7 511,492.0 513,491.4 515,490.7 517,490.1 519,489.4 521,488.7 523,488.1 525,487.7 527,488.3 529,489.2 531,490.1 533,491.0 535,491.9 537,492.8 539,493.7 541,494.7 543,495.6 545,496.5 547,497.3 549,497.7 551,497.2 553,496.5 555,495.8 557,495.0 559,494.3 561,493.6 563,492.9 565,492.1 567,491.4 569,490.7 571,489.9 573,489.2 575,488.5 577,487.9 579,488.1 581,489.1 583,490.2 585,491.3 587,492.4 589,493.5 591,494.5 593,493.1 594,489.1 595,482.2 596,473.5 597,463.5 598,452.8 599,442.7 600,435.1 600,441.3 599,456.5 598,476.4 597,496.0 596,511.7 595,521.4 594,525.6 593,526.9 591,527.4 589,527.8 587,528.2 585,528.7 583,529.1 581,529.5 579,529.9 577,530.3 575,530.7 573,531.1 571,531.5 569,531.9 567,532.3 565,532.7 563,533.1 561,533.0 559,532.5 557,532.1 555,531.6 553,531.1 551,530.7 549,530.2 547,529.7 545,529.3 543,528.8 541,528.4 539,527.9 537,527.6 535,528.0 533,528.6 531,529.2 529,529.8 527,530.5 525,531.1 523,531.7 521,532.3 519,532.9 517,533.6 515,534.2 513,534.8 511,535.0 509,534.7 507,534.1 505,533.6 503,533.1 501,532.5 499,532.0 497,531.5 495,531.0 493,530.4 491,529.9 489,529.4 487,528.8 485,528.3 483,527.8 481,527.2 479,526.8 477,526.9 475,527.5 473,528.1 471,528.8 469,529.4 467,530.0 465,530.7 463,531.3 461,531.9 459,532.6 457,533.0 455,533.0 453,532.6 451,532.3 449,531.9 447,531.5 445,531.2 443,530.8 441,530.4 439,530.1 437,529.7 435,529.3 433,529.0 431,528.6 429,528.2 427,527.9 425,527.5 423,527.1 421,526.8 419,527.0 417,527.9 415,529.1 413,530.2 411,531.4 409,532.5 407,533.4 405,532.5 403,529.5 401,526.4 399,524.8 397,524.7 395,524.8 393,524.9 391,525.0 389,525.1 387,525.2 385,525.4 383,525.5 381,525.6 379,525.7 377,525.8 375,525.9 373,526.1 371,526.2 369,526.3 367,526.4 365,526.9 363,527.8 361,529.0 359,530.2 357,531.3 355,532.4 353,532.7 351,532.0 349,531.0 347,530.0 345,529.0 343,528.0 341,527.1 339,526.1 337,525.1 335,524.1 333,523.1 331,522.3 329,521.6 327,520.9 325,520.2 323,519.6 321,518.9 319,518.2 317,517.6 315,517.3 313,518.6 311,520.9 309,523.3 307,525.7 305,528.1 303,530.5 301,532.8 299,532.5 298,529.7 297,526.0 296,522.5 295,519.5 294,516.8 293,514.2 292,511.4 291,508.3 290,504.7 289,500.7 288,495.9 287,488.3 286,475.3 285,460.0"/>
<polygon fill="#1010e8" points="285,451.6 286,458.4 287,463.9 288,467.2 289,470.8 290,475.9 291,481.2 292,484.8 293,487.2 294,489.2 295,492.0 296,495.9 297,500.6 298,505.2 299,508.3 301,508.6 303,506.2 305,503.7 307,501.2 309,498.7 311,496.2 313,493.8 315,492.6 317,493.3 319,494.6 321,495.8 323,497.0 325,498.2 327,499.5 329,500.7 331,501.9 333,502.7 335,503.1 337,503.5 339,503.9 341,504.3 343,504.7 345,505.0 347,504.9 349,504.3 351,503.7 353,503.0 355,502.2 357,501.3 359,500.4 361,499.4 363,498.5 365,497.9 367,498.3 369,499.1 371,500.1 373,501.0 375,501.9 377,502.8 379,503.8 381,504.4 383,504.2 385,503.8 387,503.3 389,502.9 391,502.5 393,502.0 395,501.6 397,501.1 399,500.7 401,500.3 403,500.0 405,499.7 407,499.1 409,498.2 411,497.3 413,496.3 415,495.4 417,494.4 419,493.8 421,494.1 423,495.0 425,496.0 427,497.0 429,498.1 431,499.1 433,500.1 435,501.0 437,501.6 439,502.1 441,502.5 443,503.0 445,503.5 447,504.0 449,504.4 451,504.9 453,505.4 455,505.4 457,504.5 459,503.3 461,502.1 463,500.9 465,499.6 467,498.4 469,497.2 471,496.0 473,495.7 475,496.3 477,497.1 479,498.0 481,499.0 483,500.1 485,501.1 487,502.1 489,503.0 491,503.3 493,502.9 495,502.4 497,501.9 499,501.4 501,500.9 503,500.4 505,500.0 507,499.5 509,499.0 511,498.5 513,497.9 515,497.2 517,496.6 519,495.9 521,495.3 523,494.6 525,494.3 527,494.6 529,495.3 531,496.0 533,496.7 535,497.3 537,498.1 539,498.9 541,499.7 543,500.5 545,501.4 547,502.2 549,502.6 551,502.2 553,501.7 555,501.1 557,500.6 559,500.0 561,499.5 563,498.9 565,498.2 567,497.5 569,496.9 571,496.2 573,495.5 575,494.8 577,494.2 579,494.3 581,495.1 583,496.0 585,496.9 587,497.8 589,498.7 591,499.5 593,498.2 594,494.6 595,488.1 596,479.2 597,468.4 598,456.4 599,444.8 600,436.0 600,440.4 599,454.5 598,472.8 597,491.1 596,505.9 595,515.5 594,520.1 593,521.8 591,522.5 589,522.7 587,522.9 585,523.0 583,523.2 581,523.4 579,523.6 577,523.9 575,524.4 573,524.8 571,525.3 569,525.7 567,526.2 565,526.7 563,527.0 561,527.1 559,526.8 557,526.5 555,526.2 553,525.9 551,525.7 549,525.3 547,524.9 545,524.4 543,523.8 541,523.3 539,522.8 537,522.4 535,522.5 533,522.9 531,523.2 529,523.6 527,524.0 525,524.4 523,524.9 521,525.5 519,526.1 517,526.7 515,527.3 513,527.9 511,528.2 509,527.9 507,527.6 505,527.3 503,526.9 501,526.6 499,526.3 497,525.9 495,525.6 493,525.2 491,524.9 489,524.4 487,523.8 485,523.2 483,522.6 481,521.9 479,521.4 477,521.3 475,521.6 473,522.0 471,522.6 469,523.3 467,524.1 465,524.8 463,525.6 461,526.3 459,527.1 457,527.7 455,527.8 453,527.5 451,527.1 449,526.7 447,526.3 445,526.0 443,525.6 441,525.2 439,524.8 437,524.4 435,524.0 433,523.5 431,523.0 429,522.6 427,522.1 425,521.6 423,521.1 421,520.7 419,520.7 417,521.6 415,522.7 413,523.8 411,525.0 409,526.1 407,527.0 405,526.3 403,523.9 401,521.5 399,520.2 397,520.2 395,520.4 393,520.6 391,520.8 389,520.9 387,521.1 385,521.3 383,521.5 381,521.6 379,521.6 377,521.5 375,521.4 373,521.3 371,521.3 369,521.2 367,521.1 365,521.4 363,522.3 361,523.4 359,524.6 357,525.7 355,526.7 353,527.1 351,526.7 349,526.0 347,525.3 345,524.5 343,523.7 341,522.8 339,521.9 337,521.0 335,520.1 333,519.3 331,518.4 329,517.7 327,516.9 325,516.1 323,515.3 321,514.5 319,513.8 317,513.0 315,512.7 313,513.9 311,516.2 309,518.7 307,521.1 305,523.5 303,525.9 301,528.3 299,527.9 298,525.1 297,521.2 296,517.5 295,514.4 294,511.6 293,509.1 292,506.4 291,503.2 290,499.3 289,495.1 288,490.5 287,483.7 286,472.1 285,458.4"/>
<polygon fill="#f01010" points="285,452.2 286,459.6 287,465.6 288,469.2 289,472.9 290,478.0 291,483.1 292,486.7 293,489.1 294,491.2 295,494.0 296,497.8 297,502.4 298,506.9 299,510.0 301,510.3 303,507.9 305,505.4 307,502.9 309,500.4 311,497.9 313,495.5 315,494.4 317,495.1 319,496.2 321,497.4 323,498.6 325,499.8 327,501.0 329,502.2 331,503.3 333,504.1 335,504.6 337,505.0 339,505.5 341,505.9 343,506.4 345,506.7 347,506.6 349,506.2 351,505.7 353,505.1 355,504.4 357,503.4 359,502.5 361,501.5 363,500.6 365,499.9 367,500.2 369,501.1 371,501.9 373,502.8 375,503.6 377,504.5 379,505.3 381,505.9 383,505.7 385,505.3 387,504.9 389,504.5 391,504.0 393,503.6 395,503.2 397,502.8 399,502.4 401,502.2 403,502.1 405,502.0 407,501.5 409,500.6 411,499.7 413,498.7 415,497.8 417,496.8 419,496.1 421,496.4 423,497.3 425,498.3 427,499.2 429,500.2 431,501.1 433,502.1 435,503.0 437,503.6 439,504.1 441,504.5 443,505.0 445,505.4 447,505.9 449,506.4 451,506.8 453,507.3 455,507.3 457,506.5 459,505.4 461,504.2 463,503.0 465,501.8 467,500.6 469,499.5 471,498.4 473,498.0 475,498.5 477,499.2 479,500.1 481,501.0 483,502.0 485,503.0 487,504.0 489,504.9 491,505.1 493,504.8 495,504.4 497,504.0 499,503.6 501,503.2 503,502.8 505,502.3 507,501.9 509,501.5 511,501.1 513,500.4 515,499.8 517,499.1 519,498.4 521,497.7 523,497.0 525,496.6 527,496.9 529,497.5 531,498.1 533,498.6 535,499.2 537,499.8 539,500.6 541,501.4 543,502.2 545,503.0 547,503.8 549,504.2 551,503.9 553,503.4 555,502.9 557,502.4 559,502.0 561,501.5 563,500.9 565,500.3 567,499.6 569,498.9 571,498.3 573,497.6 575,496.9 577,496.4 579,496.4 581,497.1 583,498.0 585,498.8 587,499.6 589,500.4 591,501.1 593,499.9 594,496.4 595,490.1 596,481.1 597,470.0 598,457.6 599,445.5 600,436.3 600,440.1 599,453.8 598,471.7 597,489.5 596,504.0 595,513.6 594,518.3 593,520.1 591,520.8 589,521.0 587,521.1 585,521.2 583,521.3 581,521.4 579,521.5 577,521.8 575,522.3 573,522.7 571,523.2 569,523.7 567,524.2 565,524.6 563,525.0 561,525.1 559,524.9 557,524.7 555,524.4 553,524.2 551,524.0 549,523.7 547,523.3 545,522.7 543,522.2 541,521.6 539,521.0 537,520.6 535,520.7 533,520.9 531,521.2 529,521.4 527,521.7 525,522.0 523,522.5 521,523.1 519,523.6 517,524.2 515,524.8 513,525.3 511,525.6 509,525.4 507,525.2 505,524.9 503,524.6 501,524.4 499,524.1 497,523.8 495,523.6 493,523.3 491,523.0 489,522.5 487,521.9 485,521.3 483,520.6 481,519.9 479,519.4 477,519.2 475,519.4 473,519.7 471,520.3 469,521.1 467,521.9 465,522.6 463,523.4 461,524.2 459,525.0 457,525.6 455,525.8 453,525.6 451,525.2 449,524.8 447,524.4 445,524.0 443,523.6 441,523.2 439,522.8 437,522.4 435,522.0 433,521.5 431,521.0 429,520.4 427,519.9 425,519.4 423,518.8 421,518.3 419,518.4 417,519.3 415,520.4 413,521.5 411,522.5 409,523.6 407,524.6 405,524.0 403,521.9 401,519.6 399,518.5 397,518.6 395,518.8 393,519.0 391,519.2 389,519.4 387,519.6 385,519.8 383,520.0 381,520.1 379,520.0 377,519.9 375,519.7 373,519.6 371,519.4 369,519.3 367,519.1 365,519.4 363,520.3 361,521.3 359,522.5 357,523.6 355,524.6 353,525.0 351,524.7 349,524.1 347,523.5 345,522.8 343,522.0 341,521.2 339,520.3 337,519.5 335,518.7 333,517.8 331,517.0 329,516.2 327,515.4 325,514.5 323,513.7 321,512.9 319,512.1 317,511.3 315,510.9 313,512.2 311,514.5 309,516.9 307,519.4 305,521.8 303,524.2 301,526.6 299,526.2 298,523.4 297,519.4 296,515.6 295,512.4 294,509.7 293,507.2 292,504.5 291,501.3 290,497.2 289,493.0 288,488.5 287,482.0 286,470.9 285,457.8"/>
<polygon fill="#ffb000" points="285,453.0 286,461.2 287,467.9 288,471.9 289,475.7 290,480.7 291,485.6 292,489.2 293,491.6 294,493.8 295,496.5 296,500.3 297,504.8 298,509.2 299,512.3 301,512.6 303,510.2 305,507.7 307,505.2 309,502.7 311,500.3 313,497.9 315,496.7 317,497.3 319,498.5 321,499.6 323,500.7 325,501.9 327,503.0 329,504.1 331,505.2 333,506.1 335,506.6 337,507.1 339,507.6 341,508.1 343,508.6 345,509.0 347,509.0 349,508.7 351,508.3 353,507.9 355,507.2 357,506.2 359,505.3 361,504.3 363,503.3 365,502.7 367,502.9 369,503.6 371,504.4 373,505.1 375,505.9 377,506.6 379,507.4 381,507.9 383,507.7 385,507.3 387,507.0 389,506.6 391,506.2 393,505.8 395,505.4 397,505.0 399,504.6 401,504.6 403,504.9 405,505.1 407,504.8 409,503.8 411,502.9 413,501.9 415,500.9 417,500.0 419,499.2 421,499.5 423,500.3 425,501.2 427,502.1 429,503.0 431,503.9 433,504.8 435,505.6 437,506.2 439,506.7 441,507.1 443,507.6 445,508.1 447,508.5 449,509.0 451,509.4 453,509.8 455,509.9 457,509.2 459,508.1 461,507.0 463,505.9 465,504.7 467,503.6 469,502.5 471,501.4 473,501.0 475,501.4 477,502.0 479,502.8 481,503.7 483,504.6 485,505.6 487,506.5 489,507.3 491,507.7 493,507.4 495,507.1 497,506.8 499,506.5 501,506.1 503,505.8 505,505.5 507,505.2 509,504.9 511,504.5 513,503.8 515,503.1 517,502.4 519,501.6 521,500.9 523,500.2 525,499.7 527,499.8 529,500.2 531,500.6 533,501.1 535,501.5 537,502.0 539,502.7 541,503.4 543,504.2 545,505.0 547,505.8 549,506.2 551,505.9 553,505.5 555,505.1 557,504.7 559,504.3 561,503.8 563,503.3 565,502.7 567,502.0 569,501.4 571,500.8 573,500.1 575,499.5 577,498.9 579,498.9 581,499.6 583,500.3 585,501.0 587,501.7 589,502.4 591,503.1 593,501.9 594,498.6 595,492.4 596,483.4 597,471.9 598,459.0 599,446.3 600,436.7 600,439.8 599,453.2 598,470.7 597,488.2 596,502.5 595,512.0 594,516.9 593,518.8 591,519.5 589,519.6 587,519.6 585,519.7 583,519.7 581,519.8 579,519.8 577,520.1 575,520.6 573,521.1 571,521.5 569,522.0 567,522.5 565,523.0 563,523.4 561,523.5 559,523.4 557,523.2 555,523.0 553,522.8 551,522.6 549,522.4 547,522.0 545,521.4 543,520.8 541,520.3 539,519.7 537,519.2 535,519.2 533,519.3 531,519.5 529,519.6 527,519.8 525,520.0 523,520.5 521,521.0 519,521.6 517,522.1 515,522.7 513,523.2 511,523.5 509,523.3 507,523.1 505,522.9 503,522.7 501,522.5 499,522.3 497,522.1 495,521.9 493,521.7 491,521.4 489,521.0 487,520.3 485,519.7 483,519.0 481,518.3 479,517.7 477,517.5 475,517.6 473,517.8 471,518.4 469,519.2 467,520.0 465,520.8 463,521.6 461,522.5 459,523.3 457,524.0 455,524.2 453,524.0 451,523.6 449,523.2 447,522.8 445,522.4 443,522.0 441,521.6 439,521.2 437,520.8 435,520.3 433,519.8 431,519.2 429,518.6 427,518.1 425,517.5 423,516.9 421,516.4 419,516.4 417,517.3 415,518.4 413,519.5 411,520.5 409,521.6 407,522.5 405,522.1 403,520.1 401,518.1 399,517.1 397,517.2 395,517.4 393,517.6 391,517.9 389,518.1 387,518.3 385,518.5 383,518.7 381,518.9 379,518.7 377,518.5 375,518.3 373,518.1 371,517.9 369,517.7 367,517.5 365,517.7 363,518.5 361,519.6 359,520.7 357,521.8 355,522.8 353,523.3 351,523.0 349,522.5 347,522.0 345,521.4 343,520.6 341,519.8 339,519.0 337,518.2 335,517.4 333,516.6 331,515.8 329,515.0 327,514.1 325,513.3 323,512.4 321,511.6 319,510.7 317,509.9 315,509.5 313,510.7 311,513.0 309,515.5 307,517.9 305,520.4 303,522.8 301,525.1 299,524.8 298,521.9 297,517.9 296,514.0 295,510.8 294,508.1 293,505.6 292,503.0 291,499.7 290,495.5 289,491.2 288,486.8 287,480.5 286,469.9 285,457.3"/>
<polygon fill="#ffa0b8" points="285,455.3 286,465.8 287,474.5 288,479.7 289,483.8 290,488.4 291,493.0 292,496.4 293,498.9 294,501.3 295,504.0 296,507.5 297,511.7 298,515.9 299,518.8 301,519.2 303,516.8 305,514.3 307,511.9 309,509.4 311,506.9 313,504.6 315,503.4 317,503.9 319,504.9 321,505.8 323,506.8 325,507.8 327,508.8 329,509.8 331,510.8 333,511.6 335,512.3 337,512.9 339,513.6 341,514.2 343,514.9 345,515.5 347,515.8 349,515.9 351,516.0 353,516.0 355,515.4 357,514.4 359,513.3 361,512.3 363,511.3 365,510.5 367,510.5 369,511.0 371,511.4 373,511.9 375,512.4 377,512.8 379,513.3 381,513.6 383,513.5 385,513.2 387,512.9 389,512.6 391,512.3 393,512.0 395,511.7 397,511.4 399,511.2 401,511.7 403,512.9 405,514.0 407,514.0 409,513.1 411,512.1 413,511.1 415,510.0 417,509.0 419,508.2 421,508.3 423,509.0 425,509.7 427,510.5 429,511.2 431,511.9 433,512.6 435,513.3 437,513.8 439,514.3 441,514.7 443,515.1 445,515.5 447,516.0 449,516.4 451,516.8 453,517.2 455,517.4 457,516.9 459,516.0 461,515.1 463,514.1 465,513.1 467,512.2 469,511.2 471,510.3 473,509.8 475,509.9 477,510.1 479,510.6 481,511.3 483,512.1 485,512.9 487,513.7 489,514.5 491,514.9 493,514.9 495,514.8 497,514.8 499,514.7 501,514.7 503,514.7 505,514.6 507,514.6 509,514.5 511,514.4 513,513.9 515,513.2 517,512.5 519,511.8 521,511.1 523,510.4 525,509.9 527,509.8 529,509.8 531,509.9 533,510.0 535,510.1 537,510.3 539,510.9 541,511.5 543,512.2 545,512.9 547,513.5 549,514.0 551,513.9 553,513.8 555,513.7 557,513.6 559,513.4 561,513.3 563,513.0 565,512.4 567,511.9 569,511.3 571,510.7 573,510.2 575,509.6 577,509.1 579,509.0 581,509.3 583,509.6 585,510.0 587,510.3 589,510.7 591,511.0 593,510.0 594,507.4 595,501.8 596,492.6 597,479.7 598,464.6 599,449.6 600,438.2 600,438.2 599,449.6 598,464.6 597,479.7 596,492.6 595,501.8 594,507.4 593,510.0 591,511.0 589,510.7 587,510.3 585,510.0 583,509.6 581,509.3 579,509.0 577,509.1 575,509.6 573,510.2 571,510.7 569,511.3 567,511.9 565,512.4 563,513.0 561,513.3 559,513.4 557,513.6 555,513.7 553,513.8 551,513.9 549,514.0 547,513.5 545,512.9 543,512.2 541,511.5 539,510.9 537,510.8 535,511.0 533,511.3 531,511.7 529,512.1 527,512.5 525,513.1 523,514.1 521,515.2 519,516.4 517,517.5 515,518.6 513,519.7 511,520.6 509,520.8 507,520.7 505,520.5 503,520.4 501,520.3 499,520.1 497,520.0 495,519.9 493,519.7 491,519.6 489,519.1 487,518.4 485,517.7 483,517.0 481,516.3 479,515.6 477,515.4 475,515.4 473,515.5 471,516.1 469,516.9 467,517.8 465,518.6 463,519.5 461,520.3 459,521.2 457,522.0 455,522.2 453,522.0 451,521.6 449,521.2 447,520.8 445,520.4 443,520.0 441,519.6 439,519.2 437,518.8 435,518.3 433,517.7 431,517.1 429,516.5 427,515.9 425,515.3 423,514.7 421,514.1 419,514.1 417,514.9 415,516.0 413,517.1 411,518.1 409,519.2 407,520.1 405,519.8 403,518.1 401,516.2 399,515.4 397,515.5 395,515.8 393,516.0 391,516.3 389,516.5 387,516.7 385,517.0 383,517.2 381,517.4 379,517.2 377,516.9 375,516.6 373,516.3 371,516.0 369,515.7 367,515.5 365,515.6 363,516.5 361,517.5 359,518.6 357,519.7 355,520.7 353,521.2 351,521.0 349,520.6 347,520.3 345,519.7 343,519.0 341,518.2 339,517.5 337,516.7 335,516.0 333,515.2 331,514.4 329,513.5 327,512.6 325,511.7 323,510.8 321,509.9 319,509.0 317,508.2 315,507.7 313,509.0 311,511.3 309,513.7 307,516.2 305,518.6 303,521.1 301,523.4 299,523.1 298,520.2 297,516.1 296,512.2 295,508.8 294,506.1 293,503.7 292,501.1 291,497.7 290,493.5 289,489.1 288,484.8 287,478.8 286,468.7 285,456.8"/>
<polygon fill="#ff9ec8" points="285,455.1 286,465.4 287,473.9 288,479.0 289,483.1 290,487.8 291,492.3 292,495.8 293,498.3 294,500.6 295,503.3 296,506.9 297,511.1 298,515.3 299,518.3 301,518.6 303,516.2 305,513.8 307,511.3 309,508.8 311,506.4 313,504.0 315,502.8 317,503.3 319,504.3 321,505.3 323,506.3 325,507.3 327,508.3 329,509.3 331,510.3 333,511.1 335,511.8 337,512.4 339,513.0 341,513.7 343,514.3 345,514.9 347,515.2 349,515.3 351,515.3 353,515.3 355,514.7 357,513.7 359,512.6 361,511.6 363,510.6 365,509.8 367,509.9 369,510.3 371,510.8 373,511.3 375,511.8 377,512.3 379,512.8 381,513.1 383,513.0 385,512.7 387,512.4 389,512.1 391,511.7 393,511.4 395,511.1 397,510.8 399,510.6 401,511.0 403,512.2 405,513.2 407,513.2 409,512.3 411,511.3 413,510.3 415,509.3 417,508.2 419,507.5 421,507.6 423,508.3 425,509.0 427,509.7 429,510.5 431,511.2 433,512.0 435,512.7 437,513.2 439,513.6 441,514.0 443,514.5 445,514.9 447,515.3 449,515.7 451,516.2 453,516.6 455,516.7 457,516.2 459,515.4 461,514.4 463,513.4 465,512.4 467,511.4 469,510.5 471,509.5 473,509.0 475,509.1 477,509.4 479,509.9 481,510.7 483,511.5 485,512.3 487,513.1 489,513.9 491,514.2 493,514.2 495,514.1 497,514.1 499,514.0 501,513.9 503,513.9 505,513.8 507,513.7 509,513.7 511,513.5 513,513.0 515,512.3 517,511.6 519,510.9 521,510.2 523,509.5 525,509.0 527,508.9 529,509.0 531,509.1 533,509.2 535,509.4 537,509.6 539,510.2 541,510.8 543,511.5 545,512.2 547,512.9 549,513.3 551,513.3 553,513.1 555,513.0 557,512.8 559,512.7 561,512.5 563,512.2 565,511.6 567,511.1 569,510.5 571,509.9 573,509.3 575,508.8 577,508.2 579,508.1 581,508.5 583,508.8 585,509.2 587,509.6 589,510.0 591,510.3 593,509.3 594,506.6 595,501.0 596,491.8 597,479.1 598,464.1 599,449.3 600,438.1 600,439.4 599,452.4 598,469.3 597,486.2 596,500.2 595,509.6 594,514.7 593,516.8 591,517.6 589,517.5 587,517.5 585,517.4 583,517.4 581,517.3 579,517.3 577,517.6 575,518.0 573,518.5 571,519.0 569,519.6 567,520.1 565,520.6 563,521.0 561,521.1 559,521.1 557,521.0 555,520.9 553,520.7 551,520.6 549,520.5 547,520.0 545,519.4 543,518.8 541,518.2 539,517.4 537,516.5 535,516.0 533,515.6 531,515.1 529,514.7 527,514.2 525,513.8 523,513.7 521,513.7 519,513.8 517,513.8 515,513.9 513,513.9 511,513.8 509,513.7 507,513.7 505,513.8 503,513.9 501,513.9 499,514.0 497,514.1 495,514.1 493,514.2 491,514.2 489,513.9 487,513.1 485,512.3 483,511.5 481,510.7 479,509.9 477,509.4 475,509.1 473,509.0 471,509.5 469,510.5 467,511.4 465,512.4 463,513.4 461,514.4 459,515.4 457,516.2 455,516.7 453,516.6 451,516.2 449,515.7 447,515.3 445,514.9 443,514.5 441,514.0 439,513.6 437,513.2 435,512.7 433,512.0 431,511.2 429,510.5 427,509.7 425,509.0 423,508.3 421,507.6 419,507.5 417,508.2 415,509.3 413,510.3 411,511.3 409,512.3 407,513.2 405,513.2 403,512.2 401,511.0 399,510.6 397,510.8 395,511.1 393,511.4 391,511.7 389,512.1 387,512.4 385,512.7 383,513.0 381,513.1 379,512.8 377,512.3 375,511.8 373,511.3 371,510.8 369,510.3 367,509.9 365,509.8 363,510.6 361,511.6 359,512.6 357,513.7 355,514.7 353,515.3 351,515.3 349,515.3 347,515.2 345,514.9 343,514.3 341,513.7 339,513.0 337,512.4 335,511.8 333,511.1 331,510.3 329,509.3 327,508.3 325,507.3 323,506.3 321,505.3 319,504.3 317,503.3 315,502.8 313,504.0 311,506.4 309,508.8 307,511.3 305,513.8 303,516.2 301,518.6 299,518.3 298,515.3 297,511.1 296,506.9 295,503.3 294,500.6 293,498.3 292,495.8 291,492.3 290,487.8 289,483.1 288,479.0 287,473.9 286,465.4 285,455.1"/>
<polygon fill="#046804" points="655,450.0 656,455.1 657,458.9 658,461.1 659,464.1 660,469.7 661,476.9 662,482.7 663,485.8 664,487.5 665,489.5 666,492.4 667,496.0 668,500.0 669,503.9 670,507.5 671,509.9 673,509.8 675,506.9 677,503.8 679,500.6 681,497.5 683,494.4 685,492.3 687,492.6 689,493.7 691,495.0 693,496.2 695,497.4 697,498.6 699,499.9 701,501.0 703,501.5 705,500.9 707,500.0 709,499.2 711,498.3 713,497.4 715,496.5 717,495.6 719,494.8 721,493.9 723,493.0 725,492.1 727,491.3 729,490.4 731,489.5 733,488.6 735,487.9 737,488.2 739,489.2 741,490.3 743,491.4 745,492.5 747,493.6 749,494.7 751,495.8 753,496.8 755,497.6 757,498.3 759,499.0 761,499.6 763,500.3 765,501.0 767,501.7 769,502.3 771,502.6 773,501.9 775,500.8 777,499.7 779,498.6 781,497.5 783,496.4 785,495.3 787,494.2 789,493.2 791,492.9 793,493.8 795,495.0 797,496.2 799,497.4 801,498.6 803,499.8 805,500.8 807,501.2 809,501.3 811,501.5 813,501.7 815,501.9 817,502.0 819,502.2 821,502.4 823,502.5 825,502.7 827,502.8 829,502.1 831,500.1 833,497.8 835,495.5 837,493.2 839,491.0 841,488.9 843,488.4 845,489.6 847,491.2 849,492.7 851,494.3 853,495.8 855,497.4 857,498.9 859,500.3 861,501.1 863,501.3 865,501.5 867,501.6 869,501.8 871,502.0 873,502.1 875,502.3 877,502.5 879,502.6 881,502.8 883,502.6 885,501.2 887,499.2 889,497.2 891,495.2 893,493.2 895,491.2 897,490.0 899,490.6 901,491.8 903,493.1 905,494.3 907,495.6 909,496.8 911,497.5 912,496.4 913,492.7 914,485.7 915,474.6 916,459.7 917,444.4 918,432.2 919,424.6 919,435.6 918,456.0 917,480.3 916,501.1 915,515.2 914,522.8 913,526.0 912,526.9 911,527.3 909,527.8 907,528.3 905,528.9 903,529.4 901,530.0 899,530.5 897,531.0 895,531.6 893,532.1 891,532.7 889,533.2 887,533.7 885,534.3 883,534.8 881,535.0 879,534.6 877,533.9 875,533.3 873,532.7 871,532.0 869,531.4 867,530.7 865,530.1 863,529.4 861,528.8 859,528.1 857,527.5 855,526.9 853,526.9 851,527.4 849,528.0 847,528.6 845,529.2 843,529.8 841,530.5 839,531.1 837,531.7 835,532.3 833,532.9 831,533.5 829,534.0 827,533.9 825,533.4 823,532.9 821,532.4 819,531.9 817,531.4 815,530.9 813,530.4 811,529.9 809,529.4 807,528.9 805,528.5 803,528.2 801,528.0 799,527.8 797,527.6 795,527.6 793,527.9 791,528.4 789,529.0 787,529.6 785,530.2 783,530.8 781,531.5 779,532.1 777,532.7 775,533.1 773,532.9 771,532.5 769,532.0 767,531.6 765,531.1 763,530.7 761,530.3 759,529.8 757,529.4 755,529.0 753,528.5 751,528.1 749,527.7 747,527.2 745,526.8 743,526.7 741,527.0 739,527.4 737,527.8 735,528.2 733,528.6 731,529.0 729,529.4 727,529.8 725,530.2 723,530.2 721,529.8 719,529.4 717,529.0 715,528.6 713,528.2 711,527.8 709,527.4 707,527.0 705,526.5 703,525.9 701,525.1 699,524.3 697,523.5 695,522.7 693,521.9 691,521.1 689,520.3 687,519.5 685,519.4 683,521.3 681,523.8 679,526.3 677,528.8 675,531.4 673,533.8 671,534.0 670,532.2 669,529.6 668,526.8 667,524.1 666,521.3 665,518.5 664,515.8 663,512.9 662,509.6 661,505.7 660,501.0 659,495.6 658,488.7 657,479.2 656,466.9 655,455.3"/>
<polygon fill="#1010e8" points="655,450.8 656,456.9 657,462.0 658,465.3 659,468.8 660,474.4 661,481.2 662,486.7 663,489.9 664,491.8 665,493.8 666,496.7 667,500.3 668,504.0 669,507.8 670,511.2 671,513.5 673,513.4 675,510.6 677,507.5 679,504.5 681,501.5 683,498.5 685,496.3 687,496.6 689,497.7 691,498.9 693,500.0 695,501.2 697,502.4 699,503.5 701,504.6 703,505.1 705,504.7 707,504.1 709,503.4 711,502.7 713,502.0 715,501.3 717,500.6 719,500.0 721,499.3 723,498.6 725,497.8 727,497.0 729,496.2 731,495.4 733,494.6 735,494.0 737,494.1 739,494.9 741,495.8 743,496.7 745,497.6 747,498.6 749,499.6 751,500.7 753,501.7 755,502.5 757,503.2 759,503.9 761,504.5 763,505.2 765,505.8 767,506.4 769,507.1 771,507.4 773,506.8 775,506.0 777,505.0 779,504.0 781,502.9 783,501.9 785,500.9 787,499.9 789,498.9 791,498.6 793,499.3 795,500.2 797,501.2 799,502.3 801,503.3 803,504.3 805,505.1 807,505.5 809,505.7 811,505.9 813,506.1 815,506.3 817,506.5 819,506.7 821,506.9 823,507.1 825,507.3 827,507.5 829,506.9 831,505.1 833,503.1 835,501.1 837,499.0 839,497.0 841,495.1 843,494.6 845,495.6 847,496.8 849,498.0 851,499.2 853,500.5 855,501.8 857,503.2 859,504.5 861,505.2 863,505.5 865,505.7 867,506.0 869,506.2 871,506.5 873,506.7 875,507.0 877,507.2 879,507.4 881,507.6 883,507.4 885,506.1 887,504.4 889,502.6 891,500.8 893,499.0 895,497.3 897,496.2 899,496.6 901,497.6 903,498.5 905,499.5 907,500.5 909,501.5 911,502.0 912,501.0 913,497.7 914,491.3 915,480.7 916,465.9 917,449.8 918,435.8 919,426.3 919,433.9 918,452.4 917,474.9 916,494.9 915,509.1 914,517.2 913,521.0 912,522.3 911,522.8 909,523.1 907,523.4 905,523.7 903,523.9 901,524.2 899,524.4 897,524.8 895,525.4 893,526.2 891,526.9 889,527.7 887,528.4 885,529.2 883,529.8 881,530.1 879,529.7 877,529.1 875,528.5 873,527.9 871,527.4 869,526.8 867,526.2 865,525.6 863,525.1 861,524.5 859,523.8 857,523.0 855,522.3 853,522.0 851,522.2 849,522.5 847,522.7 845,523.0 843,523.3 841,523.9 839,524.7 837,525.6 835,526.5 833,527.4 831,528.2 829,528.9 827,528.9 825,528.5 823,528.1 821,527.6 819,527.1 817,526.6 815,526.1 813,525.6 811,525.1 809,524.6 807,524.1 805,523.6 803,523.2 801,522.8 799,522.4 797,522.0 795,521.7 793,521.7 791,522.0 789,522.6 787,523.3 785,524.0 783,524.7 781,525.3 779,526.0 777,526.7 775,527.3 773,527.3 771,527.1 769,526.7 767,526.2 765,525.7 763,525.2 761,524.8 759,524.4 757,524.0 755,523.6 753,523.3 751,522.9 749,522.4 747,521.9 745,521.3 743,521.1 741,521.1 739,521.3 737,521.5 735,521.8 733,522.2 731,522.7 729,523.2 727,523.6 725,524.1 723,524.2 721,524.1 719,523.9 717,523.7 715,523.5 713,523.3 711,523.1 709,522.9 707,522.7 705,522.4 703,522.0 701,521.2 699,520.4 697,519.5 695,518.7 693,517.8 691,516.9 689,516.1 687,515.2 685,515.1 683,517.0 681,519.6 679,522.2 677,524.8 675,527.5 673,529.9 671,530.1 670,528.2 669,525.5 668,522.5 667,519.6 666,516.7 665,513.9 664,511.3 663,508.6 662,505.3 661,501.1 660,496.0 659,490.6 658,484.3 657,476.0 656,465.0 655,454.5"/>
<polygon fill="#f01010" points="655,451.1 656,457.6 657,463.2 658,466.9 659,470.7 660,476.3 661,482.9 662,488.3 663,491.5 664,493.5 665,495.6 666,498.4 667,501.9 668,505.6 669,509.3 670,512.7 671,514.9 673,514.8 675,512.0 677,509.0 679,506.0 681,503.0 683,500.1 685,498.0 687,498.2 689,499.3 691,500.5 693,501.6 695,502.7 697,503.9 699,505.0 701,506.1 703,506.6 705,506.3 707,505.7 709,505.1 711,504.5 713,503.9 715,503.3 717,502.6 719,502.0 721,501.4 723,500.8 725,500.1 727,499.4 729,498.6 731,497.8 733,497.0 735,496.4 737,496.5 739,497.2 741,498.0 743,498.8 745,499.7 747,500.6 749,501.6 751,502.7 753,503.9 755,504.8 757,505.7 759,506.6 761,507.3 763,507.9 765,508.5 767,509.1 769,509.7 771,510.1 773,509.6 775,508.9 777,507.9 779,507.0 781,506.0 783,505.0 785,504.0 787,503.1 789,502.2 791,501.8 793,502.3 795,503.1 797,504.1 799,505.0 801,505.9 803,506.7 805,507.4 807,507.7 809,507.9 811,508.0 813,508.1 815,508.2 817,508.4 819,508.5 821,508.7 823,508.9 825,509.1 827,509.3 829,508.8 831,507.1 833,505.2 835,503.2 837,501.3 839,499.3 841,497.5 843,497.0 845,497.9 847,498.9 849,500.0 851,501.1 853,502.2 855,503.5 857,504.8 859,506.0 861,506.8 863,507.1 865,507.3 867,507.6 869,507.9 871,508.1 873,508.4 875,508.6 877,508.9 879,509.2 881,509.4 883,509.1 885,507.9 887,506.2 889,504.5 891,502.8 893,501.1 895,499.4 897,498.3 899,498.7 901,499.5 903,500.4 905,501.3 907,502.2 909,503.1 911,503.5 912,502.5 913,499.4 914,493.1 915,482.7 916,468.0 917,451.6 918,437.0 919,426.8 919,433.4 918,451.2 917,473.1 916,492.8 915,507.0 914,515.4 913,519.3 912,520.8 911,521.3 909,521.5 907,521.7 905,521.9 903,522.0 901,522.2 899,522.4 897,522.7 895,523.3 893,524.1 891,525.0 889,525.8 887,526.6 885,527.4 883,528.1 881,528.3 879,527.9 877,527.4 875,526.8 873,526.3 871,525.7 869,525.2 867,524.6 865,524.0 863,523.5 861,522.9 859,522.2 857,521.4 855,520.6 853,520.2 851,520.3 849,520.5 847,520.6 845,520.7 843,520.9 841,521.5 839,522.4 837,523.4 835,524.3 833,525.3 831,526.3 829,527.0 827,527.1 825,526.7 823,526.3 821,525.8 819,525.3 817,524.9 815,524.4 813,523.9 811,523.4 809,522.9 807,522.4 805,522.0 803,521.5 801,521.0 799,520.5 797,520.1 795,519.7 793,519.7 791,519.9 789,520.4 787,521.1 785,521.9 783,522.6 781,523.3 779,524.0 777,524.7 775,525.3 773,525.4 771,525.3 769,524.9 767,524.4 765,523.9 763,523.4 761,522.9 759,522.5 757,522.1 755,521.8 753,521.4 751,520.9 749,520.4 747,519.8 745,519.3 743,518.9 741,518.9 739,519.0 737,519.1 735,519.3 733,519.8 731,520.3 729,520.8 727,521.3 725,521.8 723,522.0 721,521.9 719,521.8 717,521.7 715,521.5 713,521.4 711,521.3 709,521.2 707,521.1 705,520.9 703,520.5 701,519.8 699,518.9 697,518.0 695,517.1 693,516.2 691,515.4 689,514.5 687,513.6 685,513.5 683,515.4 681,518.0 679,520.7 677,523.3 675,526.0 673,528.5 671,528.7 670,526.8 669,524.0 668,520.9 667,517.9 666,514.9 665,512.1 664,509.6 663,506.9 662,503.7 661,499.4 660,494.1 659,488.7 658,482.7 657,474.7 656,464.3 655,454.1"/>
<polygon fill="#ffa000" points="655,452.7 656,461.0 657,469.1 658,474.9 659,479.9 660,485.4 661,491.3 662,496.1 663,499.4 664,501.7 665,504.0 666,506.8 667,510.1 668,513.4 669,516.8 670,519.8 671,521.9 673,521.8 675,519.1 677,516.3 679,513.5 681,510.7 683,507.9 685,505.9 687,506.0 689,507.0 691,508.0 693,509.0 695,510.1 697,511.1 699,512.1 701,513.1 703,513.7 705,513.7 707,513.5 709,513.3 711,513.0 713,512.8 715,512.6 717,512.3 719,512.1 721,511.8 723,511.6 725,511.1 727,510.5 729,509.9 731,509.3 733,508.6 735,508.1 737,508.0 739,508.3 741,508.6 743,509.0 745,509.7 747,510.4 749,511.2 751,511.9 753,512.5 755,513.0 757,513.4 759,513.9 761,514.4 763,514.9 765,515.5 767,516.0 769,516.6 771,516.9 773,516.8 775,516.3 777,515.5 779,514.7 781,513.8 783,512.9 785,512.1 787,511.2 789,510.4 791,510.0 793,510.1 795,510.6 797,511.3 799,512.0 801,512.8 803,513.5 805,514.2 807,514.7 809,515.1 811,515.5 813,515.8 815,516.2 817,516.6 819,517.2 821,517.4 823,517.7 825,518.1 827,518.3 829,518.0 831,516.8 833,515.4 835,513.9 837,512.5 839,511.0 841,509.7 843,509.1 845,509.4 847,509.9 849,510.4 851,510.8 853,511.3 855,512.1 857,513.2 859,514.2 861,514.9 863,515.4 865,515.8 867,516.2 869,516.6 871,517.0 873,517.4 875,517.8 877,518.2 879,518.6 881,518.9 883,518.7 885,517.7 887,516.5 889,515.2 891,513.9 893,512.7 895,511.4 897,510.5 899,510.6 901,510.9 903,511.3 905,511.6 907,512.0 909,512.3 911,512.4 912,511.7 913,509.4 914,504.3 915,494.9 916,480.4 917,462.4 918,444.1 919,430.1 919,430.1 918,444.1 917,462.4 916,480.4 915,494.9 914,504.3 913,509.4 912,511.7 911,512.4 909,512.3 907,512.0 905,511.6 903,511.3 901,510.9 899,510.6 897,510.5 895,511.4 893,512.7 891,513.9 889,515.2 887,516.5 885,517.7 883,518.7 881,518.9 879,518.6 877,518.2 875,517.8 873,517.4 871,517.0 869,516.6 867,516.2 865,515.8 863,515.4 861,514.9 859,514.2 857,513.2 855,512.1 853,511.3 851,510.8 849,510.4 847,509.9 845,509.4 843,509.1 841,509.7 839,511.0 837,512.5 835,513.9 833,515.4 831,516.8 829,518.0 827,518.3 825,518.1 823,517.7 821,517.4 819,517.2 817,517.4 815,517.5 813,517.7 811,517.8 809,517.8 807,517.9 805,517.9 803,517.9 801,517.8 799,517.5 797,517.0 795,516.5 793,516.3 791,516.4 789,516.8 787,517.6 785,518.4 783,519.1 781,519.9 779,520.7 777,521.5 775,522.1 773,522.3 771,522.3 769,521.9 767,521.4 765,520.9 763,520.4 761,519.9 759,518.9 757,517.3 755,515.8 753,514.2 751,512.5 749,511.2 747,510.4 745,509.7 743,509.0 741,508.6 739,508.3 737,508.0 735,508.1 733,508.6 731,509.3 729,509.9 727,510.5 725,511.1 723,511.6 721,511.8 719,512.1 717,512.3 715,512.6 713,512.8 711,513.0 709,513.3 707,513.5 705,513.7 703,513.7 701,513.1 699,512.1 697,511.1 695,510.1 693,509.0 691,508.0 689,507.0 687,506.0 685,505.9 683,507.9 681,510.7 679,513.5 677,516.3 675,519.1 673,521.8 671,521.9 670,519.8 669,516.8 668,513.4 667,510.1 666,506.8 665,504.0 664,501.7 663,499.4 662,496.1 661,491.3 660,485.4 659,479.9 658,474.9 657,469.1 656,461.0 655,452.7"/>
<polygon fill="#ffb000" points="655,451.6 656,458.5 657,464.8 658,469.1 659,473.2 660,478.8 661,485.2 662,490.5 663,493.7 664,495.7 665,497.9 666,500.8 667,504.2 668,507.8 669,511.4 670,514.7 671,516.9 673,516.8 675,514.0 677,511.0 679,508.1 681,505.1 683,502.2 685,500.1 687,500.4 689,501.4 691,502.5 693,503.6 695,504.7 697,505.8 699,506.9 701,508.0 703,508.6 705,508.3 707,507.8 709,507.3 711,506.8 713,506.3 715,505.8 717,505.3 719,504.8 721,504.3 723,503.8 725,503.2 727,502.4 729,501.7 731,501.0 733,500.2 735,499.6 737,499.7 739,500.3 741,500.9 743,501.6 745,502.4 747,503.3 749,504.2 751,505.8 753,508.0 755,510.0 757,511.9 759,513.8 761,515.0 763,515.5 765,516.1 767,516.6 769,517.2 771,517.5 773,517.4 775,516.9 777,516.2 779,515.3 781,514.5 783,513.6 785,512.8 787,511.9 789,511.1 791,510.7 793,510.8 795,511.3 797,511.9 799,512.6 801,513.0 803,513.1 805,513.2 807,513.0 809,512.7 811,512.4 813,512.1 815,511.8 817,511.5 819,511.1 821,511.1 823,511.3 825,511.6 827,511.7 829,511.2 831,509.7 833,507.9 835,506.0 837,504.2 839,502.4 841,500.7 843,500.1 845,500.8 847,501.7 849,502.7 851,503.6 853,504.5 855,505.6 857,506.9 859,508.1 861,508.8 863,509.1 865,509.4 867,509.6 869,509.9 871,510.2 873,510.5 875,510.8 877,511.1 879,511.3 881,511.5 883,511.3 885,510.1 887,508.5 889,506.9 891,505.3 893,503.6 895,502.0 897,501.0 899,501.2 901,502.0 903,502.7 905,503.5 907,504.2 909,505.0 911,505.3 912,504.4 913,501.4 914,495.4 915,485.2 916,470.5 917,453.8 918,438.4 919,427.5 919,432.9 918,450.3 917,471.7 916,491.1 915,505.4 914,513.9 913,517.9 912,519.5 911,520.1 909,520.3 907,520.4 905,520.4 903,520.5 901,520.6 899,520.7 897,520.9 895,521.6 893,522.5 891,523.4 889,524.2 887,525.1 885,526.0 883,526.7 881,526.9 879,526.5 877,526.0 875,525.4 873,524.9 871,524.4 869,523.8 867,523.3 865,522.7 863,522.2 861,521.6 859,521.0 857,520.1 855,519.3 853,518.8 851,518.8 849,518.8 847,518.8 845,518.8 843,518.9 841,519.5 839,520.5 837,521.5 835,522.5 833,523.6 831,524.6 829,525.5 827,525.6 825,525.2 823,524.7 821,524.3 819,523.5 817,522.5 815,521.4 813,520.3 811,519.3 809,518.3 807,517.3 805,516.2 803,515.0 801,513.6 799,512.6 797,511.9 795,511.3 793,510.8 791,510.7 789,511.1 787,511.9 785,512.8 783,513.6 781,514.5 779,515.3 777,516.2 775,516.9 773,517.4 771,517.5 769,517.2 767,516.6 765,516.1 763,515.5 761,515.0 759,515.1 757,516.0 755,516.9 753,517.8 751,518.6 749,518.8 747,518.1 745,517.6 743,517.2 741,517.1 739,517.1 737,517.1 735,517.3 733,517.8 731,518.3 729,518.9 727,519.4 725,519.9 723,520.1 721,520.1 719,520.0 717,520.0 715,519.9 713,519.9 711,519.8 709,519.8 707,519.7 705,519.6 703,519.3 701,518.6 699,517.7 697,516.8 695,515.9 693,515.0 691,514.0 689,513.1 687,512.2 685,512.1 683,514.0 681,516.7 679,519.4 677,522.1 675,524.8 673,527.3 671,527.5 670,525.5 669,522.7 668,519.6 667,516.5 666,513.5 665,510.7 664,508.2 663,505.6 662,502.3 661,497.9 660,492.6 659,487.1 658,481.3 657,473.7 656,463.7 655,453.9"/>
<polygon fill="#ffa0b8" points="655,452.8 656,461.3 657,469.5 658,475.5 659,480.5 660,486.0 661,491.9 662,496.7 663,499.9 664,502.2 665,504.6 666,507.4 667,510.6 668,514.0 669,517.3 670,520.3 671,522.4 673,522.3 675,519.6 677,516.8 679,514.0 681,511.2 683,508.4 685,506.4 687,506.6 689,507.6 691,508.6 693,509.6 695,510.6 697,511.6 699,512.6 701,513.5 703,514.2 705,514.2 707,514.1 709,513.8 711,513.6 713,513.4 715,513.2 717,513.0 719,512.8 721,512.6 723,512.3 725,511.9 727,511.3 729,510.7 731,510.0 733,509.4 735,508.9 737,508.8 739,509.1 741,509.4 743,509.8 745,510.3 747,511.1 749,511.8 751,512.5 753,513.1 755,513.6 757,514.0 759,514.5 761,515.0 763,515.5 765,516.1 767,516.6 769,517.2 771,517.5 773,517.4 775,516.9 777,516.2 779,515.3 781,514.5 783,513.6 785,512.8 787,511.9 789,511.1 791,510.7 793,510.8 795,511.3 797,511.9 799,512.6 801,513.5 803,514.1 805,514.8 807,515.2 809,515.6 811,516.0 813,516.4 815,516.8 817,517.2 819,517.6 821,518.0 823,518.3 825,518.6 827,518.9 829,518.6 831,517.4 833,516.0 835,514.5 837,513.1 839,511.7 841,510.3 843,509.7 845,510.0 847,510.4 849,510.9 851,511.3 853,511.8 855,512.5 857,513.6 859,514.6 861,515.2 863,515.7 865,516.1 867,516.5 869,516.9 871,517.3 873,517.7 875,518.1 877,518.5 879,518.9 881,519.2 883,518.9 885,517.9 887,516.7 889,515.4 891,514.1 893,512.9 895,511.6 897,510.7 899,510.7 901,511.0 903,511.4 905,511.7 907,512.0 909,512.4 911,512.5 912,511.7 913,509.4 914,504.4 915,495.0 916,480.5 917,462.4 918,444.1 919,430.1 919,430.1 918,444.1 917,462.4 916,480.5 915,495.0 914,504.4 913,509.7 912,512.0 911,512.8 909,512.8 907,512.6 905,512.4 903,512.3 901,512.1 899,511.9 897,512.1 895,513.1 893,514.4 891,515.7 889,517.1 887,518.4 885,519.7 883,520.7 881,521.0 879,520.8 877,520.5 875,520.1 873,519.8 871,519.5 869,519.1 867,518.8 865,518.4 863,518.1 861,517.7 859,517.1 857,516.2 855,515.4 853,514.9 851,514.7 849,514.6 847,514.5 845,514.5 843,514.5 841,515.2 839,516.5 837,517.9 835,519.2 833,520.6 831,521.9 829,523.0 827,523.3 825,523.0 823,522.7 821,522.4 819,521.9 817,521.0 815,520.1 813,519.2 811,518.4 809,517.5 807,516.7 805,515.8 803,514.7 801,513.5 799,512.6 797,511.9 795,511.3 793,510.8 791,510.7 789,511.1 787,511.9 785,512.8 783,513.6 781,514.5 779,515.3 777,516.2 775,516.9 773,517.4 771,517.5 769,517.2 767,516.6 765,516.1 763,515.5 761,515.0 759,514.9 757,515.4 755,516.0 753,516.5 751,516.9 749,516.8 747,516.1 745,515.5 743,515.1 741,514.9 739,514.8 737,514.7 735,514.9 733,515.4 731,516.0 729,516.5 727,517.1 725,517.6 723,517.9 721,517.9 719,518.0 717,518.0 715,518.0 713,518.0 711,518.1 709,518.1 707,518.1 705,518.1 703,517.8 701,517.2 699,516.2 697,515.3 695,514.4 693,513.4 691,512.5 689,511.5 687,510.6 685,510.5 683,512.4 681,515.1 679,517.8 677,520.6 675,523.3 673,525.9 671,526.0 670,524.0 669,521.1 668,518.0 667,514.8 666,511.8 665,508.9 664,506.5 663,504.0 662,500.7 661,496.2 660,490.7 659,485.2 658,479.6 657,472.5 656,463.0 655,453.6"/>
<polygon fill="#ff9ec8" points="655,452.7 656,461.0 657,469.1 658,474.9 659,479.9 660,485.4 661,491.3 662,496.1 663,499.4 664,501.7 665,504.0 666,506.8 667,510.1 668,513.4 669,516.8 670,519.8 671,521.9 673,521.8 675,519.1 677,516.3 679,513.5 681,510.7 683,507.9 685,505.9 687,506.0 689,507.0 691,508.0 693,509.0 695,510.1 697,511.1 699,512.1 701,513.1 703,513.7 705,513.7 707,513.5 709,513.3 711,513.0 713,512.8 715,512.6 717,512.3 719,512.1 721,511.8 723,511.6 725,511.1 727,510.5 729,509.9 731,509.3 733,508.6 735,508.1 737,508.0 739,508.3 741,508.6 743,509.0 745,509.7 747,510.4 749,511.2 751,511.9 753,512.7 755,513.3 757,513.9 759,514.4 761,515.0 763,515.5 765,516.1 767,516.6 769,517.2 771,517.5 773,517.4 775,516.9 777,516.2 779,515.3 781,514.5 783,513.6 785,512.8 787,511.9 789,511.1 791,510.7 793,510.8 795,511.3 797,511.9 799,512.6 801,513.3 803,514.0 805,514.6 807,515.0 809,515.4 811,515.7 813,516.0 815,516.4 817,516.7 819,517.1 821,517.4 823,517.8 825,518.0 827,518.3 829,518.0 831,516.8 833,515.3 835,513.8 837,512.3 839,510.9 841,509.5 843,508.9 845,509.2 847,509.7 849,510.2 851,510.6 853,511.1 855,511.9 857,513.0 859,514.0 861,514.7 863,515.1 865,515.5 867,515.9 869,516.3 871,516.7 873,517.1 875,517.5 877,517.8 879,518.2 881,518.5 883,518.3 885,517.3 887,516.0 889,514.7 891,513.4 893,512.1 895,510.8 897,509.9 899,509.9 901,510.3 903,510.6 905,511.0 907,511.4 909,511.8 911,511.9 912,511.1 913,508.7 914,503.6 915,494.1 916,479.6 917,461.6 918,443.6 919,429.9 919,432.3 918,448.8 917,469.4 916,488.4 915,502.7 914,511.3 913,515.6 912,517.3 911,517.9 909,517.9 907,517.7 905,517.5 903,517.4 901,517.1 899,516.9 897,516.9 895,517.5 893,518.4 891,519.3 889,520.2 887,521.1 885,522.1 883,522.8 881,522.9 879,522.4 877,521.8 875,521.2 873,520.7 871,520.1 869,519.5 867,518.9 865,518.4 863,517.8 861,517.2 859,516.4 857,515.3 855,514.2 853,513.4 851,512.9 849,512.4 847,511.9 845,511.4 843,511.0 841,511.4 839,512.6 837,513.8 835,515.0 833,516.3 831,517.6 829,518.6 827,518.8 825,518.4 823,517.8 821,517.4 819,517.1 817,516.7 815,516.4 813,516.0 811,515.7 809,515.4 807,515.0 805,514.6 803,514.0 801,513.3 799,512.6 797,511.9 795,511.3 793,510.8 791,510.7 789,511.1 787,511.9 785,512.8 783,513.6 781,514.5 779,515.3 777,516.2 775,516.9 773,517.4 771,517.5 769,517.2 767,516.6 765,516.1 763,515.5 761,515.0 759,514.4 757,513.9 755,513.3 753,512.7 751,511.9 749,511.2 747,510.4 745,509.7 743,509.0 741,508.6 739,508.3 737,508.0 735,508.1 733,508.6 731,509.3 729,509.9 727,510.5 725,511.1 723,511.6 721,511.8 719,512.1 717,512.3 715,512.6 713,512.8 711,513.0 709,513.3 707,513.5 705,513.7 703,513.7 701,513.1 699,512.1 697,511.1 695,510.1 693,509.0 691,508.0 689,507.0 687,506.0 685,505.9 683,507.9 681,510.7 679,513.5 677,516.3 675,519.1 673,521.8 671,521.9 670,519.8 669,516.8 668,513.4 667,510.1 666,506.8 665,504.0 664,501.7 663,499.4 662,496.1 661,491.3 660,485.4 659,479.9 658,474.9 657,469.1 656,461.0 655,452.7"/>
<polygon fill="#046804" points="973,450.1 974,455.3 975,459.4 976,462.4 977,466.8 978,474.0 979,481.9 980,488.0 981,492.3 982,495.9 983,499.5 984,503.0 985,506.3 986,509.1 987,510.8 989,510.0 991,507.6 993,505.1 995,502.6 997,500.2 999,497.7 1001,495.8 1001,519.2 999,521.2 997,523.6 995,526.1 993,528.6 991,531.0 989,533.4 987,533.7 986,531.4 985,527.5 984,523.0 983,518.3 982,513.7 981,509.3 980,505.1 979,501.1 978,497.1 977,493.1 976,487.9 975,479.7 974,467.6 973,455.6"/>
<polygon fill="#1010e8" points="973,451.0 974,457.3 975,462.7 976,466.4 977,471.0 978,477.7 979,485.0 980,490.7 981,495.0 982,498.8 983,502.5 984,506.2 985,509.7 986,512.7 987,514.4 989,513.8 991,511.3 993,508.9 995,506.4 997,503.9 999,501.5 1001,499.5 1001,515.0 999,517.0 997,519.4 995,521.9 993,524.3 991,526.8 989,529.2 987,529.6 986,527.4 985,523.7 984,519.4 983,514.9 982,510.5 981,506.2 980,502.0 979,497.6 978,493.0 977,488.3 976,483.3 975,476.0 974,465.4 973,454.6"/>
<polygon fill="#f01010" points="973,451.4 974,458.4 975,464.5 976,468.7 977,473.4 978,479.8 979,486.7 980,492.3 981,496.5 982,500.4 983,504.2 984,508.0 985,511.6 986,514.7 987,516.5 989,515.9 991,513.5 993,511.0 995,508.5 997,506.0 999,503.6 1001,501.6 1001,513.6 999,515.5 997,518.0 995,520.5 993,522.9 991,525.4 989,527.8 987,528.2 986,526.0 985,522.4 984,518.2 983,513.8 982,509.4 981,505.2 980,501.0 979,496.5 978,491.6 977,486.8 976,481.8 975,474.8 974,464.6 973,454.2"/>
<polygon fill="#ffa000" points="973,452.7 974,461.2 975,469.1 976,474.6 977,479.4 978,485.1 979,491.1 980,496.2 981,500.4 982,504.5 983,508.5 984,512.6 985,516.5 986,519.8 987,521.8 989,521.3 991,518.8 993,516.4 995,513.9 997,511.4 999,509.0 1001,507.0 1001,511.3 999,513.2 997,515.6 995,518.1 993,520.6 991,523.1 989,525.5 987,525.9 986,523.8 985,520.3 984,516.2 983,511.9 982,507.7 981,503.5 980,499.3 979,494.6 978,489.3 977,484.1 976,479.2 975,472.8 974,463.4 973,453.7"/>
<polygon fill="#046804" points="916,324.4 917,315.9 918,304.4 919,291.7 920,278.7 921,266.1 922,255.3 923,246.8 924,240.2 925,234.4 926,229.6 927,225.9 928,223.1 929,220.5 930,218.0 931,215.5 932,213.0 933,210.8 935,208.8 937,209.4 938,209.8 938,240.0 937,240.0 935,240.1 933,241.1 932,242.1 931,243.3 930,245.1 929,247.8 928,251.1 927,254.7 926,259.0 925,263.9 924,269.7 923,276.2 922,283.6 921,291.6 920,299.7 919,307.7 918,315.4 917,322.4 916,327.5"/>
<polygon fill="#1010e8" points="916,324.8 917,316.7 918,305.8 919,293.8 920,281.4 921,269.5 922,259.0 923,250.6 924,244.0 925,238.2 926,233.4 927,229.6 928,226.7 929,224.0 930,221.5 931,219.1 932,216.8 933,214.8 935,212.9 937,213.4 938,213.7 938,235.8 937,235.7 935,235.7 933,236.9 932,238.0 931,239.4 930,241.3 929,244.0 928,247.1 927,250.7 926,254.8 925,259.8 924,265.5 923,272.1 922,279.7 921,288.1 920,296.8 919,305.4 918,313.8 917,321.5 916,327.1"/>
<polygon fill="#f01010" points="916,324.9 917,316.9 918,306.2 919,294.3 920,282.1 921,270.2 922,259.8 923,251.5 924,244.9 925,239.1 926,234.3 927,230.5 928,227.5 929,224.9 930,222.3 931,219.9 932,217.7 933,215.7 935,213.8 937,214.3 938,214.6 938,234.9 937,234.8 935,234.8 933,236.0 932,237.1 931,238.6 930,240.5 929,243.1 928,246.3 927,249.8 926,254.0 925,258.9 924,264.6 923,271.2 922,278.8 921,287.3 920,296.2 919,305.0 918,313.5 917,321.3 916,327.0"/>
<polygon fill="#ffb000" points="916,325.0 917,317.2 918,306.6 919,294.9 920,282.9 921,271.2 922,260.9 923,252.7 924,246.1 925,240.3 926,235.4 927,231.7 928,228.7 929,226.0 930,223.4 931,221.1 932,218.8 934,215.6 936,215.2 938,215.8 938,234.0 936,233.8 934,234.2 932,236.2 931,237.7 930,239.7 929,242.3 928,245.5 927,249.0 926,253.1 925,258.0 924,263.8 923,270.3 922,278.0 921,286.5 920,295.5 919,304.5 918,313.2 917,321.1 916,326.9"/>
<polygon fill="#ff9ec8" points="916,325.2 917,317.5 918,307.1 919,295.7 920,284.0 921,272.5 922,262.4 923,254.2 924,247.5 925,241.8 926,236.9 927,233.1 928,230.1 929,227.3 930,224.8 931,222.4 932,220.3 934,217.1 936,216.8 938,217.3 938,232.4 936,232.3 934,232.7 932,234.8 931,236.3 930,238.3 929,241.0 928,244.1 927,247.5 926,251.6 925,256.6 924,262.3 923,268.8 922,276.5 921,285.3 920,294.5 919,303.7 918,312.6 917,320.8 916,326.7"/>
<polygon fill="#ffd8ec" points="916,325.6 917,318.4 918,308.6 919,297.8 920,286.7 921,275.8 922,266.0 923,258.0 924,251.4 925,245.6 926,240.7 927,236.9 928,233.7 929,230.9 930,228.3 931,226.1 933,222.3 935,220.7 937,221.1 938,221.3 938,229.1 937,229.0 935,228.9 933,230.2 931,233.3 930,235.4 929,238.0 928,241.0 927,244.4 926,248.4 925,253.3 924,259.0 923,265.6 922,273.4 921,282.5 920,292.2 919,301.9 918,311.4 917,320.0 916,326.4"/>
<polygon fill="#046804" points="759,314.1 760,305.2 761,293.3 762,280.7 763,268.6 764,257.4 765,247.9 766,240.5 767,234.6 768,229.6 769,225.2 770,221.8 771,219.1 772,216.6 773,214.5 775,211.5 776,210.6 776,238.5 775,239.2 773,242.1 772,244.1 771,246.4 770,249.6 769,253.9 768,259.1 767,265.0 766,272.0 765,280.4 764,289.5 763,297.9 762,304.7 761,310.4 760,315.2 759,318.7"/>
<polygon fill="#1010e8" points="759,314.7 760,306.7 761,295.9 762,284.3 763,273.0 764,262.2 765,252.7 766,245.2 767,239.2 768,234.0 769,229.5 770,226.0 771,223.2 772,220.7 773,218.7 775,215.7 776,214.8 776,233.7 775,234.5 773,237.4 772,239.4 771,241.7 770,244.8 769,249.0 768,254.1 767,259.8 766,266.6 765,274.9 764,284.1 763,292.9 762,300.6 761,307.5 760,313.5 759,317.9"/>
<polygon fill="#f01010" points="759,315.0 760,307.2 761,296.7 762,285.5 763,274.5 764,263.8 765,254.4 766,246.8 767,240.7 768,235.5 769,231.0 770,227.4 771,224.5 772,222.1 773,220.0 775,217.0 776,216.2 776,232.1 775,232.8 773,235.8 772,237.8 771,240.1 770,243.2 769,247.3 768,252.3 767,258.0 766,264.8 765,272.9 764,282.1 763,291.2 762,299.2 761,306.4 760,312.9 759,317.6"/>
<polygon fill="#ffb000" points="759,315.8 760,309.0 761,299.8 762,289.9 763,279.7 764,269.6 765,260.2 766,252.5 767,246.2 768,240.8 769,236.1 770,232.4 771,229.4 772,227.1 773,225.0 775,222.0 776,221.2 776,230.1 775,230.9 773,233.8 772,235.8 771,238.2 770,241.2 769,245.3 768,250.2 767,255.9 766,262.5 765,270.7 764,279.9 763,289.1 762,297.5 761,305.2 760,312.2 759,317.3"/>
<polygon fill="#ff90a0" points="759,316.9 760,311.0 761,303.2 762,294.6 763,285.6 764,276.0 765,266.8 766,258.8 767,252.2 768,246.7 769,241.9 770,237.9 771,234.9 772,232.5 773,230.5 775,227.6 776,226.8 776,228.4 775,229.2 773,232.2 772,234.2 771,236.6 770,239.6 769,243.6 768,248.5 767,254.1 766,260.7 765,268.7 764,278.0 763,287.3 762,296.1 761,304.2 760,311.6 759,316.9"/>
<polygon fill="#046804" points="647,232.9 648,234.4 649,237.0 650,242.1 651,251.0 652,264.1 653,280.4 654,296.8 655,311.6 656,322.8 656,322.8 655,311.6 654,296.8 653,282.3 652,270.7 651,260.9 650,253.3 649,248.2 648,245.1 647,243.2"/>
<polygon fill="#1010e8" points="647,234.5 648,236.1 649,238.8 650,243.9 651,252.6 652,265.1 653,280.7 654,296.8 655,311.6 656,322.8 656,322.8 655,311.6 654,296.8 653,282.0 652,269.5 651,259.1 650,251.3 649,246.2 648,243.1 647,241.3"/>
<polygon fill="#f01010" points="647,235.5 648,237.0 649,239.8 650,244.9 651,253.5 652,265.7 653,280.9 654,296.8 655,311.6 656,322.8 656,322.8 655,311.6 654,296.8 653,281.9 652,269.1 651,258.5 650,250.6 649,245.5 648,242.5 647,240.7"/>
<polygon fill="#ffa000" points="647,237.8 648,239.5 649,242.4 650,247.5 651,255.8 652,267.2 653,281.3 654,296.7 655,311.4 656,322.7 656,322.7 655,311.4 654,296.7 653,281.7 652,268.4 651,257.5 650,249.5 649,244.4 648,241.4 647,239.7"/>
</g>
<path fill="#980a0a" d="M284,553h1V652h-1ZM283,598h2V652h-2ZM283,632h3V652h-3ZM282,646h4V652h-4ZM337,614h1V652h-1ZM336,631h2V652h-2ZM336,644h3V652h-3ZM335,650h4V652h-4ZM389,616h1V652h-1ZM388,632h2V652h-2ZM388,645h3V652h-3ZM387,650h4V652h-4ZM442,581h1V652h-1ZM441,613h2V652h-2ZM441,638h3V652h-3ZM440,648h4V652h-4ZM496,616h1V652h-1ZM495,632h2V652h-2ZM495,645h3V652h-3ZM494,650h4V652h-4ZM550,630h1V652h-1ZM549,640h2V652h-2ZM549,648h3V652h-3ZM548,651h4V652h-4ZM602,520h1V652h-1ZM601,579h2V652h-2ZM601,626h3V652h-3ZM600,644h4V652h-4ZM655,582h1V652h-1ZM654,614h2V652h-2ZM654,638h3V652h-3ZM653,648h4V652h-4ZM708,617h1V652h-1ZM707,633h2V652h-2ZM707,645h3V652h-3ZM706,650h4V652h-4ZM760,596h1V652h-1ZM759,621h2V652h-2ZM759,641h3V652h-3ZM758,649h4V652h-4ZM814,604h1V652h-1ZM813,626h2V652h-2ZM813,642h3V652h-3ZM812,649h4V652h-4ZM867,618h1V652h-1ZM866,633h2V652h-2ZM866,645h3V652h-3ZM865,650h4V652h-4ZM919,560h1V652h-1ZM918,601h2V652h-2ZM918,634h3V652h-3ZM917,646h4V652h-4ZM972,624h1V652h-1ZM971,636h2V652h-2ZM971,646h3V652h-3ZM970,650h4V652h-4Z"/></g><rect x="207.5" y="93.5" width="794" height="559" fill="none" stroke="#c8643a" stroke-width="1"/><rect x="208.5" y="368.5" width="793" height="9" fill="none" stroke="#e070b0" stroke-width="1"/><path d="M207,663 H1001" stroke="#444" stroke-width="2"/><path d="M207.5,659 v8 M1001.5,659 v8 M205,659.5 h5 M205,667.5 h5" stroke="#8a8a8a" stroke-width="1"/><path d="M600.5,668 L604.5,664 L608.5,668" stroke="#f08030" stroke-width="1.6" fill="none"/><path d="M601,659.5 Q604.5,658 608,659.5 M604.5,659 v9" stroke="#6aa0d8" stroke-width="1.3" fill="none"/></svg><div style="position:absolute;left:192px;top:369.87px;font-size:8.10px;font-weight:normal;color:#e070b0;white-space:nowrap;line-height:1;transform:scaleX(0.926);transform-origin:0 0;">C4</div><svg style="position:absolute;left:201px;top:370px" width="6" height="6" viewBox="0 0 6 6"><path d="M0,3 h4 M2,1 l2,2 l-2,2" stroke="#e070b0" stroke-width="1" fill="none"/></svg><svg style="position:absolute;left:1003px;top:370px" width="6" height="6" viewBox="0 0 6 6"><path d="M6,3 h-4 M4,1 l-2,2 l2,2" stroke="#e070b0" stroke-width="1" fill="none"/></svg><div style="position:absolute;left:1009px;top:369.77px;font-size:8.64px;font-weight:normal;color:#e070b0;white-space:nowrap;line-height:1;transform:scaleX(0.926);transform-origin:0 0;">T</div><div style="position:absolute;left:186px;top:676px;width:834px;height:117px;background:#ececec;"></div><div style="position:absolute;left:3px;top:793px;width:1017px;height:3px;background:#d6d2ca;"></div><div style="position:absolute;left:189.5px;top:679.5px;width:23px;height:32px;box-sizing:border-box;border:1px solid #6e6e6e;border-radius:3px;background:linear-gradient(#ffffff,#f6f6f6 40%,#e4e4e4);"></div><div style="position:absolute;left:189.5px;top:683.80px;width:23.0px;text-align:center;font-size:9.50px;font-weight:bold;color:#2c2c2c;white-space:nowrap;line-height:1;transform:scaleX(0.926);transform-origin:50% 0;">Ch1</div><div style="position:absolute;left:195.5px;top:697.5px;width:10px;height:9px;box-sizing:border-box;border:1px solid #303030;background:#f8f070;"></div><div style="position:absolute;left:215px;top:679.5px;width:72px;height:32px;box-sizing:border-box;border:1px solid #d2d2d2;border-radius:3px;background:#ececec;overflow:hidden;"></div><div style="position:absolute;left:215px;top:682.56px;width:72px;text-align:center;font-size:9.72px;font-weight:bold;color:#c6c6c6;white-space:nowrap;line-height:1;transform:scaleX(0.926);transform-origin:50% 0;">100 mV/div</div><div style="position:absolute;left:216px;top:694.5px;width:70px;height:3px;border-top:1px solid #d6d6d6;border-bottom:1px solid #d6d6d6;box-sizing:border-box;"></div><div style="position:absolute;left:216px;top:697.5px;width:15px;height:13px;box-sizing:border-box;background:#ececec;"><svg style="position:absolute;left:0px;top:0px" width="15" height="13" viewBox="0 0 15 13"><path d="M4.5,4.7 L10.5,4.7 L7.5,8.3 Z" fill="#d0d0d0"/></svg></div><div style="position:absolute;left:231px;top:697.5px;width:14px;height:13px;box-sizing:border-box;background:#ececec;border-left:1px solid #d6d6d6;"><svg style="position:absolute;left:0px;top:0px" width="14" height="13" viewBox="0 0 14 13"><path d="M4.5,8.3 L10.5,8.3 L7.5,4.7 Z" fill="#d0d0d0"/></svg></div><div style="position:absolute;left:245px;top:697.5px;width:11px;height:13px;box-sizing:border-box;background:#ececec;border-left:1px solid #d6d6d6;"><div style="position:absolute;left:0px;top:1.76px;width:11px;text-align:center;font-size:10.80px;font-weight:normal;color:#d0d0d0;white-space:nowrap;line-height:1;transform:scaleX(0.926);transform-origin:50% 0;">D</div></div><div style="position:absolute;left:256px;top:697.5px;width:15px;height:13px;box-sizing:border-box;background:#ececec;border-left:1px solid #d6d6d6;"><svg style="position:absolute;left:0px;top:0px" width="15" height="13" viewBox="0 0 15 13"><path d="M4.0,4.1 L12.0,4.1 L8.0,8.9 Z" fill="#d0d0d0"/></svg></div><div style="position:absolute;left:271px;top:697.5px;width:15px;height:13px;box-sizing:border-box;background:#ececec;border-left:1px solid #d6d6d6;"><svg style="position:absolute;left:0px;top:0px" width="15" height="13" viewBox="0 0 15 13"><path d="M4.0,8.9 L12.0,8.9 L8.0,4.1 Z" fill="#d0d0d0"/></svg></div><div style="position:absolute;left:189.5px;top:720.5px;width:22px;height:24px;box-sizing:border-box;border:1px solid #d0d0d0;border-radius:3px;background:#e8e8e8;"></div><div style="position:absolute;left:190.5px;top:721.5px;width:20px;height:11px;background:#dcdcdc;"></div><div style="position:absolute;left:190.5px;top:732.5px;width:20px;height:1px;background:#d4d4d4;"></div><div style="position:absolute;left:189.5px;top:722.76px;width:22.0px;text-align:center;font-size:9.72px;font-weight:bold;color:#c8c8c8;white-space:nowrap;line-height:1;transform:scaleX(0.926);transform-origin:50% 0;">Pos</div><div style="position:absolute;left:189.5px;top:735.06px;width:22.0px;text-align:center;font-size:9.72px;font-weight:bold;color:#c8c8c8;white-space:nowrap;line-height:1;transform:scaleX(0.926);transform-origin:50% 0;">Ofs</div><div style="position:absolute;left:215px;top:716px;width:72px;height:32px;box-sizing:border-box;border:1px solid #d2d2d2;border-radius:3px;background:#ececec;overflow:hidden;"></div><div style="position:absolute;left:215px;top:719.06px;width:72px;text-align:center;font-size:9.72px;font-weight:bold;color:#c6c6c6;white-space:nowrap;line-height:1;transform:scaleX(0.926);transform-origin:50% 0;">0 div</div><div style="position:absolute;left:216px;top:731px;width:70px;height:3px;border-top:1px solid #d6d6d6;border-bottom:1px solid #d6d6d6;box-sizing:border-box;"></div><div style="position:absolute;left:216px;top:734px;width:15px;height:13px;box-sizing:border-box;background:#ececec;"><svg style="position:absolute;left:0px;top:0px" width="15" height="13" viewBox="0 0 15 13"><path d="M4.5,4.7 L10.5,4.7 L7.5,8.3 Z" fill="#d0d0d0"/></svg></div><div style="position:absolute;left:231px;top:734px;width:14px;height:13px;box-sizing:border-box;background:#ececec;border-left:1px solid #d6d6d6;"><svg style="position:absolute;left:0px;top:0px" width="14" height="13" viewBox="0 0 14 13"><path d="M4.5,8.3 L10.5,8.3 L7.5,4.7 Z" fill="#d0d0d0"/></svg></div><div style="position:absolute;left:245px;top:734px;width:11px;height:13px;box-sizing:border-box;background:#ececec;border-left:1px solid #d6d6d6;"><div style="position:absolute;left:0px;top:1.76px;width:11px;text-align:center;font-size:10.80px;font-weight:normal;color:#d0d0d0;white-space:nowrap;line-height:1;transform:scaleX(0.926);transform-origin:50% 0;">0</div></div><div style="position:absolute;left:256px;top:734px;width:15px;height:13px;box-sizing:border-box;background:#ececec;border-left:1px solid #d6d6d6;"><svg style="position:absolute;left:0px;top:0px" width="15" height="13" viewBox="0 0 15 13"><path d="M4.0,4.1 L12.0,4.1 L8.0,8.9 Z" fill="#d0d0d0"/></svg></div><div style="position:absolute;left:271px;top:734px;width:15px;height:13px;box-sizing:border-box;background:#ececec;border-left:1px solid #d6d6d6;"><svg style="position:absolute;left:0px;top:0px" width="15" height="13" viewBox="0 0 15 13"><path d="M4.0,8.9 L12.0,8.9 L8.0,4.1 Z" fill="#d0d0d0"/></svg></div><div style="position:absolute;left:291.5px;top:679.5px;width:23px;height:32px;box-sizing:border-box;border:1px solid #6e6e6e;border-radius:3px;background:linear-gradient(#ffffff,#f6f6f6 40%,#e4e4e4);"></div><div style="position:absolute;left:291.5px;top:683.80px;width:23.0px;text-align:center;font-size:9.50px;font-weight:bold;color:#2c2c2c;white-space:nowrap;line-height:1;transform:scaleX(0.926);transform-origin:50% 0;">Ch2</div><div style="position:absolute;left:297.5px;top:697.5px;width:10px;height:9px;box-sizing:border-box;border:1px solid #303030;background:#78eef4;"></div><div style="position:absolute;left:317px;top:679.5px;width:73px;height:32px;box-sizing:border-box;border:1px solid #d2d2d2;border-radius:3px;background:#ececec;overflow:hidden;"></div><div style="position:absolute;left:317px;top:682.56px;width:73px;text-align:center;font-size:9.72px;font-weight:bold;color:#c6c6c6;white-space:nowrap;line-height:1;transform:scaleX(0.926);transform-origin:50% 0;">100 mV/div</div><div style="position:absolute;left:318px;top:694.5px;width:71px;height:3px;border-top:1px solid #d6d6d6;border-bottom:1px solid #d6d6d6;box-sizing:border-box;"></div><div style="position:absolute;left:318px;top:697.5px;width:15px;height:13px;box-sizing:border-box;background:#ececec;"><svg style="position:absolute;left:0px;top:0px" width="15" height="13" viewBox="0 0 15 13"><path d="M4.5,4.7 L10.5,4.7 L7.5,8.3 Z" fill="#d0d0d0"/></svg></div><div style="position:absolute;left:333px;top:697.5px;width:15px;height:13px;box-sizing:border-box;background:#ececec;border-left:1px solid #d6d6d6;"><svg style="position:absolute;left:0px;top:0px" width="15" height="13" viewBox="0 0 15 13"><path d="M5.0,8.3 L11.0,8.3 L8.0,4.7 Z" fill="#d0d0d0"/></svg></div><div style="position:absolute;left:348px;top:697.5px;width:11px;height:13px;box-sizing:border-box;background:#ececec;border-left:1px solid #d6d6d6;"><div style="position:absolute;left:0px;top:1.76px;width:11px;text-align:center;font-size:10.80px;font-weight:normal;color:#d0d0d0;white-space:nowrap;line-height:1;transform:scaleX(0.926);transform-origin:50% 0;">D</div></div><div style="position:absolute;left:359px;top:697.5px;width:15px;height:13px;box-sizing:border-box;background:#ececec;border-left:1px solid #d6d6d6;"><svg style="position:absolute;left:0px;top:0px" width="15" height="13" viewBox="0 0 15 13"><path d="M4.0,4.1 L12.0,4.1 L8.0,8.9 Z" fill="#d0d0d0"/></svg></div><div style="position:absolute;left:374px;top:697.5px;width:15px;height:13px;box-sizing:border-box;background:#ececec;border-left:1px solid #d6d6d6;"><svg style="position:absolute;left:0px;top:0px" width="15" height="13" viewBox="0 0 15 13"><path d="M4.0,8.9 L12.0,8.9 L8.0,4.1 Z" fill="#d0d0d0"/></svg></div><div style="position:absolute;left:291.5px;top:720.5px;width:23px;height:24px;box-sizing:border-box;border:1px solid #d0d0d0;border-radius:3px;background:#e8e8e8;"></div><div style="position:absolute;left:292.5px;top:721.5px;width:21px;height:11px;background:#dcdcdc;"></div><div style="position:absolute;left:292.5px;top:732.5px;width:21px;height:1px;background:#d4d4d4;"></div><div style="position:absolute;left:291.5px;top:722.76px;width:23.0px;text-align:center;font-size:9.72px;font-weight:bold;color:#c8c8c8;white-space:nowrap;line-height:1;transform:scaleX(0.926);transform-origin:50% 0;">Pos</div><div style="position:absolute;left:291.5px;top:735.06px;width:23.0px;text-align:center;font-size:9.72px;font-weight:bold;color:#c8c8c8;white-space:nowrap;line-height:1;transform:scaleX(0.926);transform-origin:50% 0;">Ofs</div><div style="position:absolute;left:317px;top:716px;width:73px;height:32px;box-sizing:border-box;border:1px solid #d2d2d2;border-radius:3px;background:#ececec;overflow:hidden;"></div><div style="position:absolute;left:317px;top:719.06px;width:73px;text-align:center;font-size:9.72px;font-weight:bold;color:#c6c6c6;white-space:nowrap;line-height:1;transform:scaleX(0.926);transform-origin:50% 0;">0 div</div><div style="position:absolute;left:318px;top:731px;width:71px;height:3px;border-top:1px solid #d6d6d6;border-bottom:1px solid #d6d6d6;box-sizing:border-box;"></div><div style="position:absolute;left:318px;top:734px;width:15px;height:13px;box-sizing:border-box;background:#ececec;"><svg style="position:absolute;left:0px;top:0px" width="15" height="13" viewBox="0 0 15 13"><path d="M4.5,4.7 L10.5,4.7 L7.5,8.3 Z" fill="#d0d0d0"/></svg></div><div style="position:absolute;left:333px;top:734px;width:15px;height:13px;box-sizing:border-box;background:#ececec;border-left:1px solid #d6d6d6;"><svg style="position:absolute;left:0px;top:0px" width="15" height="13" viewBox="0 0 15 13"><path d="M5.0,8.3 L11.0,8.3 L8.0,4.7 Z" fill="#d0d0d0"/></svg></div><div style="position:absolute;left:348px;top:734px;width:11px;height:13px;box-sizing:border-box;background:#ececec;border-left:1px solid #d6d6d6;"><div style="position:absolute;left:0px;top:1.76px;width:11px;text-align:center;font-size:10.80px;font-weight:normal;color:#d0d0d0;white-space:nowrap;line-height:1;transform:scaleX(0.926);transform-origin:50% 0;">0</div></div><div style="position:absolute;left:359px;top:734px;width:15px;height:13px;box-sizing:border-box;background:#ececec;border-left:1px solid #d6d6d6;"><svg style="position:absolute;left:0px;top:0px" width="15" height="13" viewBox="0 0 15 13"><path d="M4.0,4.1 L12.0,4.1 L8.0,8.9 Z" fill="#d0d0d0"/></svg></div><div style="position:absolute;left:374px;top:734px;width:15px;height:13px;box-sizing:border-box;background:#ececec;border-left:1px solid #d6d6d6;"><svg style="position:absolute;left:0px;top:0px" width="15" height="13" viewBox="0 0 15 13"><path d="M4.0,8.9 L12.0,8.9 L8.0,4.1 Z" fill="#d0d0d0"/></svg></div><div style="position:absolute;left:394px;top:679.5px;width:23px;height:32px;box-sizing:border-box;border:1px solid #6e6e6e;border-radius:3px;background:linear-gradient(#ffffff,#f6f6f6 40%,#e4e4e4);"></div><div style="position:absolute;left:394px;top:683.80px;width:23px;text-align:center;font-size:9.50px;font-weight:bold;color:#2c2c2c;white-space:nowrap;line-height:1;transform:scaleX(0.926);transform-origin:50% 0;">Ch3</div><div style="position:absolute;left:400px;top:697.5px;width:10px;height:9px;box-sizing:border-box;border:1px solid #303030;background:#70e080;"></div><div style="position:absolute;left:420px;top:679.5px;width:73px;height:32px;box-sizing:border-box;border:1px solid #d2d2d2;border-radius:3px;background:#ececec;overflow:hidden;"></div><div style="position:absolute;left:420px;top:682.56px;width:73px;text-align:center;font-size:9.72px;font-weight:bold;color:#c6c6c6;white-space:nowrap;line-height:1;transform:scaleX(0.926);transform-origin:50% 0;">100 mV/div</div><div style="position:absolute;left:421px;top:694.5px;width:71px;height:3px;border-top:1px solid #d6d6d6;border-bottom:1px solid #d6d6d6;box-sizing:border-box;"></div><div style="position:absolute;left:421px;top:697.5px;width:15px;height:13px;box-sizing:border-box;background:#ececec;"><svg style="position:absolute;left:0px;top:0px" width="15" height="13" viewBox="0 0 15 13"><path d="M4.5,4.7 L10.5,4.7 L7.5,8.3 Z" fill="#d0d0d0"/></svg></div><div style="position:absolute;left:436px;top:697.5px;width:15px;height:13px;box-sizing:border-box;background:#ececec;border-left:1px solid #d6d6d6;"><svg style="position:absolute;left:0px;top:0px" width="15" height="13" viewBox="0 0 15 13"><path d="M5.0,8.3 L11.0,8.3 L8.0,4.7 Z" fill="#d0d0d0"/></svg></div><div style="position:absolute;left:451px;top:697.5px;width:11px;height:13px;box-sizing:border-box;background:#ececec;border-left:1px solid #d6d6d6;"><div style="position:absolute;left:0px;top:1.76px;width:11px;text-align:center;font-size:10.80px;font-weight:normal;color:#d0d0d0;white-space:nowrap;line-height:1;transform:scaleX(0.926);transform-origin:50% 0;">D</div></div><div style="position:absolute;left:462px;top:697.5px;width:15px;height:13px;box-sizing:border-box;background:#ececec;border-left:1px solid #d6d6d6;"><svg style="position:absolute;left:0px;top:0px" width="15" height="13" viewBox="0 0 15 13"><path d="M4.0,4.1 L12.0,4.1 L8.0,8.9 Z" fill="#d0d0d0"/></svg></div><div style="position:absolute;left:477px;top:697.5px;width:15px;height:13px;box-sizing:border-box;background:#ececec;border-left:1px solid #d6d6d6;"><svg style="position:absolute;left:0px;top:0px" width="15" height="13" viewBox="0 0 15 13"><path d="M4.0,8.9 L12.0,8.9 L8.0,4.1 Z" fill="#d0d0d0"/></svg></div><div style="position:absolute;left:394px;top:720.5px;width:23px;height:24px;box-sizing:border-box;border:1px solid #d0d0d0;border-radius:3px;background:#e8e8e8;"></div><div style="position:absolute;left:395px;top:721.5px;width:21px;height:11px;background:#dcdcdc;"></div><div style="position:absolute;left:395px;top:732.5px;width:21px;height:1px;background:#d4d4d4;"></div><div style="position:absolute;left:394px;top:722.76px;width:23px;text-align:center;font-size:9.72px;font-weight:bold;color:#c8c8c8;white-space:nowrap;line-height:1;transform:scaleX(0.926);transform-origin:50% 0;">Pos</div><div style="position:absolute;left:394px;top:735.06px;width:23px;text-align:center;font-size:9.72px;font-weight:bold;color:#c8c8c8;white-space:nowrap;line-height:1;transform:scaleX(0.926);transform-origin:50% 0;">Ofs</div><div style="position:absolute;left:420px;top:716px;width:73px;height:32px;box-sizing:border-box;border:1px solid #d2d2d2;border-radius:3px;background:#ececec;overflow:hidden;"></div><div style="position:absolute;left:420px;top:719.06px;width:73px;text-align:center;font-size:9.72px;font-weight:bold;color:#c6c6c6;white-space:nowrap;line-height:1;transform:scaleX(0.926);transform-origin:50% 0;">0 div</div><div style="position:absolute;left:421px;top:731px;width:71px;height:3px;border-top:1px solid #d6d6d6;border-bottom:1px solid #d6d6d6;box-sizing:border-box;"></div><div style="position:absolute;left:421px;top:734px;width:15px;height:13px;box-sizing:border-box;background:#ececec;"><svg style="position:absolute;left:0px;top:0px" width="15" height="13" viewBox="0 0 15 13"><path d="M4.5,4.7 L10.5,4.7 L7.5,8.3 Z" fill="#d0d0d0"/></svg></div><div style="position:absolute;left:436px;top:734px;width:15px;height:13px;box-sizing:border-box;background:#ececec;border-left:1px solid #d6d6d6;"><svg style="position:absolute;left:0px;top:0px" width="15" height="13" viewBox="0 0 15 13"><path d="M5.0,8.3 L11.0,8.3 L8.0,4.7 Z" fill="#d0d0d0"/></svg></div><div style="position:absolute;left:451px;top:734px;width:11px;height:13px;box-sizing:border-box;background:#ececec;border-left:1px solid #d6d6d6;"><div style="position:absolute;left:0px;top:1.76px;width:11px;text-align:center;font-size:10.80px;font-weight:normal;color:#d0d0d0;white-space:nowrap;line-height:1;transform:scaleX(0.926);transform-origin:50% 0;">0</div></div><div style="position:absolute;left:462px;top:734px;width:15px;height:13px;box-sizing:border-box;background:#ececec;border-left:1px solid #d6d6d6;"><svg style="position:absolute;left:0px;top:0px" width="15" height="13" viewBox="0 0 15 13"><path d="M4.0,4.1 L12.0,4.1 L8.0,8.9 Z" fill="#d0d0d0"/></svg></div><div style="position:absolute;left:477px;top:734px;width:15px;height:13px;box-sizing:border-box;background:#ececec;border-left:1px solid #d6d6d6;"><svg style="position:absolute;left:0px;top:0px" width="15" height="13" viewBox="0 0 15 13"><path d="M4.0,8.9 L12.0,8.9 L8.0,4.1 Z" fill="#d0d0d0"/></svg></div><div style="position:absolute;left:496.5px;top:679.5px;width:23px;height:32px;box-sizing:border-box;border:1px solid #4a6478;border-radius:3px;background:linear-gradient(#aed0e4,#86b8d8 45%,#5a98c8);"></div><div style="position:absolute;left:496.5px;top:683.80px;width:23.0px;text-align:center;font-size:9.50px;font-weight:bold;color:#ffffff;white-space:nowrap;line-height:1;transform:scaleX(0.926);transform-origin:50% 0;text-shadow:0 0 1px rgba(40,60,80,0.6);">Ch4</div><div style="position:absolute;left:502.5px;top:697.5px;width:10px;height:9px;box-sizing:border-box;border:1px solid #303030;background:#f080c0;"></div><div style="position:absolute;left:522px;top:679.5px;width:73px;height:32px;box-sizing:border-box;border:1px solid #6a6a6a;border-radius:3px;background:#fff;overflow:hidden;"></div><div style="position:absolute;left:523px;top:680.5px;width:71px;height:14px;background:#000;border-radius:2px 2px 0 0;"></div><div style="position:absolute;left:526.5px;top:682.56px;font-size:9.72px;font-weight:bold;color:#f07ac8;white-space:nowrap;line-height:1;transform:scaleX(0.926);transform-origin:0 0;">100 mV/div</div><div style="position:absolute;left:523px;top:694.5px;width:71px;height:3px;background:#f6f6f6;border-bottom:1px solid #8a8a8a;box-sizing:border-box;"></div><div style="position:absolute;left:523px;top:694.5px;width:51px;height:2px;background:#8030e0;"></div><div style="position:absolute;left:573px;top:694.5px;width:2px;height:2px;background:#e02040;"></div><div style="position:absolute;left:523px;top:697.5px;width:15px;height:13px;box-sizing:border-box;background:linear-gradient(#ffffff,#f6f6f6 40%,#e4e4e4);"><svg style="position:absolute;left:0px;top:0px" width="15" height="13" viewBox="0 0 15 13"><path d="M4.5,4.7 L10.5,4.7 L7.5,8.3 Z" fill="#3a3a3a"/></svg></div><div style="position:absolute;left:538px;top:697.5px;width:15px;height:13px;box-sizing:border-box;background:linear-gradient(#ffffff,#f6f6f6 40%,#e4e4e4);border-left:1px solid #8a8a8a;"><svg style="position:absolute;left:0px;top:0px" width="15" height="13" viewBox="0 0 15 13"><path d="M5.0,8.3 L11.0,8.3 L8.0,4.7 Z" fill="#3a3a3a"/></svg></div><div style="position:absolute;left:553px;top:697.5px;width:11px;height:13px;box-sizing:border-box;background:linear-gradient(#ffffff,#f6f6f6 40%,#e4e4e4);border-left:1px solid #8a8a8a;"><div style="position:absolute;left:0px;top:1.66px;width:11px;text-align:center;font-size:11.34px;font-weight:normal;color:#3a3a3a;white-space:nowrap;line-height:1;transform:scaleX(0.926);transform-origin:50% 0;">D</div></div><div style="position:absolute;left:564px;top:697.5px;width:15px;height:13px;box-sizing:border-box;background:linear-gradient(#ffffff,#f6f6f6 40%,#e4e4e4);border-left:1px solid #8a8a8a;"><svg style="position:absolute;left:0px;top:0px" width="15" height="13" viewBox="0 0 15 13"><path d="M4.0,4.1 L12.0,4.1 L8.0,8.9 Z" fill="#3a3a3a"/></svg></div><div style="position:absolute;left:579px;top:697.5px;width:15px;height:13px;box-sizing:border-box;background:linear-gradient(#ffffff,#f6f6f6 40%,#e4e4e4);border-left:1px solid #8a8a8a;"><svg style="position:absolute;left:0px;top:0px" width="15" height="13" viewBox="0 0 15 13"><path d="M4.0,8.9 L12.0,8.9 L8.0,4.1 Z" fill="#3a3a3a"/></svg></div><div style="position:absolute;left:496.5px;top:720.5px;width:23px;height:24px;box-sizing:border-box;border:1px solid #6e6e6e;border-radius:3px;background:linear-gradient(#ffffff,#f6f6f6 40%,#e4e4e4);"></div><div style="position:absolute;left:496.5px;top:720.5px;width:23px;height:12px;box-sizing:border-box;border:1px solid #4a6478;border-radius:3px;background:linear-gradient(#aed0e4,#86b8d8 45%,#5a98c8);border-radius:3px 3px 0 0;"></div><div style="position:absolute;left:496.5px;top:722.76px;width:23.0px;text-align:center;font-size:9.72px;font-weight:bold;color:#ffffff;white-space:nowrap;line-height:1;transform:scaleX(0.926);transform-origin:50% 0;text-shadow:0 0 1px rgba(40,60,80,0.6);">Pos</div><div style="position:absolute;left:496.5px;top:735.06px;width:23.0px;text-align:center;font-size:9.72px;font-weight:bold;color:#2c2c2c;white-space:nowrap;line-height:1;transform:scaleX(0.926);transform-origin:50% 0;">Ofs</div><div style="position:absolute;left:522px;top:716px;width:73px;height:32px;box-sizing:border-box;border:1px solid #6a6a6a;border-radius:3px;background:#fff;overflow:hidden;"></div><div style="position:absolute;left:523px;top:717px;width:71px;height:14px;background:#000;border-radius:2px 2px 0 0;"></div><div style="position:absolute;left:526px;top:719.06px;font-size:9.72px;font-weight:bold;color:#f07ac8;white-space:nowrap;line-height:1;transform:scaleX(0.926);transform-origin:0 0;">0 div</div><div style="position:absolute;left:523px;top:731px;width:71px;height:3px;background:#f6f6f6;border-bottom:1px solid #8a8a8a;box-sizing:border-box;"></div><div style="position:absolute;left:557px;top:731px;width:1px;height:2px;background:#e02040;"></div><div style="position:absolute;left:523px;top:734px;width:15px;height:13px;box-sizing:border-box;background:linear-gradient(#ffffff,#f6f6f6 40%,#e4e4e4);"><svg style="position:absolute;left:0px;top:0px" width="15" height="13" viewBox="0 0 15 13"><path d="M4.5,4.7 L10.5,4.7 L7.5,8.3 Z" fill="#3a3a3a"/></svg></div><div style="position:absolute;left:538px;top:734px;width:15px;height:13px;box-sizing:border-box;background:linear-gradient(#ffffff,#f6f6f6 40%,#e4e4e4);border-left:1px solid #8a8a8a;"><svg style="position:absolute;left:0px;top:0px" width="15" height="13" viewBox="0 0 15 13"><path d="M5.0,8.3 L11.0,8.3 L8.0,4.7 Z" fill="#3a3a3a"/></svg></div><div style="position:absolute;left:553px;top:734px;width:11px;height:13px;box-sizing:border-box;background:linear-gradient(#ffffff,#f6f6f6 40%,#e4e4e4);border-left:1px solid #8a8a8a;"><div style="position:absolute;left:0px;top:1.66px;width:11px;text-align:center;font-size:11.34px;font-weight:normal;color:#3a3a3a;white-space:nowrap;line-height:1;transform:scaleX(0.926);transform-origin:50% 0;">0</div></div><div style="position:absolute;left:564px;top:734px;width:15px;height:13px;box-sizing:border-box;background:linear-gradient(#ffffff,#f6f6f6 40%,#e4e4e4);border-left:1px solid #8a8a8a;"><svg style="position:absolute;left:0px;top:0px" width="15" height="13" viewBox="0 0 15 13"><path d="M4.0,4.1 L12.0,4.1 L8.0,8.9 Z" fill="#3a3a3a"/></svg></div><div style="position:absolute;left:579px;top:734px;width:15px;height:13px;box-sizing:border-box;background:linear-gradient(#ffffff,#f6f6f6 40%,#e4e4e4);border-left:1px solid #8a8a8a;"><svg style="position:absolute;left:0px;top:0px" width="15" height="13" viewBox="0 0 15 13"><path d="M4.0,8.9 L12.0,8.9 L8.0,4.1 Z" fill="#3a3a3a"/></svg></div><div style="position:absolute;left:604.5px;top:721px;width:26px;height:24px;box-sizing:border-box;border:1px solid #6e6e6e;border-radius:3px;background:linear-gradient(#ffffff,#f6f6f6 40%,#e4e4e4);"></div><div style="position:absolute;left:604.5px;top:733px;width:26px;height:12px;box-sizing:border-box;border:1px solid #4a6478;border-radius:3px;background:linear-gradient(#aed0e4,#86b8d8 45%,#5a98c8);border-radius:0 0 3px 3px;"></div><div style="position:absolute;left:604.5px;top:723.26px;width:26.0px;text-align:center;font-size:9.72px;font-weight:bold;color:#2c2c2c;white-space:nowrap;line-height:1;transform:scaleX(0.926);transform-origin:50% 0;">Pos</div><div style="position:absolute;left:604.5px;top:735.56px;width:26.0px;text-align:center;font-size:9.72px;font-weight:bold;color:#ffffff;white-space:nowrap;line-height:1;transform:scaleX(0.926);transform-origin:50% 0;text-shadow:0 0 1px rgba(40,60,80,0.6);">Delay</div><div style="position:absolute;left:633px;top:679.5px;width:73px;height:32px;box-sizing:border-box;border:1px solid #6a6a6a;border-radius:3px;background:#fff;overflow:hidden;"></div><div style="position:absolute;left:634px;top:680.5px;width:71px;height:14px;background:#000;border-radius:2px 2px 0 0;"></div><div style="position:absolute;left:637.5px;top:682.56px;font-size:9.72px;font-weight:bold;color:#f07ac8;white-space:nowrap;line-height:1;transform:scaleX(0.926);transform-origin:0 0;">500 ps/div</div><div style="position:absolute;left:634px;top:694.5px;width:71px;height:3px;background:#f6f6f6;border-bottom:1px solid #8a8a8a;box-sizing:border-box;"></div><div style="position:absolute;left:634px;top:694.5px;width:21px;height:2px;background:#8030e0;"></div><div style="position:absolute;left:654px;top:694.5px;width:2px;height:2px;background:#e02040;"></div><div style="position:absolute;left:634px;top:697.5px;width:15px;height:13px;box-sizing:border-box;background:linear-gradient(#ffffff,#f6f6f6 40%,#e4e4e4);"><svg style="position:absolute;left:0px;top:0px" width="15" height="13" viewBox="0 0 15 13"><path d="M5.7,6.5 L9.3,3.5 L9.3,9.5 Z" fill="#3a3a3a"/></svg></div><div style="position:absolute;left:649px;top:697.5px;width:15px;height:13px;box-sizing:border-box;background:linear-gradient(#ffffff,#f6f6f6 40%,#e4e4e4);border-left:1px solid #8a8a8a;"><svg style="position:absolute;left:0px;top:0px" width="15" height="13" viewBox="0 0 15 13"><path d="M9.8,6.5 L6.2,3.5 L6.2,9.5 Z" fill="#3a3a3a"/></svg></div><div style="position:absolute;left:664px;top:697.5px;width:11px;height:13px;box-sizing:border-box;background:linear-gradient(#ffffff,#f6f6f6 40%,#e4e4e4);border-left:1px solid #8a8a8a;"><div style="position:absolute;left:0px;top:1.66px;width:11px;text-align:center;font-size:11.34px;font-weight:normal;color:#3a3a3a;white-space:nowrap;line-height:1;transform:scaleX(0.926);transform-origin:50% 0;">D</div></div><div style="position:absolute;left:675px;top:697.5px;width:15px;height:13px;box-sizing:border-box;background:linear-gradient(#ffffff,#f6f6f6 40%,#e4e4e4);border-left:1px solid #8a8a8a;"><svg style="position:absolute;left:0px;top:0px" width="15" height="13" viewBox="0 0 15 13"><path d="M5.6,6.5 L10.4,2.5 L10.4,10.5 Z" fill="#3a3a3a"/></svg></div><div style="position:absolute;left:690px;top:697.5px;width:15px;height:13px;box-sizing:border-box;background:linear-gradient(#ffffff,#f6f6f6 40%,#e4e4e4);border-left:1px solid #8a8a8a;"><svg style="position:absolute;left:0px;top:0px" width="15" height="13" viewBox="0 0 15 13"><path d="M10.4,6.5 L5.6,2.5 L5.6,10.5 Z" fill="#3a3a3a"/></svg></div><div style="position:absolute;left:633px;top:716px;width:73px;height:32px;box-sizing:border-box;border:1px solid #6a6a6a;border-radius:3px;background:#fff;overflow:hidden;"></div><div style="position:absolute;left:634px;top:717px;width:71px;height:14px;background:#000;border-radius:2px 2px 0 0;"></div><div style="position:absolute;left:637px;top:719.06px;font-size:9.72px;font-weight:bold;color:#f07ac8;white-space:nowrap;line-height:1;transform:scaleX(0.926);transform-origin:0 0;">0 s</div><div style="position:absolute;left:634px;top:731px;width:71px;height:3px;background:#f6f6f6;border-bottom:1px solid #8a8a8a;box-sizing:border-box;"></div><div style="position:absolute;left:668px;top:731px;width:1px;height:2px;background:#e02040;"></div><div style="position:absolute;left:634px;top:734px;width:15px;height:13px;box-sizing:border-box;background:linear-gradient(#ffffff,#f6f6f6 40%,#e4e4e4);"><svg style="position:absolute;left:0px;top:0px" width="15" height="13" viewBox="0 0 15 13"><path d="M5.7,6.5 L9.3,3.5 L9.3,9.5 Z" fill="#3a3a3a"/></svg></div><div style="position:absolute;left:649px;top:734px;width:15px;height:13px;box-sizing:border-box;background:linear-gradient(#ffffff,#f6f6f6 40%,#e4e4e4);border-left:1px solid #8a8a8a;"><svg style="position:absolute;left:0px;top:0px" width="15" height="13" viewBox="0 0 15 13"><path d="M9.8,6.5 L6.2,3.5 L6.2,9.5 Z" fill="#3a3a3a"/></svg></div><div style="position:absolute;left:664px;top:734px;width:11px;height:13px;box-sizing:border-box;background:linear-gradient(#ffffff,#f6f6f6 40%,#e4e4e4);border-left:1px solid #8a8a8a;"><div style="position:absolute;left:0px;top:1.66px;width:11px;text-align:center;font-size:11.34px;font-weight:normal;color:#3a3a3a;white-space:nowrap;line-height:1;transform:scaleX(0.926);transform-origin:50% 0;">0</div></div><div style="position:absolute;left:675px;top:734px;width:15px;height:13px;box-sizing:border-box;background:linear-gradient(#ffffff,#f6f6f6 40%,#e4e4e4);border-left:1px solid #8a8a8a;"><svg style="position:absolute;left:0px;top:0px" width="15" height="13" viewBox="0 0 15 13"><path d="M5.6,6.5 L10.4,2.5 L10.4,10.5 Z" fill="#3a3a3a"/></svg></div><div style="position:absolute;left:690px;top:734px;width:15px;height:13px;box-sizing:border-box;background:linear-gradient(#ffffff,#f6f6f6 40%,#e4e4e4);border-left:1px solid #8a8a8a;"><svg style="position:absolute;left:0px;top:0px" width="15" height="13" viewBox="0 0 15 13"><path d="M10.4,6.5 L5.6,2.5 L5.6,10.5 Z" fill="#3a3a3a"/></svg></div><div style="position:absolute;left:715.5px;top:679.5px;width:31.5px;height:50.5px;box-sizing:border-box;border:1px solid #6e6e6e;border-radius:3px;background:linear-gradient(#ffffff,#f6f6f6 40%,#e4e4e4);"></div><div style="position:absolute;left:715.5px;top:681.56px;width:31.5px;text-align:center;font-size:9.72px;font-weight:bold;color:#2c2c2c;white-space:nowrap;line-height:1;transform:scaleX(0.926);transform-origin:50% 0;">Ch1</div><div style="position:absolute;left:716.5px;top:692.1px;width:29.5px;height:1px;background:#9a9a9a;"></div><div style="position:absolute;left:715.5px;top:694.16px;width:31.5px;text-align:center;font-size:9.72px;font-weight:bold;color:#2c2c2c;white-space:nowrap;line-height:1;transform:scaleX(0.926);transform-origin:50% 0;">Ch2</div><div style="position:absolute;left:716.5px;top:704.7px;width:29.5px;height:1px;background:#9a9a9a;"></div><div style="position:absolute;left:715.5px;top:706.76px;width:31.5px;text-align:center;font-size:9.72px;font-weight:bold;color:#2c2c2c;white-space:nowrap;line-height:1;transform:scaleX(0.926);transform-origin:50% 0;">Ch3</div><div style="position:absolute;left:715.5px;top:717.3px;width:31.5px;height:12.7px;box-sizing:border-box;border:1px solid #4a6478;border-radius:3px;background:linear-gradient(#aed0e4,#86b8d8 45%,#5a98c8);border-radius:0 0 3px 3px;"></div><div style="position:absolute;left:716.5px;top:717.3px;width:29.5px;height:1px;background:#9a9a9a;"></div><div style="position:absolute;left:715.5px;top:719.36px;width:31.5px;text-align:center;font-size:9.72px;font-weight:bold;color:#ffffff;white-space:nowrap;line-height:1;transform:scaleX(0.926);transform-origin:50% 0;text-shadow:0 0 1px rgba(40,60,80,0.6);">Ch4</div><div style="position:absolute;left:751px;top:679.5px;width:74px;height:32px;box-sizing:border-box;border:1px solid #6a6a6a;border-radius:3px;background:#fff;overflow:hidden;"></div><div style="position:absolute;left:752px;top:680.5px;width:72px;height:14px;background:#000;border-radius:2px 2px 0 0;"></div><div style="position:absolute;left:755px;top:682.56px;font-size:9.72px;font-weight:bold;color:#f07ac8;white-space:nowrap;line-height:1;transform:scaleX(0.926);transform-origin:0 0;">0 V</div><div style="position:absolute;left:752px;top:694.5px;width:72px;height:3px;background:#f6f6f6;border-bottom:1px solid #8a8a8a;box-sizing:border-box;"></div><div style="position:absolute;left:787px;top:694.5px;width:1px;height:2px;background:#e02040;"></div><div style="position:absolute;left:752px;top:697.5px;width:16px;height:13px;box-sizing:border-box;background:linear-gradient(#ffffff,#f6f6f6 40%,#e4e4e4);"><svg style="position:absolute;left:0px;top:0px" width="16" height="13" viewBox="0 0 16 13"><path d="M5.0,4.7 L11.0,4.7 L8.0,8.3 Z" fill="#3a3a3a"/></svg></div><div style="position:absolute;left:768px;top:697.5px;width:15px;height:13px;box-sizing:border-box;background:linear-gradient(#ffffff,#f6f6f6 40%,#e4e4e4);border-left:1px solid #8a8a8a;"><svg style="position:absolute;left:0px;top:0px" width="15" height="13" viewBox="0 0 15 13"><path d="M5.0,8.3 L11.0,8.3 L8.0,4.7 Z" fill="#3a3a3a"/></svg></div><div style="position:absolute;left:783px;top:697.5px;width:11px;height:13px;box-sizing:border-box;background:linear-gradient(#ffffff,#f6f6f6 40%,#e4e4e4);border-left:1px solid #8a8a8a;"><div style="position:absolute;left:0px;top:1.66px;width:11px;text-align:center;font-size:11.34px;font-weight:normal;color:#3a3a3a;white-space:nowrap;line-height:1;transform:scaleX(0.926);transform-origin:50% 0;">0</div></div><div style="position:absolute;left:794px;top:697.5px;width:16px;height:13px;box-sizing:border-box;background:linear-gradient(#ffffff,#f6f6f6 40%,#e4e4e4);border-left:1px solid #8a8a8a;"><svg style="position:absolute;left:0px;top:0px" width="16" height="13" viewBox="0 0 16 13"><path d="M4.5,4.1 L12.5,4.1 L8.5,8.9 Z" fill="#3a3a3a"/></svg></div><div style="position:absolute;left:810px;top:697.5px;width:14px;height:13px;box-sizing:border-box;background:linear-gradient(#ffffff,#f6f6f6 40%,#e4e4e4);border-left:1px solid #8a8a8a;"><svg style="position:absolute;left:0px;top:0px" width="14" height="13" viewBox="0 0 14 13"><path d="M3.5,8.9 L11.5,8.9 L7.5,4.1 Z" fill="#3a3a3a"/></svg></div><div style="position:absolute;left:751px;top:715.5px;width:74px;height:14.5px;box-sizing:border-box;border:1px solid #6e6e6e;border-radius:3px;background:linear-gradient(#ffffff,#f6f6f6 40%,#e4e4e4);"></div><div style="position:absolute;left:751px;top:715.5px;width:37.5px;height:14.5px;box-sizing:border-box;border:1px solid #4a6478;border-radius:3px;background:linear-gradient(#aed0e4,#86b8d8 45%,#5a98c8);border-radius:3px 0 0 3px;"></div><div style="position:absolute;left:751px;top:717.66px;width:37.5px;text-align:center;font-size:9.72px;font-weight:bold;color:#ffffff;white-space:nowrap;line-height:1;transform:scaleX(0.926);transform-origin:50% 0;text-shadow:0 0 1px rgba(40,60,80,0.6);">Freerun</div><div style="position:absolute;left:788.5px;top:717.66px;width:36.5px;text-align:center;font-size:9.72px;font-weight:bold;color:#2c2c2c;white-space:nowrap;line-height:1;transform:scaleX(0.926);transform-origin:50% 0;">Trig'd</div><div style="position:absolute;left:714.5px;top:733.5px;width:110.5px;height:14.5px;box-sizing:border-box;border:1px solid #6e6e6e;border-radius:3px;background:linear-gradient(#ffffff,#f6f6f6 40%,#e4e4e4);"></div><div style="position:absolute;left:714.5px;top:733.5px;width:37.5px;height:14.5px;box-sizing:border-box;border:1px solid #4a6478;border-radius:3px;background:linear-gradient(#aed0e4,#86b8d8 45%,#5a98c8);border-radius:3px 0 0 3px;"></div><div style="position:absolute;left:788.5px;top:734.5px;width:1px;height:12.5px;background:#8a8a8a;"></div><div style="position:absolute;left:714.5px;top:735.86px;width:37.5px;text-align:center;font-size:9.72px;font-weight:bold;color:#ffffff;white-space:nowrap;line-height:1;transform:scaleX(0.926);transform-origin:50% 0;text-shadow:0 0 1px rgba(40,60,80,0.6);">Pos</div><div style="position:absolute;left:752px;top:735.86px;width:36.5px;text-align:center;font-size:9.72px;font-weight:bold;color:#2c2c2c;white-space:nowrap;line-height:1;transform:scaleX(0.926);transform-origin:50% 0;">Neg</div><div style="position:absolute;left:788.5px;top:735.86px;width:36.5px;text-align:center;font-size:9.72px;font-weight:bold;color:#2c2c2c;white-space:nowrap;line-height:1;transform:scaleX(0.926);transform-origin:50% 0;">Bislope</div><div style="position:absolute;left:189.7px;top:753.5px;width:80.4px;height:15.5px;box-sizing:border-box;border:1px solid #6e6e6e;background:linear-gradient(#ffffff,#f6f6f6 40%,#e4e4e4);"></div><svg style="position:absolute;left:194px;top:754px" width="18" height="14" viewBox="0 0 18 14"><path d="M3,3 Q5,0 8,2 L14,9 Q15,12 12,13 Q9,13 8,11 L3,6 Q2,4 3,3 Z" fill="#c8a860" stroke="#6a5430" stroke-width="0.8"/><path d="M5,4 L12,11" stroke="#f4e8c0" stroke-width="1.5"/><circle cx="11" cy="10" r="1.3" fill="#4a6a9a"/></svg><div style="position:absolute;left:213.6px;top:756.96px;font-size:9.72px;font-weight:bold;color:#2c2c2c;white-space:nowrap;line-height:1;transform:scaleX(0.926);transform-origin:0 0;">Channels</div><div style="position:absolute;left:189.7px;top:768.5px;width:80.4px;height:15.5px;box-sizing:border-box;border:1px solid #6e6e6e;background:linear-gradient(#aed0e4,#86b8d8 45%,#5a98c8);"></div><svg style="position:absolute;left:194px;top:770px" width="18" height="13" viewBox="0 0 18 13"><rect width="18" height="13" fill="#fff"/><path d="M1,12 L4,11 L6,9 L7,6 L8,3 L9,1 L10,3 L11,6 L12,9 L14,11 L17,12 Z" fill="#e81010"/><path d="M5,12 v-3 M7,12 v-6 M9,12 v-10 M11,12 v-6 M13,12 v-3" stroke="#fff" stroke-width="0.5"/></svg><div style="position:absolute;left:213.6px;top:771.76px;font-size:9.72px;font-weight:bold;color:#ffffff;white-space:nowrap;line-height:1;transform:scaleX(0.926);transform-origin:0 0;text-shadow:0 0 1px rgba(40,60,80,0.6);">Histogram</div><div style="position:absolute;left:269.1px;top:753.5px;width:80.4px;height:15.5px;box-sizing:border-box;border:1px solid #6e6e6e;background:linear-gradient(#ffffff,#f6f6f6 40%,#e4e4e4);"></div><svg style="position:absolute;left:274px;top:754px" width="18" height="14" viewBox="0 0 18 14"><path d="M1,12 V3 Q3,1 5,3 V12 M6,12 V3 Q8,1 10,3 V12 M11,12 V3 Q13,1 15,3 V12" stroke="#202020" stroke-width="1.4" fill="none"/><path d="M1,6 h3" stroke="#e02020"/><path d="M6,6 h4" stroke="#20c020"/><path d="M11,6 h3" stroke="#20c0f0"/></svg><div style="position:absolute;left:293px;top:756.96px;font-size:9.72px;font-weight:bold;color:#2c2c2c;white-space:nowrap;line-height:1;transform:scaleX(0.926);transform-origin:0 0;">Acquire</div><div style="position:absolute;left:269.1px;top:768.5px;width:80.4px;height:15.5px;box-sizing:border-box;border:1px solid #6e6e6e;background:linear-gradient(#ffffff,#f6f6f6 40%,#e4e4e4);"></div><svg style="position:absolute;left:274px;top:770px" width="18" height="13" viewBox="0 0 18 13"><path d="M1,1.5 H17 M1,11.5 H17 M1,1.5 L9,11.5 M1,11.5 L9,1.5 M9,1.5 L17,11.5 M9,11.5 L17,1.5" stroke="#1030e0" stroke-width="1.3" fill="none"/></svg><div style="position:absolute;left:293px;top:771.76px;font-size:9.72px;font-weight:bold;color:#2c2c2c;white-space:nowrap;line-height:1;transform:scaleX(0.926);transform-origin:0 0;">Eye Diagram</div><div style="position:absolute;left:348.5px;top:753.5px;width:80.4px;height:15.5px;box-sizing:border-box;border:1px solid #6e6e6e;background:linear-gradient(#ffffff,#f6f6f6 40%,#e4e4e4);"></div><svg style="position:absolute;left:353px;top:754px" width="18" height="14" viewBox="0 0 18 14"><path d="M1,12 H7 V2 H15" stroke="#2030d0" stroke-width="1.6" fill="none"/><path d="M3,7 h9 M3,7 l2,-2 M3,7 l2,2 M12,7 l-2,-2 M12,7 l-2,2" stroke="#e02020" stroke-width="1.2"/></svg><div style="position:absolute;left:373px;top:756.96px;font-size:9.72px;font-weight:bold;color:#2c2c2c;white-space:nowrap;line-height:1;transform:scaleX(0.926);transform-origin:0 0;">Trigger</div><div style="position:absolute;left:348.5px;top:768.5px;width:80.4px;height:15.5px;box-sizing:border-box;border:1px solid #6e6e6e;background:linear-gradient(#ffffff,#f6f6f6 40%,#e4e4e4);"></div><svg style="position:absolute;left:353px;top:770px" width="18" height="13" viewBox="0 0 18 13"><path d="M1,0.5 H17 M1,12.5 H17" stroke="#a0a0a0"/><path d="M1,2.5 H17 M1,10.5 H17 M1,2.5 L9,10.5 M1,10.5 L9,2.5 M9,2.5 L17,10.5 M9,10.5 L17,2.5" stroke="#1030e0" stroke-width="1.1" fill="none"/><ellipse cx="9" cy="6.5" rx="4.5" ry="2" fill="#a0a0b0" opacity="0.8"/></svg><div style="position:absolute;left:372.7px;top:771.76px;font-size:9.72px;font-weight:bold;color:#2c2c2c;white-space:nowrap;line-height:1;transform:scaleX(0.926);transform-origin:0 0;">Mask Test</div><div style="position:absolute;left:427.9px;top:753.5px;width:80.4px;height:15.5px;box-sizing:border-box;border:1px solid #6e6e6e;background:linear-gradient(#ffffff,#f6f6f6 40%,#e4e4e4);"></div><svg style="position:absolute;left:432px;top:754px" width="18" height="14" viewBox="0 0 18 14"><rect x="1" y="2" width="16" height="10" fill="#202020"/><rect x="2.5" y="3.5" width="13" height="7" fill="#30a030"/><path d="M3,7 Q6,4 9,7 T15,7" stroke="#e0f040" fill="none"/></svg><div style="position:absolute;left:452px;top:756.96px;font-size:9.72px;font-weight:bold;color:#2c2c2c;white-space:nowrap;line-height:1;transform:scaleX(0.926);transform-origin:0 0;">Display</div><div style="position:absolute;left:427.9px;top:768.5px;width:80.4px;height:15px;box-sizing:border-box;border:1px solid #c4c4c4;border-top:none;background:#ececec;"></div><div style="position:absolute;left:507.3px;top:753.5px;width:80.4px;height:15.5px;box-sizing:border-box;border:1px solid #6e6e6e;background:linear-gradient(#ffffff,#f6f6f6 40%,#e4e4e4);"></div><svg style="position:absolute;left:512px;top:754px" width="18" height="14" viewBox="0 0 18 14"><rect x="2" y="1" width="12" height="12" fill="#404040"/><rect x="4" y="2" width="8" height="4" fill="#f0f0f0"/><rect x="3" y="9" width="10" height="3" fill="#8080f0"/></svg><div style="position:absolute;left:532px;top:756.96px;font-size:9.72px;font-weight:bold;color:#2c2c2c;white-space:nowrap;line-height:1;transform:scaleX(0.926);transform-origin:0 0;">Save/Recall</div><div style="position:absolute;left:507.3px;top:768.5px;width:80.4px;height:15px;box-sizing:border-box;border:1px solid #c4c4c4;border-top:none;background:#ececec;"></div><div style="position:absolute;left:586.6px;top:753.5px;width:80.4px;height:15.5px;box-sizing:border-box;border:1px solid #6e6e6e;background:linear-gradient(#ffffff,#f6f6f6 40%,#e4e4e4);"></div><svg style="position:absolute;left:591px;top:754px" width="18" height="14" viewBox="0 0 18 14"><path d="M1,12 Q4,12 5,6 Q8,-1 11,6 Q12,12 16,12" stroke="#2040d0" stroke-width="1.6" fill="none"/><path d="M5,1 v12 M12,1 v12" stroke="#e02020" stroke-width="1" stroke-dasharray="1.5,1"/></svg><div style="position:absolute;left:611px;top:756.96px;font-size:9.72px;font-weight:bold;color:#2c2c2c;white-space:nowrap;line-height:1;transform:scaleX(0.926);transform-origin:0 0;">Marker</div><div style="position:absolute;left:586.6px;top:768.5px;width:80.4px;height:15px;box-sizing:border-box;border:1px solid #c4c4c4;border-top:none;background:#ececec;"></div><div style="position:absolute;left:666.0px;top:753.5px;width:80.4px;height:15.5px;box-sizing:border-box;border:1px solid #6e6e6e;background:linear-gradient(#ffffff,#f6f6f6 40%,#e4e4e4);"></div><svg style="position:absolute;left:671px;top:754px" width="18" height="14" viewBox="0 0 18 14"><path d="M2,1 v12 M5,1 v12 M5,5 H15" stroke="#1020c0" stroke-width="2" fill="none"/></svg><div style="position:absolute;left:691px;top:756.96px;font-size:9.72px;font-weight:bold;color:#2c2c2c;white-space:nowrap;line-height:1;transform:scaleX(0.926);transform-origin:0 0;">Measure</div><div style="position:absolute;left:666.0px;top:768.5px;width:80.4px;height:15px;box-sizing:border-box;border:1px solid #c4c4c4;border-top:none;background:#ececec;"></div><div style="position:absolute;left:745.4px;top:753.5px;width:80.4px;height:15.5px;box-sizing:border-box;border:1px solid #6e6e6e;background:linear-gradient(#ffffff,#f6f6f6 40%,#e4e4e4);"></div><svg style="position:absolute;left:750px;top:754px" width="18" height="14" viewBox="0 0 18 14"><text x="1" y="12" font-family="Liberation Serif" font-style="italic" font-weight="bold" font-size="13" fill="#101010">f</text><text x="7" y="11" font-family="Liberation Sans" font-size="8" fill="#101010">&#x221E;</text></svg><div style="position:absolute;left:770px;top:756.96px;font-size:9.72px;font-weight:bold;color:#2c2c2c;white-space:nowrap;line-height:1;transform:scaleX(0.926);transform-origin:0 0;">Math</div><div style="position:absolute;left:745.4px;top:768.5px;width:80.4px;height:15.5px;box-sizing:border-box;border:1px solid #6e6e6e;background:linear-gradient(#ffffff,#f6f6f6 40%,#e4e4e4);"></div><svg style="position:absolute;left:750px;top:770px" width="18" height="13" viewBox="0 0 18 13"><path d="M2,12 L9,5" stroke="#1828c8" stroke-width="3"/><path d="M8,6 Q7,1 12,1 L10,3 L12,5 L14,3 Q14,8 8,6 Z" fill="#1828c8"/></svg><div style="position:absolute;left:770px;top:771.76px;font-size:9.72px;font-weight:bold;color:#2c2c2c;white-space:nowrap;line-height:1;transform:scaleX(0.926);transform-origin:0 0;">Utility</div>
</body></html>
